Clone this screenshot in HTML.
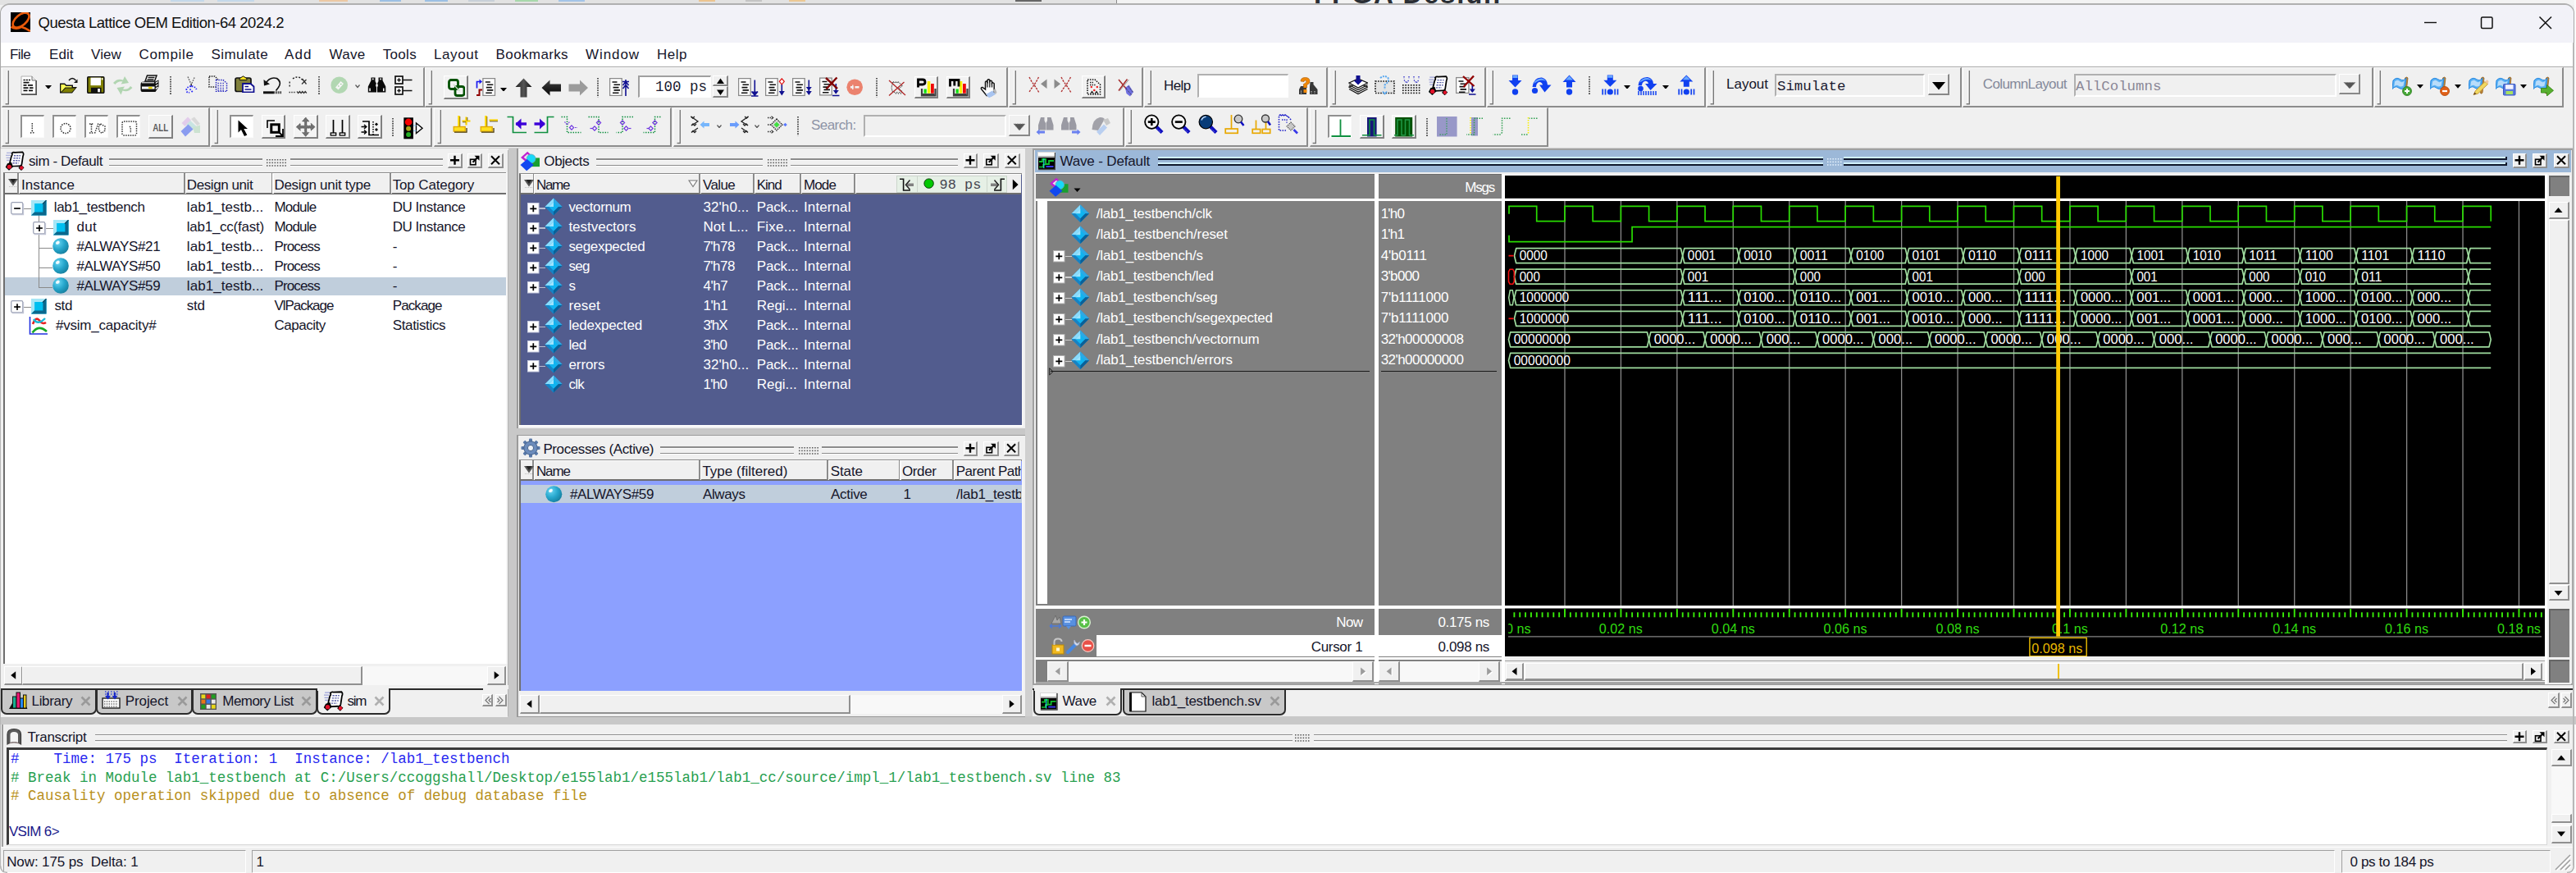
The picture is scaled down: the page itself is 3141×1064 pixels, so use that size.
<!DOCTYPE html><html><head><meta charset="utf-8"><title>Questa</title><style>
html,body{margin:0;padding:0;}
body{width:3141px;height:1064px;position:relative;overflow:hidden;background:#f0f0f0;font-family:"Liberation Sans",sans-serif;}
div,svg{position:absolute;box-sizing:border-box;}
.t{white-space:pre;line-height:20px;height:20px;}
</style></head><body>
<div style="left:0.00px;top:0.00px;width:3141.00px;height:6.00px;background:#e2e2e2;"></div>
<div style="left:1362.00px;top:0.00px;width:1779.00px;height:6.00px;background:#f3f3f3;"></div>
<div style="left:1360.50px;top:0.00px;width:1.50px;height:6.00px;background:#8a8a8a;"></div>
<div style="left:208.00px;top:0.00px;width:41.00px;height:2.20px;background:#c4d8ea;"></div>
<div style="left:265.00px;top:0.00px;width:45.00px;height:2.20px;background:#c4d8ea;"></div>
<div style="left:389.00px;top:0.00px;width:35.00px;height:2.20px;background:#ecc8a4;"></div>
<div style="left:463.00px;top:0.00px;width:26.00px;height:2.20px;background:#9cc0e4;"></div>
<div style="left:518.00px;top:0.00px;width:28.00px;height:2.20px;background:#9cc0e4;"></div>
<div style="left:571.00px;top:0.00px;width:32.00px;height:2.20px;background:#c8d0d8;"></div>
<div style="left:628.00px;top:0.00px;width:28.00px;height:2.20px;background:#a8d8ac;"></div>
<div style="left:681.00px;top:0.00px;width:32.00px;height:2.20px;background:#a4c4e8;"></div>
<div style="left:852.00px;top:0.00px;width:20.00px;height:2.20px;background:#ecc490;"></div>
<div style="left:909.00px;top:0.00px;width:20.00px;height:2.20px;background:#c4c4c4;"></div>
<div style="left:962.00px;top:0.00px;width:20.00px;height:2.20px;background:#ecc894;"></div>
<div style="left:1238.00px;top:0.00px;width:32.00px;height:2.20px;background:#666;"></div>
<div class="t" style="left:1602.00px;top:-17.03px;font-size:33px;color:#2a2e34;font-family:'Liberation Sans', sans-serif;font-weight:bold;letter-spacing:1.761px;">FPGA Design</div>
<div style="left:0px;top:4px;width:3139px;height:1061px;background:#f0f0f0;border:1px solid #a8a8a8;border-top:2px solid #b0b0b0;border-radius:12px 12px 9px 9px;overflow:hidden;"></div>
<div style="left:1px;top:6px;width:3137px;height:46px;background:#f2f2f8;border-radius:11px 11px 0 0;"></div>
<div style="left:3138.60px;top:0.00px;width:3.00px;height:1064.00px;background:#fbfbfb;"></div>
<svg style="left:13.00px;top:15.00px;" width="24.00" height="24.00" viewBox="0 0 24 24"><rect width="24" height="24" fill="#000"/><ellipse cx="12.6" cy="9.6" rx="11.8" ry="6.4" fill="none" stroke="#e85a0a" stroke-width="2.7" transform="rotate(-40 12.6 9.6)"/><path d="M0.5 17.6 Q6.5 21.6 13 17.8 Q18.5 19.3 24 23" stroke="#e85a0a" stroke-width="2.7" fill="none"/></svg>
<div class="t" style="left:46.50px;top:18.39px;font-size:18.5px;color:#111;font-family:'Liberation Sans', sans-serif;letter-spacing:-0.479px;">Questa Lattice OEM Edition-64 2024.2</div>
<svg style="left:2950.00px;top:15.00px;" width="170.00" height="26.00" viewBox="0 0 170 26"><path d="M6 12.5 H21" stroke="#111" stroke-width="1.4"/><rect x="75.5" y="6" width="13.5" height="13.5" rx="1.5" fill="none" stroke="#111" stroke-width="1.5"/><path d="M146.5 5.5 L161 20 M161 5.5 L146.5 20" stroke="#111" stroke-width="1.5"/></svg>
<div style="left:1.00px;top:52.00px;width:3137.00px;height:28.50px;background:#ffffff;"></div>
<div class="t" style="left:12.00px;top:56.51px;font-size:17px;color:#15152a;font-family:'Liberation Sans', sans-serif;letter-spacing:-0.598px;">File</div>
<div class="t" style="left:60.00px;top:56.51px;font-size:17px;color:#15152a;font-family:'Liberation Sans', sans-serif;letter-spacing:0.052px;">Edit</div>
<div class="t" style="left:111.00px;top:56.51px;font-size:17px;color:#15152a;font-family:'Liberation Sans', sans-serif;letter-spacing:0.115px;">View</div>
<div class="t" style="left:169.50px;top:56.51px;font-size:17px;color:#15152a;font-family:'Liberation Sans', sans-serif;letter-spacing:0.664px;">Compile</div>
<div class="t" style="left:257.60px;top:56.51px;font-size:17px;color:#15152a;font-family:'Liberation Sans', sans-serif;letter-spacing:0.407px;">Simulate</div>
<div class="t" style="left:347.00px;top:56.51px;font-size:17px;color:#15152a;font-family:'Liberation Sans', sans-serif;letter-spacing:1.084px;">Add</div>
<div class="t" style="left:401.50px;top:56.51px;font-size:17px;color:#15152a;font-family:'Liberation Sans', sans-serif;letter-spacing:0.294px;">Wave</div>
<div class="t" style="left:466.80px;top:56.51px;font-size:17px;color:#15152a;font-family:'Liberation Sans', sans-serif;letter-spacing:0.303px;">Tools</div>
<div class="t" style="left:529.00px;top:56.51px;font-size:17px;color:#15152a;font-family:'Liberation Sans', sans-serif;letter-spacing:0.576px;">Layout</div>
<div class="t" style="left:604.60px;top:56.51px;font-size:17px;color:#15152a;font-family:'Liberation Sans', sans-serif;letter-spacing:0.375px;">Bookmarks</div>
<div class="t" style="left:714.00px;top:56.51px;font-size:17px;color:#15152a;font-family:'Liberation Sans', sans-serif;letter-spacing:0.923px;">Window</div>
<div class="t" style="left:801.00px;top:56.51px;font-size:17px;color:#15152a;font-family:'Liberation Sans', sans-serif;letter-spacing:0.509px;">Help</div>
<div style="left:1.00px;top:80.80px;width:3137.00px;height:1.50px;background:#a8a8a8;"></div>
<div style="left:2.4px;top:82.3px;width:515.6999999999999px;height:48.3px;border-top:1px solid #fbfbfb;border-left:1px solid #fbfbfb;border-right:2px solid #8c8c8c;border-bottom:2px solid #8c8c8c;"></div>
<svg style="left:3.90px;top:84.80px;" width="10.00" height="44.30" viewBox="0 0 10 44.3"><path d="M4.9 1 V40.9" fill="none" stroke="#fcfcfc" stroke-width="1.4"/><path d="M6.3 1 V41.699999999999996 H2.6" fill="none" stroke="#787878" stroke-width="1.4"/></svg>
<div style="left:518px;top:82.3px;width:711.2px;height:48.3px;border-top:1px solid #fbfbfb;border-left:1px solid #fbfbfb;border-right:2px solid #8c8c8c;border-bottom:2px solid #8c8c8c;"></div>
<svg style="left:519.50px;top:84.80px;" width="10.00" height="44.30" viewBox="0 0 10 44.3"><path d="M4.9 1 V40.9" fill="none" stroke="#fcfcfc" stroke-width="1.4"/><path d="M6.3 1 V41.699999999999996 H2.6" fill="none" stroke="#787878" stroke-width="1.4"/></svg>
<div style="left:1230.3px;top:82.3px;width:163.8px;height:48.3px;border-top:1px solid #fbfbfb;border-left:1px solid #fbfbfb;border-right:2px solid #8c8c8c;border-bottom:2px solid #8c8c8c;"></div>
<svg style="left:1231.80px;top:84.80px;" width="10.00" height="44.30" viewBox="0 0 10 44.3"><path d="M4.9 1 V40.9" fill="none" stroke="#fcfcfc" stroke-width="1.4"/><path d="M6.3 1 V41.699999999999996 H2.6" fill="none" stroke="#787878" stroke-width="1.4"/></svg>
<div style="left:1395.4px;top:82.3px;width:223.8px;height:48.3px;border-top:1px solid #fbfbfb;border-left:1px solid #fbfbfb;border-right:2px solid #8c8c8c;border-bottom:2px solid #8c8c8c;"></div>
<svg style="left:1396.90px;top:84.80px;" width="10.00" height="44.30" viewBox="0 0 10 44.3"><path d="M4.9 1 V40.9" fill="none" stroke="#fcfcfc" stroke-width="1.4"/><path d="M6.3 1 V41.699999999999996 H2.6" fill="none" stroke="#787878" stroke-width="1.4"/></svg>
<div style="left:1620.5px;top:82.3px;width:191.00000000000006px;height:48.3px;border-top:1px solid #fbfbfb;border-left:1px solid #fbfbfb;border-right:2px solid #8c8c8c;border-bottom:2px solid #8c8c8c;"></div>
<svg style="left:1622.00px;top:84.80px;" width="10.00" height="44.30" viewBox="0 0 10 44.3"><path d="M4.9 1 V40.9" fill="none" stroke="#fcfcfc" stroke-width="1.4"/><path d="M6.3 1 V41.699999999999996 H2.6" fill="none" stroke="#787878" stroke-width="1.4"/></svg>
<div style="left:1812.8px;top:82.3px;width:267.40000000000015px;height:48.3px;border-top:1px solid #fbfbfb;border-left:1px solid #fbfbfb;border-right:2px solid #8c8c8c;border-bottom:2px solid #8c8c8c;"></div>
<svg style="left:1814.30px;top:84.80px;" width="10.00" height="44.30" viewBox="0 0 10 44.3"><path d="M4.9 1 V40.9" fill="none" stroke="#fcfcfc" stroke-width="1.4"/><path d="M6.3 1 V41.699999999999996 H2.6" fill="none" stroke="#787878" stroke-width="1.4"/></svg>
<div style="left:2081.3px;top:82.3px;width:310.49999999999983px;height:48.3px;border-top:1px solid #fbfbfb;border-left:1px solid #fbfbfb;border-right:2px solid #8c8c8c;border-bottom:2px solid #8c8c8c;"></div>
<svg style="left:2082.80px;top:84.80px;" width="10.00" height="44.30" viewBox="0 0 10 44.3"><path d="M4.9 1 V40.9" fill="none" stroke="#fcfcfc" stroke-width="1.4"/><path d="M6.3 1 V41.699999999999996 H2.6" fill="none" stroke="#787878" stroke-width="1.4"/></svg>
<div style="left:2393.2px;top:82.3px;width:500.6000000000002px;height:48.3px;border-top:1px solid #fbfbfb;border-left:1px solid #fbfbfb;border-right:2px solid #8c8c8c;border-bottom:2px solid #8c8c8c;"></div>
<svg style="left:2394.70px;top:84.80px;" width="10.00" height="44.30" viewBox="0 0 10 44.3"><path d="M4.9 1 V40.9" fill="none" stroke="#fcfcfc" stroke-width="1.4"/><path d="M6.3 1 V41.699999999999996 H2.6" fill="none" stroke="#787878" stroke-width="1.4"/></svg>
<div style="left:2894.6px;top:82.3px;width:231.7000000000001px;height:48.3px;border-top:1px solid #fbfbfb;border-left:1px solid #fbfbfb;border-right:2px solid #8c8c8c;border-bottom:2px solid #8c8c8c;"></div>
<svg style="left:2896.10px;top:84.80px;" width="10.00" height="44.30" viewBox="0 0 10 44.3"><path d="M4.9 1 V40.9" fill="none" stroke="#fcfcfc" stroke-width="1.4"/><path d="M6.3 1 V41.699999999999996 H2.6" fill="none" stroke="#787878" stroke-width="1.4"/></svg>
<div style="left:2.4px;top:130.6px;width:253.6px;height:48.099999999999994px;border-top:1px solid #fbfbfb;border-left:1px solid #fbfbfb;border-right:2px solid #8c8c8c;border-bottom:2px solid #8c8c8c;"></div>
<svg style="left:3.90px;top:133.10px;" width="10.00" height="44.10" viewBox="0 0 10 44.099999999999994"><path d="M4.9 1 V40.699999999999996" fill="none" stroke="#fcfcfc" stroke-width="1.4"/><path d="M6.3 1 V41.49999999999999 H2.6" fill="none" stroke="#787878" stroke-width="1.4"/></svg>
<div style="left:257.4px;top:130.6px;width:270.1000000000001px;height:48.099999999999994px;border-top:1px solid #fbfbfb;border-left:1px solid #fbfbfb;border-right:2px solid #8c8c8c;border-bottom:2px solid #8c8c8c;"></div>
<svg style="left:258.90px;top:133.10px;" width="10.00" height="44.10" viewBox="0 0 10 44.099999999999994"><path d="M4.9 1 V40.699999999999996" fill="none" stroke="#fcfcfc" stroke-width="1.4"/><path d="M6.3 1 V41.49999999999999 H2.6" fill="none" stroke="#787878" stroke-width="1.4"/></svg>
<div style="left:529.3px;top:130.6px;width:290.00000000000006px;height:48.099999999999994px;border-top:1px solid #fbfbfb;border-left:1px solid #fbfbfb;border-right:2px solid #8c8c8c;border-bottom:2px solid #8c8c8c;"></div>
<svg style="left:530.80px;top:133.10px;" width="10.00" height="44.10" viewBox="0 0 10 44.099999999999994"><path d="M4.9 1 V40.699999999999996" fill="none" stroke="#fcfcfc" stroke-width="1.4"/><path d="M6.3 1 V41.49999999999999 H2.6" fill="none" stroke="#787878" stroke-width="1.4"/></svg>
<div style="left:821px;top:130.6px;width:549.5px;height:48.099999999999994px;border-top:1px solid #fbfbfb;border-left:1px solid #fbfbfb;border-right:2px solid #8c8c8c;border-bottom:2px solid #8c8c8c;"></div>
<svg style="left:822.50px;top:133.10px;" width="10.00" height="44.10" viewBox="0 0 10 44.099999999999994"><path d="M4.9 1 V40.699999999999996" fill="none" stroke="#fcfcfc" stroke-width="1.4"/><path d="M6.3 1 V41.49999999999999 H2.6" fill="none" stroke="#787878" stroke-width="1.4"/></svg>
<div style="left:1371.6px;top:130.6px;width:223.90000000000015px;height:48.099999999999994px;border-top:1px solid #fbfbfb;border-left:1px solid #fbfbfb;border-right:2px solid #8c8c8c;border-bottom:2px solid #8c8c8c;"></div>
<svg style="left:1373.10px;top:133.10px;" width="10.00" height="44.10" viewBox="0 0 10 44.099999999999994"><path d="M4.9 1 V40.699999999999996" fill="none" stroke="#fcfcfc" stroke-width="1.4"/><path d="M6.3 1 V41.49999999999999 H2.6" fill="none" stroke="#787878" stroke-width="1.4"/></svg>
<div style="left:1596.9px;top:130.6px;width:290.6999999999999px;height:48.099999999999994px;border-top:1px solid #fbfbfb;border-left:1px solid #fbfbfb;border-right:2px solid #8c8c8c;border-bottom:2px solid #8c8c8c;"></div>
<svg style="left:1598.40px;top:133.10px;" width="10.00" height="44.10" viewBox="0 0 10 44.099999999999994"><path d="M4.9 1 V40.699999999999996" fill="none" stroke="#fcfcfc" stroke-width="1.4"/><path d="M6.3 1 V41.49999999999999 H2.6" fill="none" stroke="#787878" stroke-width="1.4"/></svg>
<div style="left:1.00px;top:180.20px;width:3137.00px;height:1.40px;background:#d0d0d0;"></div>
<div style="left:777.5px;top:91.5px;width:89.5px;height:27.5px;background:#fff;border-top:2px solid #a0a0a0;border-left:2px solid #a0a0a0;border-right:1px solid #fff;border-bottom:1px solid #fff;"></div>
<div class="t" style="left:798.99px;top:96.24px;font-size:17.5px;color:#1a1a30;font-family:'Liberation Mono', monospace;letter-spacing:0.000px;">100 ps</div>
<div style="left:868.5px;top:91.5px;width:19.5px;height:13.5px;background:#f0f0f0;border-right:2px solid #888;border-bottom:2px solid #888;border-top:1px solid #fff;border-left:1px solid #fff"></div>
<div style="left:868.5px;top:105px;width:19.5px;height:13.5px;background:#f0f0f0;border-right:2px solid #888;border-bottom:2px solid #888;border-top:1px solid #fff;border-left:1px solid #fff"></div>
<svg style="left:868.50px;top:91.50px;" width="20.00" height="27.00" viewBox="0 0 20 27"><path d="M5 10 L9.5 3.5 L14 10Z M5 17.5 L14 17.5 L9.5 24Z" fill="#000"/></svg>
<div class="t" style="left:989.00px;top:143.41px;font-size:17px;color:#8d93a6;font-family:'Liberation Sans', sans-serif;letter-spacing:-0.570px;">Search:</div>
<div style="left:1053px;top:139.5px;width:173.5px;height:27.5px;background:#f0f0f0;border-top:2px solid #b0b0b0;border-left:2px solid #b0b0b0;border-right:2px solid #fff;border-bottom:2px solid #fff;"></div>
<div style="left:1230px;top:139.5px;width:25.5px;height:26px;background:#f0f0f0;border-right:2px solid #888;border-bottom:2px solid #888;border-top:1px solid #fff;border-left:1px solid #fff"></div>
<svg style="left:1230.00px;top:139.50px;" width="26.00" height="26.00" viewBox="0 0 26 26"><path d="M6 11 L20 11 L13 19Z" fill="#555" stroke="#888" stroke-width="1" stroke-dasharray="1 1"/></svg>
<div class="t" style="left:1419.00px;top:94.91px;font-size:17px;color:#15152a;font-family:'Liberation Sans', sans-serif;letter-spacing:-0.616px;">Help</div>
<div style="left:1460px;top:90px;width:111px;height:28.5px;background:#fff;border-top:2px solid #b0b0b0;border-left:2px solid #b0b0b0;border-right:1px solid #fff;border-bottom:1px solid #fff;"></div>
<div class="t" style="left:2105.00px;top:93.41px;font-size:17px;color:#15152a;font-family:'Liberation Sans', sans-serif;letter-spacing:-0.007px;">Layout</div>
<div style="left:2163.5px;top:90px;width:183.5px;height:28px;background:#f0f0f0;border-top:2px solid #b0b0b0;border-left:2px solid #b0b0b0;border-right:2px solid #fff;border-bottom:2px solid #fff;"></div>
<div class="t" style="left:2167.00px;top:96.27px;font-size:17.4px;color:#1a1a30;font-family:'Liberation Mono', monospace;letter-spacing:0.000px;">Simulate</div>
<div style="left:2350.5px;top:90px;width:26px;height:25.5px;background:#f0f0f0;border-right:2px solid #888;border-bottom:2px solid #888;border-top:1px solid #fff;border-left:1px solid #fff"></div>
<svg style="left:2350.50px;top:90.00px;" width="26.00" height="26.00" viewBox="0 0 26 26"><path d="M5 10 L21 10 L13 19.5Z" fill="#000"/></svg>
<div class="t" style="left:2417.80px;top:93.41px;font-size:17px;color:#84899a;font-family:'Liberation Sans', sans-serif;letter-spacing:-0.635px;">ColumnLayout</div>
<div style="left:2528.5px;top:90px;width:320px;height:27.5px;background:#f0f0f0;border-top:2px solid #b0b0b0;border-left:2px solid #b0b0b0;border-right:2px solid #fff;border-bottom:2px solid #fff;"></div>
<div class="t" style="left:2531.00px;top:96.27px;font-size:17.4px;color:#8a8796;font-family:'Liberation Mono', monospace;letter-spacing:0.000px;">AllColumns</div>
<div style="left:2852px;top:90px;width:26px;height:25px;background:#f0f0f0;border-right:2px solid #888;border-bottom:2px solid #888;border-top:1px solid #fff;border-left:1px solid #fff"></div>
<svg style="left:2852.00px;top:90.00px;" width="26.00" height="25.00" viewBox="0 0 26 25"><path d="M6 10.5 L20 10.5 L13 18Z" fill="#555" stroke="#888" stroke-width="1" stroke-dasharray="1 1"/></svg>
<svg style="left:25.00px;top:91.50px;" width="20.00" height="24.00" viewBox="0 0 20 24"><path d="M1 1 H14 L19 6 V23 H1Z" fill="#fff" stroke="#b0b0b0" stroke-width="1"/><path d="M19.2 6 V23.2 H1" fill="none" stroke="#555" stroke-width="1.8"/><path d="M14 1 V6 H19" fill="#e8e8e8" stroke="#777" stroke-width="1"/><path d="M3.5 5.5 h8.5" stroke="#111" stroke-width="1.6" stroke-dasharray="2.2 1"/><path d="M3.5 8.7 h7 M3.5 11.9 h4 M9 11.9 h6 M3.5 15.1 h6 M11 15.1 h4.5 M3.5 18.3 h5 M10 18.3 h5" stroke="#111" stroke-width="1.7"/></svg>
<svg style="left:54.80px;top:103.50px;" width="8.00" height="4.80" viewBox="0 0 8 4.8"><path d="M0 0 H8 L4.0 4.8Z" fill="#000"/></svg>
<svg style="left:71.50px;top:94.00px;" width="23.00" height="20.00" viewBox="0 0 23 20"><path d="M12 4 Q16 -1 20.5 4" fill="none" stroke="#111" stroke-width="1.5"/><path d="M22.5 2.5 V7 H18Z" fill="#111"/><path d="M1 7.5 H7 L9 9.5 H17 V12 H22 L16 19.5 H1Z" fill="#111"/><path d="M2.3 9 H6.5 L8.5 11 H15.5 V12.5 H7.5 L2.3 18Z" fill="#ffff58"/><path d="M8 13.5 H20 L15.5 18.5 H3Z" fill="#808000"/></svg>
<svg style="left:106.00px;top:93.00px;" width="21.50" height="21.00" viewBox="0 0 21.5 21"><rect x="0.8" y="0.8" width="20" height="19.5" rx="1" fill="#808000" stroke="#111" stroke-width="1.6"/><rect x="4.5" y="1.6" width="12.5" height="9.5" fill="#fff"/><rect x="17.8" y="2" width="1.6" height="2.4" fill="#fff"/><rect x="5" y="13.8" width="12.5" height="6" fill="#111"/><rect x="13.2" y="15" width="2.7" height="4.3" fill="#fff"/></svg>
<svg style="left:137.00px;top:91.50px;" width="25.50" height="24.50" viewBox="0 0 25.5 24.5"><g fill="#9ccc9c" opacity="0.75"><path d="M1 9 Q6 3 13 5.5 L15 1 L20 9 L10.5 10.5 L12.5 7.5 Q7 6.5 3.5 11Z"/><path d="M24.5 15 Q19 21 12.5 18.5 L10.5 23.5 L5.5 15 L15 13.5 L13 16.5 Q18.5 18 22 13Z"/></g></svg>
<svg style="left:170.00px;top:91.00px;" width="25.00" height="22.50" viewBox="0 0 25 22.5"><path d="M7 8 L9.5 1 H21 L18.5 8Z" fill="#fff" stroke="#111" stroke-width="1.5"/><path d="M10.5 3.5 h8 M9.5 6 h8" stroke="#111" stroke-width="1.4"/><path d="M1.5 12 Q1.5 8.5 5 8.5 H19 L23.5 6.5 V15 L19.5 21 H3.5 Q1.5 21 1.5 18Z" fill="#111"/><path d="M3 14.5 H18.5 V17.5 H3Z" fill="#fff"/><rect x="11" y="14.8" width="4.6" height="2.4" fill="#e8d800"/><path d="M19.8 10.5 L22.5 8.5 M19.8 14 L22.5 12 M19.8 17.5 L22.5 15" stroke="#fff" stroke-width="1.3"/><path d="M3 9.8 H18" stroke="#fff" stroke-width="1.1"/></svg>
<svg style="left:206.70px;top:93.00px;" width="2.00" height="22.50" viewBox="0 0 2 22.5"><path d="M1 0 V22.5" stroke="#333" stroke-width="1.6" stroke-dasharray="1.6 1.3"/></svg>
<svg style="left:225.50px;top:92.50px;" width="15.00" height="22.00" viewBox="0 0 15 22"><path d="M3 0.5 L7.3 10 L11.5 0.5" fill="none" stroke="#666" stroke-width="1.4" stroke-dasharray="1.8 1.2"/><path d="M7.3 9 V12" stroke="#444" stroke-width="1.4"/><path d="M7 12 Q1 13 1.2 17.5 Q2.5 21 5 19.5 M7.5 12 Q13 13 13.5 16 M5.5 15.5 L9 19.5" fill="none" stroke="#2828f8" stroke-width="1.8" stroke-dasharray="1.7 1.5"/></svg>
<svg style="left:254.00px;top:91.50px;" width="24.00" height="20.50" viewBox="0 0 24 20.5"><path d="M1 1 H8 L11 4 V14 H1Z" fill="none" stroke="#222" stroke-width="1.5" stroke-dasharray="1.5 1.3"/><path d="M9.5 5.5 H18 L22.5 9.5 V19.5 H9.5Z" fill="#f0f0f0" stroke="#2828c0" stroke-width="1.5" stroke-dasharray="1.5 1.3"/><path d="M11.5 9.5 h9 M11.5 12.5 h9 M11.5 15.5 h9 M11.5 18 h9" stroke="#2828c0" stroke-width="1.4" stroke-dasharray="1.3 1.7"/></svg>
<svg style="left:286.00px;top:91.50px;" width="24.50" height="21.50" viewBox="0 0 24.5 21.5"><rect x="1" y="3" width="19" height="16.5" rx="2" fill="#80803c" stroke="#111" stroke-width="1.7"/><path d="M6 3.8 L10.5 0.8 L15 3.8 V5.5 H6Z" fill="#f8e020" stroke="#111" stroke-width="1"/><path d="M10 10 H19.5 L23.5 13.5 V20.5 H10Z" fill="#fff" stroke="#101090" stroke-width="1.8"/><path d="M12.5 13.5 h4.5 M12.5 17 h8" stroke="#101090" stroke-width="1.6"/></svg>
<svg style="left:320.00px;top:92.50px;" width="23.50" height="22.00" viewBox="0 0 23.5 22"><path d="M3.5 9 Q9 0 17.5 2.5 Q24 7 19.5 13.5 L16.5 17.5" fill="none" stroke="#111" stroke-width="1.6"/><path d="M1.5 4 L2 11.5 L9 9.5Z" fill="#111"/><path d="M1 19.8 H14" stroke="#111" stroke-width="3"/><path d="M14.5 19.8 H23" stroke="#111" stroke-width="3" stroke-dasharray="1.2 1.2"/></svg>
<svg style="left:351.50px;top:92.50px;" width="23.50" height="22.00" viewBox="0 0 23.5 22"><path d="M5 3 Q9.5 -0.5 14.5 2 L19.5 7" fill="none" stroke="#222" stroke-width="1.5" stroke-dasharray="2 1.8"/><path d="M16.5 3 L21.5 9.5 M21.5 4 L16 9.5" stroke="#333" stroke-width="1.3"/><path d="M1.2 6.5 v2 M1.2 10.5 v2" stroke="#333" stroke-width="1.5"/><path d="M0.5 19.5 H9" stroke="#333" stroke-width="1.5" stroke-dasharray="1.4 1.4"/><path d="M10 18.5 l1.7 2 l1.7 -2 l1.7 2 l1.7 -2 l1.7 2 l1.7 -2 l1.7 2" fill="none" stroke="#333" stroke-width="1.2"/></svg>
<svg style="left:387.80px;top:93.00px;" width="2.00" height="22.50" viewBox="0 0 2 22.5"><path d="M1 0 V22.5" stroke="#333" stroke-width="1.6" stroke-dasharray="1.6 1.3"/></svg>
<svg style="left:402.70px;top:92.50px;" width="21.50" height="21.50" viewBox="0 0 21.5 21.5"><circle cx="10.7" cy="10.7" r="10.3" fill="#8cc88c" opacity="0.62"/><path d="M6 13.5 L12.5 6 L16 9 L9.5 16.5Z" fill="#f4f4f4"/><path d="M9 12 h1.5 M12 9.5 h1.5" stroke="#8cc88c" stroke-width="1.2"/></svg>
<svg style="left:432.50px;top:103.00px;" width="6.00" height="4.50" viewBox="0 0 6 4.5"><path d="M0.5 0.5 L3 3.5 L5.5 0.5" fill="none" stroke="#555" stroke-width="1.2"/></svg>
<svg style="left:447.80px;top:92.50px;" width="23.00" height="20.50" viewBox="0 0 23 20.5"><path d="M4.5 1.5 H9.5 V6 L11 9 V19.5 H0.8 V12.5 L4.5 5Z M13.5 1.5 H18.5 V5 L22.3 12.5 V19.5 H12 V9 L13.5 6Z" fill="#0a0a0a"/><rect x="6" y="2.5" width="1.6" height="1.8" fill="#fff"/><rect x="15.3" y="2.5" width="1.6" height="1.8" fill="#fff"/><rect x="2.3" y="14.5" width="1.5" height="3.6" fill="#fff"/><rect x="19" y="14.5" width="1.5" height="3.6" fill="#fff"/><rect x="10.2" y="9.5" width="2.6" height="3" fill="#f0f0f0"/></svg>
<svg style="left:481.00px;top:91.50px;" width="22.00" height="24.00" viewBox="0 0 22 24"><rect x="1" y="1" width="9" height="9" fill="#fff" stroke="#111" stroke-width="1.7"/><rect x="1" y="14" width="9" height="9" fill="#fff" stroke="#111" stroke-width="1.7"/><path d="M10 5.5 H21.5 M10 18.5 H21.5" stroke="#111" stroke-width="1.6"/><path d="M3.3 5.5 h4.4 M5.5 3.3 v4.4 M3.3 18.5 h4.4 M5.5 16.3 v4.4" stroke="#111" stroke-width="1.5"/></svg>
<div style="left:541px;top:91.5px;width:30px;height:29.299999999999997px;background:#f2f2f2;border-top:1px solid #fff;border-left:1px solid #fff;border-right:2px solid #808080;border-bottom:2px solid #808080;"></div>
<svg style="left:545.50px;top:95.50px;" width="21.50" height="22.00" viewBox="0 0 21.5 22"><rect x="1.5" y="1.5" width="11" height="11" rx="2.5" fill="none" stroke="#005000" stroke-width="2.8"/><rect x="9" y="9.5" width="11" height="11" rx="2.5" fill="none" stroke="#005000" stroke-width="2.8"/><path d="M7 7 L14.5 15" stroke="#c8d8c8" stroke-width="1.2"/></svg>
<svg style="left:580.00px;top:94.50px;" width="24.50" height="22.50" viewBox="0 0 24.5 22.5"><g transform="translate(8.3,0)"><rect x="0.6" y="0.6" width="14.600000000000001" height="20.8" fill="#fff" stroke="#8a8a8a" stroke-width="1.3"/><path d="M3.5 5 h6 M5.5 8.3 h7.5 M4.5 11.6 h7 M5.5 14.9 h7.5 M4 18.2 h7.5" stroke="#111" stroke-width="1.6"/></g><path d="M1.5 12.5 V4.5 H5.5" fill="none" stroke="#1818f0" stroke-width="1.7"/><path d="M4.5 1.5 L8 4.5 L4.5 7.5Z" fill="#1818f0"/><path d="M1 21 H4.5 V14.5 H8" fill="none" stroke="#900000" stroke-width="2"/></svg>
<svg style="left:610.00px;top:106.50px;" width="8.00" height="4.80" viewBox="0 0 8 4.8"><path d="M0 0 H8 L4.0 4.8Z" fill="#000"/></svg>
<svg style="left:628.00px;top:94.50px;" width="21.00" height="24.00" viewBox="0 0 21 24"><defs><linearGradient id="ga" x1="0" x2="1"><stop offset="0" stop-color="#222"/><stop offset="0.5" stop-color="#555"/><stop offset="1" stop-color="#111"/></linearGradient></defs><path d="M10.5 0.5 L20.5 11 H14.5 V23.5 H6.5 V11 H0.5Z" fill="url(#ga)"/></svg>
<svg style="left:659.50px;top:96.50px;" width="24.50" height="20.00" viewBox="0 0 24.5 20"><defs><linearGradient id="gb" x1="0" x2="0" y1="0" y2="1"><stop offset="0" stop-color="#444"/><stop offset="0.5" stop-color="#222"/><stop offset="1" stop-color="#080808"/></linearGradient></defs><path d="M0.5 10 L10.5 0.5 V5.5 H24 V14.5 H10.5 V19.5Z" fill="url(#gb)"/></svg>
<svg style="left:692.50px;top:96.50px;" width="24.50" height="20.00" viewBox="0 0 24.5 20"><path d="M24 10 L14 0.5 V5.5 H0.5 V14.5 H14 V19.5Z" fill="#555" opacity="0.55"/></svg>
<svg style="left:728.40px;top:95.00px;" width="2.00" height="23.50" viewBox="0 0 2 23.5"><path d="M1 0 V23.5" stroke="#333" stroke-width="1.6" stroke-dasharray="1.6 1.3"/></svg>
<svg style="left:742.50px;top:94.50px;" width="26.00" height="22.50" viewBox="0 0 26 22.5"><rect x="0.6" y="0.6" width="14.600000000000001" height="20.8" fill="#fff" stroke="#8a8a8a" stroke-width="1.3"/><path d="M3.5 5 h6 M5.5 8.3 h7.5 M4.5 11.6 h7 M5.5 14.9 h7.5 M4 18.2 h7.5" stroke="#111" stroke-width="1.6"/><path d="M20 22 V2 M16 4.5 H24 M16.5 9 L20 4.5 L23.5 9 M16.5 13 L20 8.5 L23.5 13" fill="none" stroke="#101090" stroke-width="1.6"/></svg>
<svg style="left:900.00px;top:94.50px;" width="25.00" height="23.00" viewBox="0 0 25 23"><rect x="0.6" y="0.6" width="14.600000000000001" height="20.8" fill="#fff" stroke="#8a8a8a" stroke-width="1.3"/><path d="M3.5 5 h6 M5.5 8.3 h7.5 M4.5 11.6 h7 M5.5 14.9 h7.5 M4 18.2 h7.5" stroke="#111" stroke-width="1.6"/><path d="M20.3 2.5 V21.5 M16.5 16.5 L20.3 21 L24 16.5 M16 22 H24.5" fill="none" stroke="#101090" stroke-width="1.6"/><path d="M16.8 16.5 H23.8 L20.3 21Z" fill="#101090"/></svg>
<svg style="left:933.30px;top:94.50px;" width="25.00" height="23.00" viewBox="0 0 25 23"><rect x="0.6" y="0.6" width="14.600000000000001" height="20.8" fill="#fff" stroke="#8a8a8a" stroke-width="1.3"/><path d="M3.5 5 h6 M5.5 8.3 h7.5 M4.5 11.6 h7 M5.5 14.9 h7.5 M4 18.2 h7.5" stroke="#111" stroke-width="1.6"/><path d="M20.3 8 V20" stroke="#101090" stroke-width="1.6"/><path d="M16.8 16 H23.8 L20.3 21.5Z" fill="#101090"/><path d="M20.3 0.8 L23.3 4.3 L20.3 7.8 L17.3 4.3Z" fill="#fff" stroke="#e01010" stroke-width="1.2"/></svg>
<svg style="left:966.30px;top:94.50px;" width="25.00" height="23.00" viewBox="0 0 25 23"><rect x="0.6" y="0.6" width="14.600000000000001" height="20.8" fill="#fff" stroke="#8a8a8a" stroke-width="1.3"/><path d="M3.5 5 h6 M5.5 8.3 h7.5 M4.5 11.6 h7 M5.5 14.9 h7.5 M4 18.2 h7.5" stroke="#111" stroke-width="1.6"/><path d="M20.3 2.5 V19" stroke="#101090" stroke-width="1.6"/><path d="M16.8 11 H23.8 L20.3 15.5Z M16.8 16 H23.8 L20.3 21Z" fill="#101090"/></svg>
<svg style="left:999.00px;top:93.00px;" width="25.00" height="24.50" viewBox="0 0 25 24.5"><g transform="translate(0,1.5)"><rect x="0.6" y="0.6" width="14.600000000000001" height="20.8" fill="#fff" stroke="#8a8a8a" stroke-width="1.3"/><path d="M3.5 5 h6 M5.5 8.3 h7.5 M4.5 11.6 h7 M5.5 14.9 h7.5 M4 18.2 h7.5" stroke="#111" stroke-width="1.6"/></g><path d="M20.3 9 V21 M16 23.5 H24.5" stroke="#101090" stroke-width="1.6"/><path d="M16.8 17 H23.8 L20.3 21.5Z" fill="#101090"/><path d="M8 2 L22 15 M21.5 1.5 L8.5 15.5" stroke="#800000" stroke-width="2.4"/></svg>
<svg style="left:1032.00px;top:96.00px;" width="20.50" height="20.50" viewBox="0 0 20.5 20.5"><circle cx="10.2" cy="10.2" r="9.8" fill="#e83818" opacity="0.6"/><path d="M5 10.2 h3.5 M10.5 10.2 h5" stroke="#f4f4f4" stroke-width="2.4"/><path d="M7.8 7.5 v5.5" stroke="#f4f4f4" stroke-width="1.4"/></svg>
<svg style="left:1067.70px;top:95.00px;" width="2.00" height="23.50" viewBox="0 0 2 23.5"><path d="M1 0 V23.5" stroke="#333" stroke-width="1.6" stroke-dasharray="1.6 1.3"/></svg>
<svg style="left:1082.50px;top:96.50px;" width="22.00" height="20.50" viewBox="0 0 22 20.5"><path d="M6 2.5 l1.5 1.5 l1.5 -1.5 l1.5 1.5 l1.5 -1.5 l1.5 1.5 L17 7.5 L13 11 L17 14.5 l-1.5 2.5 l-1.5 -1.5 l-1.5 1.5 l-1.5 -1.5 l-1.5 1.5 l-1.5 -1.5 L5 14 Q3.5 10 5 6Z" fill="none" stroke="#444" stroke-width="1.1" stroke-dasharray="1.3 0.9"/><path d="M1 1 L21 19 M19.5 3 L1 19.5" stroke="#b02828" stroke-width="1.3"/></svg>
<div style="left:1115px;top:92.5px;width:29px;height:27.799999999999997px;background:#f2f2f2;border-top:1px solid #fff;border-left:1px solid #fff;border-right:2px solid #808080;border-bottom:2px solid #808080;"></div>
<svg style="left:1115.00px;top:92.50px;" width="29.00" height="28.00" viewBox="0 0 29 28"><path d="M9 15 V23.5 H25.5 V15" fill="none" stroke="#404040" stroke-width="2.2"/><rect x="10" y="21" width="14.5" height="2.6" fill="#404040"/><rect x="11.5" y="15.5" width="3.3" height="5.2" fill="#10e010"/><rect x="15.8" y="6" width="3.5" height="14.7" fill="#f8f000"/><rect x="20" y="9" width="3.8" height="11.7" fill="#f00808"/><path d="M4.5 13.5 V4 H10 Q13 4 13 7 Q13 10 10 10 H4.5" fill="none" stroke="#000" stroke-width="2.8"/></svg>
<div style="left:1153.7px;top:92.5px;width:29.0px;height:27.799999999999997px;background:#f2f2f2;border-top:1px solid #fff;border-left:1px solid #fff;border-right:2px solid #808080;border-bottom:2px solid #808080;"></div>
<svg style="left:1153.70px;top:92.50px;" width="29.00" height="28.00" viewBox="0 0 29 28"><path d="M9 15 V23.5 H25.5 V15" fill="none" stroke="#404040" stroke-width="2.2"/><rect x="10" y="21" width="14.5" height="2.6" fill="#404040"/><rect x="11.5" y="15.5" width="3.3" height="5.2" fill="#10e010"/><rect x="15.8" y="6" width="3.5" height="14.7" fill="#f8f000"/><rect x="20" y="9" width="3.8" height="11.7" fill="#f00808"/><path d="M4.5 12.5 V4.5 H15 V12.5 M9.8 4.5 V11.5" fill="none" stroke="#000" stroke-width="2.8"/></svg>
<svg style="left:1192.50px;top:94.50px;" width="23.00" height="24.50" viewBox="0 0 23 24.5"><path d="M8.5 14 V5 Q9.7 3.2 11 5 V2.8 Q12.4 0.8 13.8 2.8 V4 Q15.2 2.2 16.5 4.2 V6.5 Q18 5 19.2 7 V15 Q19.5 19 16 21.5 H10 L3.5 13.5 Q2.8 11.2 5 11.5Z" fill="#fff" stroke="#111" stroke-width="1.5"/><path d="M11 5 V11.5 M13.8 4 V11.5 M16.5 6 V11.5" stroke="#111" stroke-width="1.2"/><path d="M9 20 L17 15.5 L21 20 L13 24.3Z" fill="#a8c4f0"/><path d="M17.5 15 L20.5 13 L22.5 17.5 L21 20Z" fill="#b8b8b8"/></svg>
<svg style="left:1254.00px;top:93.00px;" width="14.00" height="21.00" viewBox="0 0 14 21"><path d="M1 1 L4 6.5 L7 10.5 L3.5 15 L0.5 20 M12.5 1 L9.5 6.5 L7 10.5 L10 15 L13 20" fill="none" stroke="#b03030" stroke-width="1.4" stroke-dasharray="2.6 1.2"/></svg>
<svg style="left:1267.50px;top:96.00px;" width="9.00" height="12.50" viewBox="0 0 9 12.5"><path d="M8.5 0.5 L1 6.2 L8.5 12 Z" fill="#555" opacity="0.65"/></svg>
<svg style="left:1284.80px;top:96.00px;" width="9.00" height="12.50" viewBox="0 0 9 12.5"><path d="M0.5 0.5 L8 6.2 L0.5 12 Z" fill="#555" opacity="0.65"/></svg>
<svg style="left:1293.30px;top:93.00px;" width="14.00" height="21.00" viewBox="0 0 14 21"><path d="M1 1 L4 6.5 L7 10.5 L3.5 15 L0.5 20 M12.5 1 L9.5 6.5 L7 10.5 L10 15 L13 20" fill="none" stroke="#b03030" stroke-width="1.4" stroke-dasharray="2.6 1.2"/></svg>
<div style="left:1319px;top:91.5px;width:29.299999999999955px;height:28.799999999999997px;background:#f2f2f2;border-top:1px solid #fff;border-left:1px solid #fff;border-right:2px solid #808080;border-bottom:2px solid #808080;"></div>
<svg style="left:1325.00px;top:96.00px;" width="18.00" height="20.00" viewBox="0 0 18 20"><path d="M1 1 H10 L16.5 7 V19 H1Z" fill="none" stroke="#111" stroke-width="1.6" stroke-dasharray="1.5 1.4"/><path d="M4 4.5 h5 M4 7.5 h7" stroke="#111" stroke-width="1.3" stroke-dasharray="1.3 1.3"/><path d="M4.5 18.5 l2 -3 l2 3 M10 18.5 l2 -3 l2 3" fill="none" stroke="#111" stroke-width="1.2"/><circle cx="5.8" cy="10" r="1.2" fill="#f02020"/><circle cx="12.8" cy="10" r="1.2" fill="#f02020"/><circle cx="9.3" cy="14" r="1.3" fill="#f02020"/></svg>
<svg style="left:1362.50px;top:95.50px;" width="20.00" height="23.00" viewBox="0 0 20 23"><path d="M1 1 L10.5 12.5 M11.5 0.5 L1 14.5" stroke="#a83030" stroke-width="1.6"/><path d="M13.5 1 L2.5 14.5" stroke="#999" stroke-width="1"/><path d="M9 11 L13.5 7.5 L19 16 L15 21.5 L10.5 18Z" fill="#3838d8" opacity="0.7"/><path d="M10 12 L17 20 M12.5 9 L19 17" stroke="#333" stroke-width="1" stroke-dasharray="1 1"/></svg>
<svg style="left:1582.50px;top:92.50px;" width="24.50" height="22.50" viewBox="0 0 24.5 22.5"><path d="M14.5 7 H18.5 V10 L23.5 16 V22 H14 V13Z M3 12 H7 L10 14 V22 H1 V16Z" fill="#383838"/><path d="M16 18 v3 M20 18 v3 M3.5 17.5 v3.5" stroke="#c8c8c8" stroke-width="1.2" stroke-dasharray="1.3 1"/><path d="M3 6 Q3 1.5 8.5 1.5 Q14 1.5 14 6 Q14 9 10.5 10.5 L10.5 14 H6.5 V9.5 Q10 8 10 6 Q10 5 8.5 5 Q7 5 7 6.5Z" fill="#f08808" stroke="#a85800" stroke-width="0.6"/><rect x="6.5" y="16" width="4" height="4" fill="#f08808"/></svg>
<svg style="left:1643.80px;top:91.00px;" width="24.50" height="25.00" viewBox="0 0 24.5 25"><path d="M1 15 L12 10 L23.5 15 L12 21Z" fill="#fff" stroke="#111" stroke-width="1.3"/><path d="M1 17.5 L12 23.5 L23.5 17.5 M1 12.5 L12 18.5 L23.5 12.5" fill="none" stroke="#111" stroke-width="1.3"/><path d="M1 10 L12 5 L23.5 10 L12 16Z" fill="#fff" stroke="#111" stroke-width="1.3"/><path d="M9.5 1 H14.5 V7 H17.5 L12 12.5 L6.5 7 H9.5Z" fill="#101090"/></svg>
<svg style="left:1675.50px;top:91.50px;" width="25.00" height="24.00" viewBox="0 0 25 24"><rect x="1" y="7" width="23" height="14.5" fill="#e4e4e4" stroke="#111" stroke-width="1.6" stroke-dasharray="1.6 1.5"/><path d="M7 3 Q12 -1 16.5 3 Q18.5 7 12.5 11.5 V17" fill="none" stroke="#58a8f0" stroke-width="2" stroke-dasharray="2 1.2"/><path d="M10 19.5 L12.5 22.5 L15 19.5" fill="none" stroke="#58a8f0" stroke-width="1.5"/></svg>
<svg style="left:1708.50px;top:91.50px;" width="24.00" height="24.00" viewBox="0 0 24 24"><rect x="1.0" y="11.0" width="1.6" height="1.6" fill="#111"/><rect x="1.0" y="14.2" width="1.6" height="1.6" fill="#111"/><rect x="1.0" y="17.4" width="1.6" height="1.6" fill="#111"/><rect x="1.0" y="20.6" width="1.6" height="1.6" fill="#111"/><rect x="4.3" y="11.0" width="1.6" height="1.6" fill="#111"/><rect x="4.3" y="14.2" width="1.6" height="1.6" fill="#111"/><rect x="4.3" y="17.4" width="1.6" height="1.6" fill="#111"/><rect x="4.3" y="20.6" width="1.6" height="1.6" fill="#111"/><rect x="7.6" y="11.0" width="1.6" height="1.6" fill="#111"/><rect x="7.6" y="14.2" width="1.6" height="1.6" fill="#111"/><rect x="7.6" y="17.4" width="1.6" height="1.6" fill="#111"/><rect x="7.6" y="20.6" width="1.6" height="1.6" fill="#111"/><rect x="10.9" y="11.0" width="1.6" height="1.6" fill="#111"/><rect x="10.9" y="14.2" width="1.6" height="1.6" fill="#111"/><rect x="10.9" y="17.4" width="1.6" height="1.6" fill="#111"/><rect x="10.9" y="20.6" width="1.6" height="1.6" fill="#111"/><rect x="14.2" y="11.0" width="1.6" height="1.6" fill="#111"/><rect x="14.2" y="14.2" width="1.6" height="1.6" fill="#111"/><rect x="14.2" y="17.4" width="1.6" height="1.6" fill="#111"/><rect x="14.2" y="20.6" width="1.6" height="1.6" fill="#111"/><rect x="17.5" y="11.0" width="1.6" height="1.6" fill="#111"/><rect x="17.5" y="14.2" width="1.6" height="1.6" fill="#111"/><rect x="17.5" y="17.4" width="1.6" height="1.6" fill="#111"/><rect x="17.5" y="20.6" width="1.6" height="1.6" fill="#111"/><rect x="20.8" y="11.0" width="1.6" height="1.6" fill="#111"/><rect x="20.8" y="14.2" width="1.6" height="1.6" fill="#111"/><rect x="20.8" y="17.4" width="1.6" height="1.6" fill="#111"/><rect x="20.8" y="20.6" width="1.6" height="1.6" fill="#111"/><path d="M3 1 v3 M9 1 v3 M15 1 v3 M21 1 v3" stroke="#3838c8" stroke-width="1.4" stroke-dasharray="1.4 1.4"/><path d="M3 5.5 L6 9 L9 5.5 M15 5.5 L18 9 L21 5.5" fill="none" stroke="#3838c8" stroke-width="1.3" stroke-dasharray="1.4 1"/></svg>
<svg style="left:1741.00px;top:91.50px;" width="25.00" height="24.50" viewBox="0 0 24 24"><path d="M2 2 h6 M1 5 h6 M1.5 8 h5 M2 11 h4" stroke="#9aa0d8" stroke-width="1.2"/><path d="M8.5 2.5 Q10 0.8 12 1.6 L21.5 1.2 Q23.5 3 22 6 L20.5 16 Q20 18.5 17 18 L7 18.5 Q5 17 6 14 L8 6 Q9.5 4.5 8.5 2.5Z" fill="#fff" stroke="#000" stroke-width="1.7"/><path d="M11 5.5 h8 M10.5 8.5 h8 M10 11.5 h8 M9.5 14.5 h7" stroke="#5a60a8" stroke-width="1.3" stroke-dasharray="2.2 1"/><path d="M3 15 L8 13.5 L10 19 L5 23.5 L0.7 19.5Z" fill="#000"/><path d="M19.5 16.5 L23.5 20 L20 23.8 L16.5 20.5Z" fill="#000"/><circle cx="5.3" cy="19" r="2.6" fill="#e01028"/><circle cx="20.2" cy="20.3" r="2.2" fill="#e01028"/></svg>
<svg style="left:1774.50px;top:91.50px;" width="25.00" height="24.50" viewBox="0 0 25 24.5"><g transform="translate(0,2)"><rect x="0.6" y="0.6" width="15.3" height="18.8" fill="#fff" stroke="#8a8a8a" stroke-width="1.3"/><path d="M3.5 5 h6 M5.5 8.3 h7.5 M4.5 11.6 h7 M5.5 14.9 h7.5 M4 18.2 h7.5" stroke="#111" stroke-width="1.6"/></g><path d="M20.3 11 V20 M16 23 H24.5" stroke="#101090" stroke-width="1.6"/><path d="M16.8 16.5 H23.8 L20.3 21Z" fill="#101090"/><path d="M9 1 L22.5 13 M22 0.5 L9.5 14" stroke="#900000" stroke-width="2.3"/></svg>
<svg style="left:1839.30px;top:91.00px;" width="17.00" height="25.00" viewBox="0 0 17 25"><path d="M5 0.5 H12 V7 H16.5 L8.5 15.5 L0.5 7 H5Z" fill="#1040f0"/><path d="M5.5 1 H11.5 V4 H5.5Z" fill="#68a8ff"/><circle cx="8.5" cy="21" r="3.7" fill="#1040f0"/></svg>
<svg style="left:1867.00px;top:91.00px;" width="25.00" height="25.00" viewBox="0 0 25 25"><path d="M1.5 15 Q3 3 13 3.5 Q19.5 5 20 12.5 H24.5 L16.5 21.5 L10 12.5 H14 Q13 8.5 9.5 9 Q6 10.5 6 15Z" fill="#1040f0"/><path d="M3 11 Q5.5 4.5 13 4.5 Q16.5 5.5 18 8 Q13 5.5 8 8Z" fill="#68a8ff"/><circle cx="4.5" cy="19.5" r="3.6" fill="#1040f0"/></svg>
<svg style="left:1905.40px;top:91.00px;" width="17.00" height="25.00" viewBox="0 0 17 25"><path d="M5 15.5 H12 V9 H16.5 L8.5 0.5 L0.5 9 H5Z" fill="#1040f0"/><path d="M8.5 1.5 L13 6.5 H4Z" fill="#68a8ff"/><circle cx="8.5" cy="21" r="3.7" fill="#1040f0"/></svg>
<svg style="left:1936.90px;top:93.00px;" width="2.00" height="22.50" viewBox="0 0 2 22.5"><path d="M1 0 V22.5" stroke="#333" stroke-width="1.6" stroke-dasharray="1.6 1.3"/></svg>
<svg style="left:1952.70px;top:91.00px;" width="21.00" height="25.00" viewBox="0 0 21 25"><g transform="translate(1.8,0) scale(1,0.95)"><path d="M5 0.5 H12 V7 H16.5 L8.5 15.5 L0.5 7 H5Z" fill="#1040f0"/><path d="M5.5 1 H11.5 V4 H5.5Z" fill="#68a8ff"/></g><path d="M1.2 17.5 v7 M4.5 17.5 v7 M16.2 17.5 v7 M19.5 17.5 v7" stroke="#1040f0" stroke-width="1.7"/><circle cx="10.3" cy="21" r="3.6" fill="#1040f0"/></svg>
<svg style="left:1980.40px;top:103.60px;" width="8.00" height="4.80" viewBox="0 0 8 4.8"><path d="M0 0 H8 L4.0 4.8Z" fill="#000"/></svg>
<svg style="left:1996.40px;top:91.00px;" width="25.00" height="25.00" viewBox="0 0 25 25"><g transform="scale(1,0.88)"><path d="M1.5 15 Q3 3 13 3.5 Q19.5 5 20 12.5 H24.5 L16.5 21.5 L10 12.5 H14 Q13 8.5 9.5 9 Q6 10.5 6 15Z" fill="#1040f0"/><path d="M3 11 Q5.5 4.5 13 4.5 Q16.5 5.5 18 8 Q13 5.5 8 8Z" fill="#68a8ff"/></g><circle cx="4.5" cy="17" r="3.3" fill="#1040f0"/><path d="M2 20 v5 M5 20 v5 M8 20 v5 M11 20 v5 M14 20 v5 M17 20 v5 M20 20 v5 M23 20 v5" stroke="#1040f0" stroke-width="1.5"/></svg>
<svg style="left:2026.80px;top:103.60px;" width="8.00" height="4.80" viewBox="0 0 8 4.8"><path d="M0 0 H8 L4.0 4.8Z" fill="#000"/></svg>
<svg style="left:2046.40px;top:91.00px;" width="21.00" height="25.00" viewBox="0 0 21 25"><g transform="translate(1.8,0) scale(1,0.95)"><path d="M5 15.5 H12 V9 H16.5 L8.5 0.5 L0.5 9 H5Z" fill="#1040f0"/><path d="M8.5 1.5 L13 6.5 H4Z" fill="#68a8ff"/></g><path d="M1.2 17.5 v7 M4.5 17.5 v7 M16.2 17.5 v7 M19.5 17.5 v7" stroke="#1040f0" stroke-width="1.7"/><circle cx="10.3" cy="21" r="3.6" fill="#1040f0"/></svg>
<svg style="left:2916.50px;top:92.50px;" width="25.00" height="24.00" viewBox="0 0 25 24"><path d="M15.5 2 Q17.5 0 19 2 L17 20 Q16 22 14.5 20.5Z" fill="#c08838" stroke="#8a5818" stroke-width="0.7"/><path d="M1 5 Q5 0.5 9.5 3.5 T17 2 L15.5 14 Q11 17 7.5 14 T0 15.5Z" fill="#58b0f4" stroke="#2888e0" stroke-width="1"/><path d="M3 6.5 Q6 3.5 9 6 T14.5 5.5 L13.5 11.5 Q10 13.5 7.5 11.5 T2.3 12.5Z" fill="#b8dcfa"/><circle cx="18" cy="18" r="5.5" fill="#48a838" stroke="#2c7c20" stroke-width="0.8"/><path d="M15 18 h6 M18 15 v6" stroke="#fff" stroke-width="2"/></svg>
<svg style="left:2946.80px;top:103.20px;" width="8.00" height="4.80" viewBox="0 0 8 4.8"><path d="M0 0 H8 L4.0 4.8Z" fill="#000"/></svg>
<svg style="left:2962.80px;top:92.50px;" width="25.00" height="24.00" viewBox="0 0 25 24"><path d="M15.5 2 Q17.5 0 19 2 L17 20 Q16 22 14.5 20.5Z" fill="#c08838" stroke="#8a5818" stroke-width="0.7"/><path d="M1 5 Q5 0.5 9.5 3.5 T17 2 L15.5 14 Q11 17 7.5 14 T0 15.5Z" fill="#58b0f4" stroke="#2888e0" stroke-width="1"/><path d="M3 6.5 Q6 3.5 9 6 T14.5 5.5 L13.5 11.5 Q10 13.5 7.5 11.5 T2.3 12.5Z" fill="#b8dcfa"/><circle cx="18" cy="18" r="5.5" fill="#e06018" stroke="#b04408" stroke-width="0.8"/><path d="M15 18 h6" stroke="#fff" stroke-width="2.2"/></svg>
<svg style="left:2993.00px;top:103.20px;" width="8.00" height="4.80" viewBox="0 0 8 4.8"><path d="M0 0 H8 L4.0 4.8Z" fill="#000"/></svg>
<svg style="left:3009.80px;top:92.50px;" width="25.00" height="24.00" viewBox="0 0 25 24"><path d="M15.5 2 Q17.5 0 19 2 L17 20 Q16 22 14.5 20.5Z" fill="#c08838" stroke="#8a5818" stroke-width="0.7"/><path d="M1 5 Q5 0.5 9.5 3.5 T17 2 L15.5 14 Q11 17 7.5 14 T0 15.5Z" fill="#58b0f4" stroke="#2888e0" stroke-width="1"/><path d="M3 6.5 Q6 3.5 9 6 T14.5 5.5 L13.5 11.5 Q10 13.5 7.5 11.5 T2.3 12.5Z" fill="#b8dcfa"/><path d="M6 22.5 L8.5 17.5 L20 6.5 L23.5 9.5 L11.5 21Z" fill="#f0d860" stroke="#c09030" stroke-width="0.9"/><path d="M20 6.5 L22 4.5 Q24 4 24.5 6.5 L23.5 9.5Z" fill="#f0c8a0"/><path d="M6 22.5 L7.5 19.5 L9.5 21.5Z" fill="#604020"/></svg>
<svg style="left:3042.50px;top:92.50px;" width="25.00" height="24.00" viewBox="0 0 25 24"><path d="M15.5 2 Q17.5 0 19 2 L17 20 Q16 22 14.5 20.5Z" fill="#c08838" stroke="#8a5818" stroke-width="0.7"/><path d="M1 5 Q5 0.5 9.5 3.5 T17 2 L15.5 14 Q11 17 7.5 14 T0 15.5Z" fill="#58b0f4" stroke="#2888e0" stroke-width="1"/><path d="M3 6.5 Q6 3.5 9 6 T14.5 5.5 L13.5 11.5 Q10 13.5 7.5 11.5 T2.3 12.5Z" fill="#b8dcfa"/><rect x="9.5" y="9.5" width="14.5" height="13.5" rx="1" fill="#5878e0" stroke="#3858c0" stroke-width="1"/><rect x="12" y="10.2" width="9.5" height="5.5" fill="#f4f4ff"/><rect x="12.5" y="18" width="8.5" height="4" fill="#a8e060"/></svg>
<svg style="left:3072.60px;top:103.20px;" width="8.00" height="4.80" viewBox="0 0 8 4.8"><path d="M0 0 H8 L4.0 4.8Z" fill="#000"/></svg>
<svg style="left:3089.20px;top:92.50px;" width="25.00" height="24.00" viewBox="0 0 25 24"><path d="M15.5 2 Q17.5 0 19 2 L17 20 Q16 22 14.5 20.5Z" fill="#c08838" stroke="#8a5818" stroke-width="0.7"/><path d="M1 5 Q5 0.5 9.5 3.5 T17 2 L15.5 14 Q11 17 7.5 14 T0 15.5Z" fill="#58b0f4" stroke="#2888e0" stroke-width="1"/><path d="M3 6.5 Q6 3.5 9 6 T14.5 5.5 L13.5 11.5 Q10 13.5 7.5 11.5 T2.3 12.5Z" fill="#b8dcfa"/><path d="M9.5 14.5 H16.5 V10.5 L24.5 17.3 L16.5 24 V20 H9.5Z" fill="#58b030" stroke="#388818" stroke-width="0.9"/></svg>
<div style="left:25.2px;top:139.6px;width:28.599999999999998px;height:28.400000000000006px;background:#fff;border-top:2px solid #909090;border-left:2px solid #909090;border-right:1px solid #fafafa;border-bottom:1px solid #fafafa;"></div>
<div style="left:64.1px;top:139.6px;width:28.599999999999994px;height:28.400000000000006px;background:#fff;border-top:2px solid #909090;border-left:2px solid #909090;border-right:1px solid #fafafa;border-bottom:1px solid #fafafa;"></div>
<div style="left:103.3px;top:139.6px;width:28.60000000000001px;height:28.400000000000006px;background:#fff;border-top:2px solid #909090;border-left:2px solid #909090;border-right:1px solid #fafafa;border-bottom:1px solid #fafafa;"></div>
<div style="left:142.2px;top:139.6px;width:28.599999999999994px;height:28.400000000000006px;background:#fff;border-top:2px solid #909090;border-left:2px solid #909090;border-right:1px solid #fafafa;border-bottom:1px solid #fafafa;"></div>
<svg style="left:25.20px;top:139.60px;" width="28.60" height="28.40" viewBox="0 0 28.6 28.4"><path d="M14.3 10 V19.5 M12.3 22.5 L14.3 19.5 L16.3 22.5" stroke="#333" stroke-width="1.5" stroke-dasharray="1.5 1.3" fill="none"/></svg>
<svg style="left:64.10px;top:139.60px;" width="28.60" height="28.40" viewBox="0 0 28.6 28.4"><circle cx="16" cy="16.5" r="6" stroke="#333" stroke-width="1.5" stroke-dasharray="1.5 1.3" fill="none"/></svg>
<svg style="left:103.30px;top:139.60px;" width="28.60" height="28.40" viewBox="0 0 28.6 28.4"><path d="M6 11 h5 M8.5 11 V22 M6 22 h5 M12.5 22.5 L17 10" stroke="#333" stroke-width="1.5" stroke-dasharray="1.5 1.3" fill="none"/><path d="M19.5 11 L25 14 V19 L21 22.5 L17.5 19 V14Z" stroke="#333" stroke-width="1.5" stroke-dasharray="1.5 1.3" fill="none"/></svg>
<svg style="left:142.20px;top:139.60px;" width="28.60" height="28.40" viewBox="0 0 28.6 28.4"><rect x="7" y="8" width="17.5" height="17" rx="2" stroke="#333" stroke-width="1.5" stroke-dasharray="1.5 1.3" fill="none"/><path d="M16 14 l1.3 1.3 V22" stroke="#333" stroke-width="1.5" stroke-dasharray="1.5 1.3" fill="none"/></svg>
<div style="left:181.3px;top:139.6px;width:29.299999999999983px;height:29.400000000000006px;background:#f2f2f2;border-top:1px solid #fff;border-left:1px solid #fff;border-right:2px solid #808080;border-bottom:2px solid #808080;"></div>
<svg style="left:181.30px;top:139.60px;font-family:'Liberation Sans',sans-serif;" width="29.30" height="29.00" viewBox="0 0 29.3 29"><text x="5.3" y="20.5" font-size="12.5" font-weight="bold" fill="#333" textLength="19" lengthAdjust="spacingAndGlyphs" opacity="0.78">ALL</text><path d="M5 21.3 h20" stroke="#f2f2f2" stroke-width="1" stroke-dasharray="1 1"/></svg>
<svg style="left:220.00px;top:142.00px;" width="25.00" height="25.00" viewBox="0 0 25 25"><g opacity="0.55"><path d="M1.5 8 L9 0.5 L13 4.5 L5.5 12Z" fill="#d8b0e8"/><path d="M13 3 L17 0.5 L24 9 L20.5 11Z" fill="#c8c8c8"/><path d="M12 5 L19.5 12 L14 17 L7 10Z" fill="#a8dcd8"/><path d="M15 13 L24 10.5 V20 H17Z" fill="#b0d8b8"/><path d="M0.5 18 L9.5 9.5 L15.5 15.5 L6 24.5Z" fill="#3858f0"/></g></svg>
<div style="left:280.3px;top:139.6px;width:28.5px;height:28.400000000000006px;background:#fff;border-top:2px solid #909090;border-left:2px solid #909090;border-right:1px solid #fafafa;border-bottom:1px solid #fafafa;"></div>
<svg style="left:280.30px;top:139.60px;" width="28.50" height="28.40" viewBox="0 0 28.5 28.4"><path d="M10.5 6.5 V21.5 L14 18 L18 26 L21.3 24.5 L17.3 17 H22Z" fill="#000"/></svg>
<div style="left:319.1px;top:139.6px;width:29.399999999999977px;height:29.400000000000006px;background:#f4f4f4;border-top:1px solid #fff;border-left:1px solid #fff;border-right:2px solid #808080;border-bottom:2px solid #808080;"></div>
<div style="left:358.3px;top:139.6px;width:29.399999999999977px;height:29.400000000000006px;background:#f4f4f4;border-top:1px solid #fff;border-left:1px solid #fff;border-right:2px solid #808080;border-bottom:2px solid #808080;"></div>
<div style="left:397.2px;top:139.6px;width:29.399999999999977px;height:29.400000000000006px;background:#f4f4f4;border-top:1px solid #fff;border-left:1px solid #fff;border-right:2px solid #808080;border-bottom:2px solid #808080;"></div>
<div style="left:436.3px;top:139.6px;width:29.399999999999977px;height:29.400000000000006px;background:#f4f4f4;border-top:1px solid #fff;border-left:1px solid #fff;border-right:2px solid #808080;border-bottom:2px solid #808080;"></div>
<svg style="left:319.10px;top:139.60px;" width="29.40" height="29.00" viewBox="0 0 29.4 29"><path d="M7 16 V7 H16" fill="none" stroke="#000" stroke-width="1.6"/><rect x="11.8" y="11.8" width="9.5" height="9.5" fill="none" stroke="#000" stroke-width="3"/><path d="M17 26 H26 V17 M26 26 L20 20" fill="none" stroke="#000" stroke-width="1.8"/></svg>
<svg style="left:358.30px;top:139.60px;" width="29.40" height="29.00" viewBox="0 0 29.4 29"><g fill="#555" stroke="#222" stroke-width="0.6" opacity="0.95"><path d="M14.7 3 L19 8 H16 V13.2 H21.2 V10.2 L26.2 14.7 L21.2 19.2 V16.2 H16 V21.4 H19 L14.7 26.4 L10.4 21.4 H13.4 V16.2 H8.2 V19.2 L3.2 14.7 L8.2 10.2 V13.2 H13.4 V8 H10.4Z" fill="#6a6a6a" stroke-dasharray="1.2 1"/></g></svg>
<svg style="left:397.20px;top:139.60px;" width="29.40" height="29.00" viewBox="0 0 29.4 29"><path d="M9.5 6 V22 M20.5 6 V22" stroke="#000" stroke-width="1.7"/><rect x="6.3" y="22" width="6.4" height="3" fill="#fff" stroke="#000" stroke-width="1.3"/><rect x="17.3" y="22" width="6.4" height="3" fill="#fff" stroke="#000" stroke-width="1.3"/></svg>
<svg style="left:436.30px;top:139.60px;" width="29.40" height="29.00" viewBox="0 0 29.4 29"><path d="M6 8 H14 V24.5 H26" fill="none" stroke="#000" stroke-width="1.7"/><path d="M19 8 V24" stroke="#000" stroke-width="1.5" stroke-dasharray="1.5 1.5"/><path d="M4.5 14.5 h6 M8 12 L10.8 14.5 L8 17 M4.5 21 h6 M8 18.5 L10.8 21 L8 23.5" fill="none" stroke="#000" stroke-width="1.4"/><path d="M23 9.5 l2 2 l-2 2 l-2 -2z M23 16 l2 2 l-2 2 l-2 -2z" fill="#000"/></svg>
<svg style="left:478.00px;top:143.50px;" width="2.00" height="23.50" viewBox="0 0 2 23.5"><path d="M1 0 V23.5" stroke="#333" stroke-width="1.6" stroke-dasharray="1.6 1.3"/></svg>
<svg style="left:491.50px;top:142.50px;" width="25.00" height="27.00" viewBox="0 0 25 27"><rect x="0.3" y="0.3" width="11.6" height="26" fill="#000"/><circle cx="6.1" cy="5.8" r="4.3" fill="#f80000"/><circle cx="6.1" cy="13.8" r="3" fill="#c8c020" opacity="0.85"/><circle cx="6.1" cy="21" r="3" fill="#28c028" opacity="0.9"/><path d="M15.5 7 V19.5 L23 13.2Z" fill="#fff" stroke="#000" stroke-width="1.4"/><path d="M12 10 h3.5 M12 16.5 h3.5" stroke="#88c8f0" stroke-width="1"/></svg>
<svg style="left:551.50px;top:140.00px;" width="24.00" height="23.00" viewBox="0 0 24 23"><path d="M7.5 1 V14" stroke="#ffd800" stroke-width="2.6"/><path d="M8.8 2 V14" stroke="#806000" stroke-width="0.9"/><rect x="1.2" y="14.5" width="14" height="5.6" fill="#ffe020" stroke="#e0a800" stroke-width="1.3"/><path d="M2 21.2 H17 V16" fill="none" stroke="#4a3800" stroke-width="1.3"/><path d="M11.5 7.5 H21.5 M16.5 2.5 V12.5" stroke="#f8d000" stroke-width="2.2"/><path d="M12 8.8 H16 M17.8 3 V7" stroke="#4a3800" stroke-width="0.8"/></svg>
<svg style="left:584.50px;top:140.00px;" width="24.00" height="23.00" viewBox="0 0 24 23"><path d="M7.5 1 V14" stroke="#ffd800" stroke-width="2.6"/><path d="M8.8 2 V14" stroke="#806000" stroke-width="0.9"/><rect x="1.2" y="14.5" width="14" height="5.6" fill="#ffe020" stroke="#e0a800" stroke-width="1.3"/><path d="M2 21.2 H17 V16" fill="none" stroke="#4a3800" stroke-width="1.3"/><path d="M11.5 6.5 H22" stroke="#f8d000" stroke-width="2.2"/><path d="M12 7.9 H22" stroke="#4a3800" stroke-width="0.8"/></svg>
<svg style="left:617.70px;top:140.50px;" width="25.00" height="22.00" viewBox="0 0 25 22"><path d="M0.5 1.5 H7.5 V20.5 H24" fill="none" stroke="#109040" stroke-width="1.7"/><path d="M11 10 H24" stroke="#3c00d8" stroke-width="3.4"/><path d="M17.5 3.5 L10.5 10 L17.5 16.5Z" fill="#3c00d8"/></svg>
<svg style="left:650.50px;top:140.50px;" width="25.00" height="22.00" viewBox="0 0 25 22"><path d="M24.5 1.5 H16.5 V20.5 H0.5" fill="none" stroke="#109040" stroke-width="1.7"/><path d="M0.5 10 H13" stroke="#3c00d8" stroke-width="3.4"/><path d="M7 3.5 L14 10 L7 16.5Z" fill="#3c00d8"/></svg>
<svg style="left:683.80px;top:140.50px;" width="25.00" height="22.00" viewBox="0 0 25 22"><path d="M0.5 1.5 H7.5 V20.5 H24.5" fill="none" stroke="#109040" stroke-width="1.5" stroke-dasharray="1.5 1.5"/><path d="M13 11.9 l2.6 2.6 l-2.6 2.6 l-2.6 -2.6z" fill="none" stroke="#7038e0" stroke-width="1.2"/><path d="M4.5 7.5 L7.5 11 L10.5 7.5 M17 14.5 h3" fill="none" stroke="#7038e0" stroke-width="1.2" stroke-dasharray="1.5 1"/></svg>
<svg style="left:716.80px;top:140.50px;" width="25.00" height="22.00" viewBox="0 0 25 22"><path d="M0.5 1.5 H13 V20.5 H24.5" fill="none" stroke="#109040" stroke-width="1.5" stroke-dasharray="1.5 1.5"/><path d="M13 5.9 l2.6 2.6 l-2.6 2.6 l-2.6 -2.6z" fill="none" stroke="#7038e0" stroke-width="1.2"/><path d="M8 12.9 l2.6 2.6 l-2.6 2.6 l-2.6 -2.6z" fill="none" stroke="#7038e0" stroke-width="1.2"/><path d="M2.5 15.5 h2.5" fill="none" stroke="#7038e0" stroke-width="1.2"/></svg>
<svg style="left:751.00px;top:140.50px;" width="22.00" height="22.00" viewBox="0 0 22 22"><path d="M21 1.5 H8 V20.5 H0.5" fill="none" stroke="#109040" stroke-width="1.5" stroke-dasharray="1.5 1.5"/><path d="M8 5.9 l2.6 2.6 l-2.6 2.6 l-2.6 -2.6z" fill="none" stroke="#7038e0" stroke-width="1.2"/><path d="M12.5 12.9 l2.6 2.6 l-2.6 2.6 l-2.6 -2.6z" fill="none" stroke="#7038e0" stroke-width="1.2"/><path d="M16 15.5 h2.5" fill="none" stroke="#7038e0" stroke-width="1.2"/></svg>
<svg style="left:784.00px;top:140.50px;" width="22.00" height="22.00" viewBox="0 0 22 22"><path d="M21.5 1.5 H14.5 V20.5 H0.5" fill="none" stroke="#109040" stroke-width="1.5" stroke-dasharray="1.5 1.5"/><path d="M14.5 5.9 l2.6 2.6 l-2.6 2.6 l-2.6 -2.6z" fill="none" stroke="#7038e0" stroke-width="1.2"/><path d="M9.5 12.9 l2.6 2.6 l-2.6 2.6 l-2.6 -2.6z" fill="none" stroke="#7038e0" stroke-width="1.2"/><path d="M4.5 15.5 h2.5" fill="none" stroke="#7038e0" stroke-width="1.2"/></svg>
<svg style="left:842.00px;top:140.50px;" width="24.00" height="22.00" viewBox="0 0 24 22"><path d="M0.5 1 L9 7 L1 12 l2 -2 l2 2 l2 -2 M9 15 L1 20.5 l2 -2 l2 2 l2 -2" fill="none" stroke="#222" stroke-width="1.3"/><path d="M0.5 1 l2.2 2 l2.2 -2 " fill="none" stroke="#222" stroke-width="1.3"/><path d="M11.5 11 L16.5 6.5 V9 H23 V13 H16.5 V15.5Z" fill="#58a8ff" opacity="0.8"/></svg>
<svg style="left:873.70px;top:151.50px;" width="6.00" height="4.50" viewBox="0 0 6 4.5"><path d="M0.5 0.5 L3 3.5 L5.5 0.5" fill="none" stroke="#555" stroke-width="1.2"/></svg>
<svg style="left:889.00px;top:140.50px;" width="24.00" height="22.00" viewBox="0 0 24 22"><path d="M23.5 1 L15 7 L23 12 l-2 -2 l-2 2 l-2 -2 M15 15 L23 20.5 l-2 -2 l-2 2 l-2 -2" fill="none" stroke="#222" stroke-width="1.3"/><path d="M23.5 1 l-2.2 2 l-2.2 -2" fill="none" stroke="#222" stroke-width="1.3"/><path d="M12.5 11 L7.5 6.5 V9 H1 V13 H7.5 V15.5Z" fill="#4888ff" opacity="0.8"/></svg>
<svg style="left:920.30px;top:151.50px;" width="6.00" height="4.50" viewBox="0 0 6 4.5"><path d="M0.5 0.5 L3 3.5 L5.5 0.5" fill="none" stroke="#555" stroke-width="1.2"/></svg>
<svg style="left:935.30px;top:140.50px;" width="25.50" height="22.00" viewBox="0 0 25.5 22"><path d="M1 2.5 h4 M1 11 h4 M1 19.5 h4" stroke="#333" stroke-width="1.4" stroke-dasharray="1.5 1.2"/><path d="M5.5 0.8 L7.8 2.5 L5.5 4.2 M5.5 17.8 L7.8 19.5 L5.5 21.2" fill="none" stroke="#333" stroke-width="1.1"/><path d="M12 4 L19 11 L12 18 L5 11Z" fill="#d8d8d8" stroke="#222" stroke-width="1.3" stroke-dasharray="1.4 1"/><path d="M12 7.5 L15.5 11 L12 14.5 L8.5 11Z" fill="#40e040"/><path d="M22.5 8.7 l2.3 2.3 l-2.3 2.3 l-2.3 -2.3z" fill="#5878ff"/></svg>
<svg style="left:971.60px;top:142.00px;" width="2.00" height="23.50" viewBox="0 0 2 23.5"><path d="M1 0 V23.5" stroke="#333" stroke-width="1.6" stroke-dasharray="1.6 1.3"/></svg>
<svg style="left:1262.60px;top:140.50px;" width="25.00" height="24.50" viewBox="0 0 25 24.5"><g opacity="0.5"><path d="M6 2 H10.5 V6 L12 9 V17.5 H3 V11.5Z M14 2 H18.5 L21.5 11.5 V17.5 H12.5 V9 L14 6Z" fill="#445"/></g><path d="M0.5 20 L4.5 16.5 V18.5 H11 V21.5 H4.5 V23.5Z" fill="#3050f0" opacity="0.7"/></svg>
<svg style="left:1292.50px;top:140.50px;" width="25.00" height="24.50" viewBox="0 0 25 24.5"><g transform="translate(-2,0)"><g opacity="0.5"><path d="M6 2 H10.5 V6 L12 9 V17.5 H3 V11.5Z M14 2 H18.5 L21.5 11.5 V17.5 H12.5 V9 L14 6Z" fill="#445"/></g></g><path d="M24.5 20 L20.5 16.5 V18.5 H14 V21.5 H20.5 V23.5Z" fill="#3050f0" opacity="0.7"/></svg>
<svg style="left:1330.00px;top:140.50px;" width="25.00" height="24.50" viewBox="0 0 25 24.5"><g opacity="0.45"><path d="M1.5 17 Q2 4 11 2 Q15 1.5 17 4 L9 18Z" fill="#445"/><path d="M15 5 L21 3 L24 9 L19 12Z" fill="#999"/><path d="M7 19.5 L16 10.5 L20 14.5 L11 24Z" fill="#78a8f0"/></g></svg>
<svg style="left:1394.70px;top:139.30px;" width="24.00" height="24.50" viewBox="0 0 24 24.5"><path d="M14.5 15 L22 22.5" stroke="#1010c0" stroke-width="4.4" stroke-linecap="butt"/><path d="M16.5 18.5 l3.5 3.5" stroke="#7878e8" stroke-width="1" stroke-dasharray="1 1"/><circle cx="9.3" cy="9.6" r="8.2" fill="#f4f4f4" stroke="#000" stroke-width="1.8"/><path d="M4.8 9.6 H13.8 M9.3 5.1 V14.1" stroke="#000" stroke-width="2.6"/></svg>
<svg style="left:1428.00px;top:139.30px;" width="24.00" height="24.50" viewBox="0 0 24 24.5"><path d="M14.5 15 L22 22.5" stroke="#1010c0" stroke-width="4.4" stroke-linecap="butt"/><path d="M16.5 18.5 l3.5 3.5" stroke="#7878e8" stroke-width="1" stroke-dasharray="1 1"/><circle cx="9.3" cy="9.6" r="8.2" fill="#f4f4f4" stroke="#000" stroke-width="1.8"/><path d="M4.8 9.6 H13.8" stroke="#000" stroke-width="2.6"/></svg>
<svg style="left:1461.30px;top:139.30px;" width="24.00" height="24.50" viewBox="0 0 24 24.5"><path d="M14.5 15 L22 22.5" stroke="#1010c0" stroke-width="4.4" stroke-linecap="butt"/><path d="M16.5 18.5 l3.5 3.5" stroke="#7878e8" stroke-width="1" stroke-dasharray="1 1"/><circle cx="9.3" cy="9.6" r="8.2" fill="#083c78" stroke="#000" stroke-width="1.2"/><path d="M4 7.5 Q5.5 3.5 9.5 3.2" fill="none" stroke="#c8e0ff" stroke-width="1.4"/></svg>
<svg style="left:1493.00px;top:139.30px;" width="24.50" height="24.50" viewBox="0 0 24.5 24.5"><path d="M8.5 1 V18" fill="none" stroke="#e8a800" stroke-width="1.7"/><rect x="1.2" y="18" width="15" height="5.3" fill="none" stroke="#e8a800" stroke-width="1.7"/><circle cx="17" cy="6" r="4.8" fill="#c8c8c8" stroke="#333" stroke-width="1.3"/><path d="M20 9.5 L23.5 14" stroke="#1010c0" stroke-width="2.6"/></svg>
<svg style="left:1525.80px;top:139.30px;" width="24.50" height="24.50" viewBox="0 0 24.5 24.5"><path d="M5.5 7.5 V18.5 M17.5 6 V18.5" fill="none" stroke="#e8a800" stroke-width="1.7"/><rect x="1.2" y="18.5" width="9.5" height="4.8" fill="none" stroke="#e8a800" stroke-width="1.7"/><rect x="13.2" y="18.5" width="9.5" height="4.8" fill="none" stroke="#e8a800" stroke-width="1.7"/><circle cx="17" cy="5.5" r="4.5" fill="#c8c8c8" stroke="#333" stroke-width="1.3"/><path d="M20 9 L23 13.5" stroke="#1010c0" stroke-width="2.6"/></svg>
<svg style="left:1558.40px;top:139.30px;" width="25.00" height="24.50" viewBox="0 0 25 24.5"><path d="M1.5 2 l1.5 -1.2 l1.5 1.2 l1.5 -1.2 l1.5 1.2 l1.5 -1.2 l1.5 1.2 L13 3.5" fill="none" stroke="#2020c8" stroke-width="1.3"/><path d="M1.5 3 V20 H10 M13 3.5 L17 8" fill="none" stroke="#2020c8" stroke-width="1.6" stroke-dasharray="1.6 1.4"/><path d="M5 7 H11 V12" fill="none" stroke="#2020c8" stroke-width="1.3" stroke-dasharray="1.4 1.4"/><path d="M16 10 L21 15 L16 20 L11 15Z" fill="#c8c8c8" stroke="#555" stroke-width="1.2" stroke-dasharray="1.3 1"/><path d="M19.5 19 L24 23.5" stroke="#3838e8" stroke-width="2.6"/></svg>
<div style="left:1619.2px;top:139.6px;width:28.399999999999864px;height:28.400000000000006px;background:#fff;border-top:2px solid #909090;border-left:2px solid #909090;border-right:1px solid #fafafa;border-bottom:1px solid #fafafa;"></div>
<svg style="left:1619.20px;top:139.60px;" width="28.40" height="28.40" viewBox="0 0 28.4 28.4"><path d="M15.5 5.5 V26 M4.5 26 H28" stroke="#109040" stroke-width="1.8"/></svg>
<div style="left:1658px;top:139.6px;width:29.59999999999991px;height:29.400000000000006px;background:#f4f4f4;border-top:1px solid #fff;border-left:1px solid #fff;border-right:2px solid #808080;border-bottom:2px solid #808080;"></div>
<div style="left:1697.2px;top:139.6px;width:29.59999999999991px;height:29.400000000000006px;background:#f4f4f4;border-top:1px solid #fff;border-left:1px solid #fff;border-right:2px solid #808080;border-bottom:2px solid #808080;"></div>
<svg style="left:1658.00px;top:139.60px;" width="29.60" height="29.00" viewBox="0 0 29.6 29"><rect x="9" y="3" width="11.6" height="23.5" fill="#181878"/><path d="M3 24.7 H12 V6 H17.5 V24.7 H26.5" fill="none" stroke="#109040" stroke-width="1.6"/></svg>
<svg style="left:1697.20px;top:139.60px;" width="29.60" height="29.00" viewBox="0 0 29.6 29"><rect x="4.2" y="3" width="21" height="23.5" fill="#005000"/><path d="M3 24.7 H7 V6 H12 V24.7 H16.5 V6 H21.5 V24.7 H27" fill="none" stroke="#209848" stroke-width="1.5"/></svg>
<svg style="left:1738.50px;top:143.50px;" width="2.00" height="23.50" viewBox="0 0 2 23.5"><path d="M1 0 V23.5" stroke="#333" stroke-width="1.6" stroke-dasharray="1.6 1.3"/></svg>
<svg style="left:1752.30px;top:142.20px;" width="24.60" height="24.50" viewBox="0 0 24.6 24.5"><rect width="24.6" height="24.5" fill="#5050a8" opacity="0.55"/><path d="M12 2 V22 H2" fill="none" stroke="#30a050" stroke-width="1.4" stroke-dasharray="1.5 1.5" opacity="0.8"/></svg>
<svg style="left:1787.00px;top:142.20px;" width="22.00" height="24.50" viewBox="0 0 22 24.5"><rect x="7" y="1" width="8" height="22.5" fill="#5050a8" opacity="0.55"/><path d="M21 2.3 H10.5 V22 H1" fill="none" stroke="#30a050" stroke-width="1.5" stroke-dasharray="1.5 1.5"/><path d="M6 1 V22" stroke="#f8f000" stroke-width="1.5" stroke-dasharray="1.5 1.5"/></svg>
<svg style="left:1819.50px;top:142.20px;" width="22.00" height="24.50" viewBox="0 0 22 24.5"><path d="M21.5 2.3 H11.5 V19.5 L9 22 H0.5" fill="none" stroke="#30a050" stroke-width="1.5" stroke-dasharray="1.5 1.5"/></svg>
<svg style="left:1852.50px;top:142.20px;" width="22.00" height="24.50" viewBox="0 0 22 24.5"><path d="M21.5 2.3 H11.5 M9.5 22 H0.5" fill="none" stroke="#30a050" stroke-width="1.5" stroke-dasharray="1.5 1.5"/><path d="M10.5 1 V22" stroke="#f8f000" stroke-width="1.6" stroke-dasharray="1.5 1.5"/></svg>
<div style="left:1.00px;top:181.00px;width:3137.00px;height:692.00px;background:#f0f0f0;"></div>
<div style="left:618.80px;top:181.00px;width:11.00px;height:692.00px;background:#c8c8c8;"></div>
<div style="left:1248.00px;top:181.00px;width:12.00px;height:692.00px;background:#d0d0d0;"></div>
<div style="left:630.00px;top:521.00px;width:620.00px;height:10.00px;background:#c8c8c8;"></div>
<div style="left:1.00px;top:873.00px;width:3140.00px;height:10.00px;background:#c8c8c8;"></div>
<div style="left:1.00px;top:181.00px;width:619.00px;height:2.00px;background:#f0f0f0;"></div>
<svg style="left:5.50px;top:184.00px;" width="24.00" height="24.50" viewBox="0 0 24 24"><path d="M2 2 h6 M1 5 h6 M1.5 8 h5 M2 11 h4" stroke="#9aa0d8" stroke-width="1.2"/><path d="M8.5 2.5 Q10 0.8 12 1.6 L21.5 1.2 Q23.5 3 22 6 L20.5 16 Q20 18.5 17 18 L7 18.5 Q5 17 6 14 L8 6 Q9.5 4.5 8.5 2.5Z" fill="#fff" stroke="#000" stroke-width="1.7"/><path d="M11 5.5 h8 M10.5 8.5 h8 M10 11.5 h8 M9.5 14.5 h7" stroke="#5a60a8" stroke-width="1.3" stroke-dasharray="2.2 1"/><path d="M3 15 L8 13.5 L10 19 L5 23.5 L0.7 19.5Z" fill="#000"/><path d="M19.5 16.5 L23.5 20 L20 23.8 L16.5 20.5Z" fill="#000"/><circle cx="5.3" cy="19" r="2.6" fill="#e01028"/><circle cx="20.2" cy="20.3" r="2.2" fill="#e01028"/></svg>
<div class="t" style="left:35.00px;top:186.91px;font-size:17px;color:#15152a;font-family:'Liberation Sans', sans-serif;letter-spacing:-0.416px;">sim - Default</div>
<div style="left:132.50px;top:193.40px;width:187.00px;height:1.30px;background:#8c8c8c;"></div>
<div style="left:132.50px;top:194.70px;width:187.00px;height:1.20px;background:#fdfdfd;"></div>
<div style="left:132.50px;top:200.70px;width:187.00px;height:1.30px;background:#8c8c8c;"></div>
<div style="left:132.50px;top:202.00px;width:187.00px;height:1.20px;background:#fdfdfd;"></div>
<svg style="left:325.00px;top:193.60px;" width="27.00" height="10.00" viewBox="0 0 27 10"><rect x="0.0" y="0" width="1.5" height="1.5" fill="#555"/><rect x="0.0" y="3.6" width="1.5" height="1.5" fill="#555"/><rect x="0.0" y="7.2" width="1.5" height="1.5" fill="#555"/><rect x="3.2" y="0" width="1.5" height="1.5" fill="#555"/><rect x="3.2" y="3.6" width="1.5" height="1.5" fill="#555"/><rect x="3.2" y="7.2" width="1.5" height="1.5" fill="#555"/><rect x="6.4" y="0" width="1.5" height="1.5" fill="#555"/><rect x="6.4" y="3.6" width="1.5" height="1.5" fill="#555"/><rect x="6.4" y="7.2" width="1.5" height="1.5" fill="#555"/><rect x="9.6" y="0" width="1.5" height="1.5" fill="#555"/><rect x="9.6" y="3.6" width="1.5" height="1.5" fill="#555"/><rect x="9.6" y="7.2" width="1.5" height="1.5" fill="#555"/><rect x="12.8" y="0" width="1.5" height="1.5" fill="#555"/><rect x="12.8" y="3.6" width="1.5" height="1.5" fill="#555"/><rect x="12.8" y="7.2" width="1.5" height="1.5" fill="#555"/><rect x="16.0" y="0" width="1.5" height="1.5" fill="#555"/><rect x="16.0" y="3.6" width="1.5" height="1.5" fill="#555"/><rect x="16.0" y="7.2" width="1.5" height="1.5" fill="#555"/><rect x="19.2" y="0" width="1.5" height="1.5" fill="#555"/><rect x="19.2" y="3.6" width="1.5" height="1.5" fill="#555"/><rect x="19.2" y="7.2" width="1.5" height="1.5" fill="#555"/><rect x="22.4" y="0" width="1.5" height="1.5" fill="#555"/><rect x="22.4" y="3.6" width="1.5" height="1.5" fill="#555"/><rect x="22.4" y="7.2" width="1.5" height="1.5" fill="#555"/></svg>
<div style="left:354.00px;top:193.40px;width:185.50px;height:1.30px;background:#8c8c8c;"></div>
<div style="left:354.00px;top:194.70px;width:185.50px;height:1.20px;background:#fdfdfd;"></div>
<div style="left:354.00px;top:200.70px;width:185.50px;height:1.30px;background:#8c8c8c;"></div>
<div style="left:354.00px;top:202.00px;width:185.50px;height:1.20px;background:#fdfdfd;"></div>
<div style="left:546px;top:187px;width:18px;height:17.5px;background:#f0f0f0;border-top:1px solid #fff;border-left:1px solid #fff;border-right:2px solid #909090;border-bottom:2px solid #909090;"></div>
<div style="left:570px;top:187px;width:18px;height:17.5px;background:#f0f0f0;border-top:1px solid #fff;border-left:1px solid #fff;border-right:2px solid #909090;border-bottom:2px solid #909090;"></div>
<div style="left:594.5px;top:187px;width:19.0px;height:17.5px;background:#f0f0f0;border-top:1px solid #fff;border-left:1px solid #fff;border-right:2px solid #909090;border-bottom:2px solid #909090;"></div>
<svg style="left:546.00px;top:187.00px;" width="18.00" height="17.50" viewBox="0 0 18 17.5"><path d="M3.0 8.25 h11 M8.5 2.75 v11" stroke="#000" stroke-width="2.4"/></svg>
<svg style="left:570.00px;top:187.00px;" width="18.00" height="17.50" viewBox="0 0 18 17.5"><rect x="3.5" y="7.25" width="6.5" height="6.5" fill="none" stroke="#000" stroke-width="1.6"/><path d="M6.5 10.75 L13.0 4.25" stroke="#000" stroke-width="2"/><path d="M8.5 2.75 h6 v6z" fill="#000"/></svg>
<svg style="left:594.50px;top:187.00px;" width="19.00" height="17.50" viewBox="0 0 19.0 17.5"><path d="M4.0 3.25 l10 10 M14.0 3.25 l-10 10" stroke="#000" stroke-width="2"/></svg>
<div style="left:4.00px;top:210.00px;width:614.50px;height:600.00px;background:#ffffff;border-left:2px solid #6e6e6e;border-top:2px solid #8a8a8a;"></div>
<div style="left:5.50px;top:211.00px;width:611.50px;height:25.50px;background:#f0f0f0;border-top:1px solid #fff;"></div>
<div style="left:5.50px;top:234.90px;width:611.50px;height:2.20px;background:#6e6e6e;"></div>
<div style="left:21.20px;top:211.00px;width:1.60px;height:24.50px;background:#8c8c8c;"></div>
<div style="left:22.80px;top:211.00px;width:1.30px;height:24.50px;background:#fdfdfd;"></div>
<div style="left:224.20px;top:211.00px;width:1.60px;height:24.50px;background:#8c8c8c;"></div>
<div style="left:225.80px;top:211.00px;width:1.30px;height:24.50px;background:#fdfdfd;"></div>
<div style="left:330.80px;top:211.00px;width:1.60px;height:24.50px;background:#8c8c8c;"></div>
<div style="left:332.40px;top:211.00px;width:1.30px;height:24.50px;background:#fdfdfd;"></div>
<div style="left:475.20px;top:211.00px;width:1.60px;height:24.50px;background:#8c8c8c;"></div>
<div style="left:476.80px;top:211.00px;width:1.30px;height:24.50px;background:#fdfdfd;"></div>
<svg style="left:8.50px;top:217.00px;" width="14.00" height="12.00" viewBox="0 0 14 12"><path d="M1 1 H13 L7 9.5Z" fill="#555"/><path d="M3.5 1 H10.5 L7 6Z" fill="#222"/><path d="M2 10.5 h10" stroke="#bbb" stroke-width="1" stroke-dasharray="1 1"/></svg>
<div class="t" style="left:26.00px;top:215.91px;font-size:17px;color:#15152a;font-family:'Liberation Sans', sans-serif;letter-spacing:0.092px;">Instance</div>
<div class="t" style="left:227.80px;top:215.91px;font-size:17px;color:#15152a;font-family:'Liberation Sans', sans-serif;letter-spacing:-0.414px;">Design unit</div>
<div class="t" style="left:334.40px;top:215.91px;font-size:17px;color:#15152a;font-family:'Liberation Sans', sans-serif;letter-spacing:-0.275px;">Design unit type</div>
<div class="t" style="left:478.70px;top:215.91px;font-size:17px;color:#15152a;font-family:'Liberation Sans', sans-serif;letter-spacing:-0.134px;">Top Category</div>
<div style="left:617.00px;top:210.00px;width:2.00px;height:600.00px;background:#f6f6f6;"></div>
<div style="left:619.00px;top:183.00px;width:1.00px;height:690.00px;background:#b4b4b4;"></div>
<div style="left:5.50px;top:338.00px;width:611.50px;height:21.60px;background:#c0cedc;"></div>
<div style="left:28.50px;top:253.60px;width:10.00px;height:1.30px;background:#8a8a8a;"></div>
<div style="left:47.20px;top:262.00px;width:1.30px;height:88.50px;background:#8a8a8a;"></div>
<div style="left:55.50px;top:277.70px;width:9.50px;height:1.30px;background:#8a8a8a;"></div>
<div style="left:47.20px;top:301.60px;width:17.00px;height:1.30px;background:#8a8a8a;"></div>
<div style="left:47.20px;top:325.70px;width:17.00px;height:1.30px;background:#8a8a8a;"></div>
<div style="left:47.20px;top:349.70px;width:17.00px;height:1.30px;background:#8a8a8a;"></div>
<div style="left:28.50px;top:373.80px;width:10.00px;height:1.30px;background:#8a8a8a;"></div>
<svg style="left:13.00px;top:246.20px;" width="16.50" height="16.50" viewBox="0 0 16 16"><rect x="0.7" y="0.7" width="13.6" height="13.6" rx="1.5" fill="#fff" stroke="#9aa0b4" stroke-width="1.2"/><path d="M1.5 15 H15 V2" stroke="#c0c4d4" stroke-width="1.3" fill="none"/><path d="M4 7.8 H11.5" stroke="#000" stroke-width="1.6"/></svg>
<svg style="left:38.30px;top:244.20px;" width="18.50" height="18.50" viewBox="0 0 18 18"><rect width="18" height="18" fill="#00bff0"/><path d="M0 0 H18 L14 4 H4 V14 L0 18Z" fill="#a6e6f6"/><path d="M18 0 V18 H0 L4 14 H14 V4Z" fill="#0b678c"/><path d="M18 0 L13.5 4.5" stroke="#063c55" stroke-width="1"/></svg>
<div class="t" style="left:65.70px;top:242.72px;font-size:17px;color:#15152a;font-family:'Liberation Sans', sans-serif;letter-spacing:-0.308px;">lab1_testbench</div>
<svg style="left:40.30px;top:270.30px;" width="16.50" height="16.50" viewBox="0 0 16 16"><rect x="0.7" y="0.7" width="13.6" height="13.6" rx="1.5" fill="#fff" stroke="#9aa0b4" stroke-width="1.2"/><path d="M1.5 15 H15 V2" stroke="#c0c4d4" stroke-width="1.3" fill="none"/><path d="M4 7.8 H11.5" stroke="#000" stroke-width="1.6"/><path d="M7.75 4 V11.6" stroke="#000" stroke-width="1.6"/></svg>
<svg style="left:65.20px;top:268.30px;" width="18.50" height="18.50" viewBox="0 0 18 18"><rect width="18" height="18" fill="#00bff0"/><path d="M0 0 H18 L14 4 H4 V14 L0 18Z" fill="#a6e6f6"/><path d="M18 0 V18 H0 L4 14 H14 V4Z" fill="#0b678c"/><path d="M18 0 L13.5 4.5" stroke="#063c55" stroke-width="1"/></svg>
<div class="t" style="left:93.50px;top:266.72px;font-size:17px;color:#15152a;font-family:'Liberation Sans', sans-serif;letter-spacing:0.289px;">dut</div>
<svg style="left:64.00px;top:290.10px;" width="20.00" height="20.00" viewBox="0 0 20 20"><defs><radialGradient id="sg" cx="0.33" cy="0.3" r="0.75"><stop offset="0" stop-color="#d8f6ff"/><stop offset="0.18" stop-color="#52c6e6"/><stop offset="0.55" stop-color="#26a6cc"/><stop offset="1" stop-color="#16809f"/></radialGradient></defs><circle cx="10" cy="10" r="9.8" fill="url(#sg)"/><ellipse cx="6.3" cy="5.8" rx="2.6" ry="1.8" fill="#fff" opacity="0.85" transform="rotate(-35 6.3 5.8)"/></svg>
<div class="t" style="left:93.50px;top:290.82px;font-size:17px;color:#15152a;font-family:'Liberation Sans', sans-serif;letter-spacing:-0.382px;">#ALWAYS#21</div>
<svg style="left:64.00px;top:314.10px;" width="20.00" height="20.00" viewBox="0 0 20 20"><defs><radialGradient id="sg" cx="0.33" cy="0.3" r="0.75"><stop offset="0" stop-color="#d8f6ff"/><stop offset="0.18" stop-color="#52c6e6"/><stop offset="0.55" stop-color="#26a6cc"/><stop offset="1" stop-color="#16809f"/></radialGradient></defs><circle cx="10" cy="10" r="9.8" fill="url(#sg)"/><ellipse cx="6.3" cy="5.8" rx="2.6" ry="1.8" fill="#fff" opacity="0.85" transform="rotate(-35 6.3 5.8)"/></svg>
<div class="t" style="left:93.50px;top:314.82px;font-size:17px;color:#15152a;font-family:'Liberation Sans', sans-serif;letter-spacing:-0.382px;">#ALWAYS#50</div>
<svg style="left:64.00px;top:338.20px;" width="20.00" height="20.00" viewBox="0 0 20 20"><defs><radialGradient id="sg" cx="0.33" cy="0.3" r="0.75"><stop offset="0" stop-color="#d8f6ff"/><stop offset="0.18" stop-color="#52c6e6"/><stop offset="0.55" stop-color="#26a6cc"/><stop offset="1" stop-color="#16809f"/></radialGradient></defs><circle cx="10" cy="10" r="9.8" fill="url(#sg)"/><ellipse cx="6.3" cy="5.8" rx="2.6" ry="1.8" fill="#fff" opacity="0.85" transform="rotate(-35 6.3 5.8)"/></svg>
<div class="t" style="left:93.50px;top:338.92px;font-size:17px;color:#15152a;font-family:'Liberation Sans', sans-serif;letter-spacing:-0.382px;">#ALWAYS#59</div>
<svg style="left:13.00px;top:366.30px;" width="16.50" height="16.50" viewBox="0 0 16 16"><rect x="0.7" y="0.7" width="13.6" height="13.6" rx="1.5" fill="#fff" stroke="#9aa0b4" stroke-width="1.2"/><path d="M1.5 15 H15 V2" stroke="#c0c4d4" stroke-width="1.3" fill="none"/><path d="M4 7.8 H11.5" stroke="#000" stroke-width="1.6"/><path d="M7.75 4 V11.6" stroke="#000" stroke-width="1.6"/></svg>
<svg style="left:38.30px;top:364.40px;" width="18.50" height="18.50" viewBox="0 0 18 18"><rect width="18" height="18" fill="#00bff0"/><path d="M0 0 H18 L14 4 H4 V14 L0 18Z" fill="#a6e6f6"/><path d="M18 0 V18 H0 L4 14 H14 V4Z" fill="#0b678c"/><path d="M18 0 L13.5 4.5" stroke="#063c55" stroke-width="1"/></svg>
<div class="t" style="left:66.40px;top:362.92px;font-size:17px;color:#15152a;font-family:'Liberation Sans', sans-serif;letter-spacing:-0.359px;">std</div>
<svg style="left:34.50px;top:386.00px;" width="24.00" height="22.00" viewBox="0 0 24 22"><path d="M1.5 0 V21 H23" fill="none" stroke="#2030e0" stroke-width="1.6"/><path d="M5 9 Q9 -1 13 4.5 T21 7" fill="none" stroke="#e82020" stroke-width="2.6"/><path d="M6 3 Q11 11 20 2" fill="none" stroke="#18b8d8" stroke-width="2.4"/><path d="M4.5 19.5 Q12 9 22 18" fill="none" stroke="#18a828" stroke-width="2.6"/></svg>
<div class="t" style="left:68.00px;top:387.02px;font-size:17px;color:#15152a;font-family:'Liberation Sans', sans-serif;letter-spacing:-0.218px;">#vsim_capacity#</div>
<div class="t" style="left:227.80px;top:242.72px;font-size:17px;color:#15152a;font-family:'Liberation Sans', sans-serif;letter-spacing:0.068px;">lab1_testb...</div>
<div class="t" style="left:334.40px;top:242.72px;font-size:17px;color:#15152a;font-family:'Liberation Sans', sans-serif;letter-spacing:-0.793px;">Module</div>
<div class="t" style="left:478.70px;top:242.72px;font-size:17px;color:#15152a;font-family:'Liberation Sans', sans-serif;letter-spacing:-0.458px;">DU Instance</div>
<div class="t" style="left:227.80px;top:266.72px;font-size:17px;color:#15152a;font-family:'Liberation Sans', sans-serif;letter-spacing:-0.255px;">lab1_cc(fast)</div>
<div class="t" style="left:334.40px;top:266.72px;font-size:17px;color:#15152a;font-family:'Liberation Sans', sans-serif;letter-spacing:-0.793px;">Module</div>
<div class="t" style="left:478.70px;top:266.72px;font-size:17px;color:#15152a;font-family:'Liberation Sans', sans-serif;letter-spacing:-0.458px;">DU Instance</div>
<div class="t" style="left:227.80px;top:290.82px;font-size:17px;color:#15152a;font-family:'Liberation Sans', sans-serif;letter-spacing:0.068px;">lab1_testb...</div>
<div class="t" style="left:334.40px;top:290.82px;font-size:17px;color:#15152a;font-family:'Liberation Sans', sans-serif;letter-spacing:-0.844px;">Process</div>
<div class="t" style="left:478.70px;top:290.82px;font-size:17px;color:#15152a;font-family:'Liberation Sans', sans-serif;letter-spacing:0.339px;">-</div>
<div class="t" style="left:227.80px;top:314.82px;font-size:17px;color:#15152a;font-family:'Liberation Sans', sans-serif;letter-spacing:0.068px;">lab1_testb...</div>
<div class="t" style="left:334.40px;top:314.82px;font-size:17px;color:#15152a;font-family:'Liberation Sans', sans-serif;letter-spacing:-0.844px;">Process</div>
<div class="t" style="left:478.70px;top:314.82px;font-size:17px;color:#15152a;font-family:'Liberation Sans', sans-serif;letter-spacing:0.339px;">-</div>
<div class="t" style="left:227.80px;top:338.92px;font-size:17px;color:#15152a;font-family:'Liberation Sans', sans-serif;letter-spacing:0.068px;">lab1_testb...</div>
<div class="t" style="left:334.40px;top:338.92px;font-size:17px;color:#15152a;font-family:'Liberation Sans', sans-serif;letter-spacing:-0.844px;">Process</div>
<div class="t" style="left:478.70px;top:338.92px;font-size:17px;color:#15152a;font-family:'Liberation Sans', sans-serif;letter-spacing:0.339px;">-</div>
<div class="t" style="left:227.80px;top:362.92px;font-size:17px;color:#15152a;font-family:'Liberation Sans', sans-serif;letter-spacing:-0.226px;">std</div>
<div class="t" style="left:334.40px;top:362.92px;font-size:17px;color:#15152a;font-family:'Liberation Sans', sans-serif;letter-spacing:-1.030px;">VlPackage</div>
<div class="t" style="left:478.70px;top:362.92px;font-size:17px;color:#15152a;font-family:'Liberation Sans', sans-serif;letter-spacing:-0.880px;">Package</div>
<div class="t" style="left:334.40px;top:387.02px;font-size:17px;color:#15152a;font-family:'Liberation Sans', sans-serif;letter-spacing:-0.455px;">Capacity</div>
<div class="t" style="left:478.70px;top:387.02px;font-size:17px;color:#15152a;font-family:'Liberation Sans', sans-serif;letter-spacing:-0.352px;">Statistics</div>
<div style="left:4.00px;top:809.00px;width:614.50px;height:3.50px;background:#f0f0f0;"></div>
<div style="left:4.50px;top:812.40px;width:613.00px;height:22.40px;background:#f8f8f8;"></div>
<div style="left:4.5px;top:812.4px;width:23.399999999999977px;height:22.399999999999977px;background:#f0f0f0;border-top:1px solid #fff;border-left:1px solid #fff;border-right:2px solid #909090;border-bottom:2px solid #909090;"></div>
<svg style="left:4.50px;top:812.40px;" width="23.40" height="22.40" viewBox="0 0 23.399999999999977 22.399999999999977"><path d="M14.199999999999989 6.199999999999989 v9.5 l-6 -4.75z" fill="#000"/></svg>
<div style="left:594.1px;top:812.4px;width:23.399999999999977px;height:22.399999999999977px;background:#f0f0f0;border-top:1px solid #fff;border-left:1px solid #fff;border-right:2px solid #909090;border-bottom:2px solid #909090;"></div>
<svg style="left:594.10px;top:812.40px;" width="23.40" height="22.40" viewBox="0 0 23.399999999999977 22.399999999999977"><path d="M8.699999999999989 6.199999999999989 v9.5 l6 -4.75z" fill="#000"/></svg>
<div style="left:27.3px;top:812.4px;width:414.4px;height:22.399999999999977px;background:#f0f0f0;border-top:1px solid #fff;border-left:1px solid #fff;border-right:2px solid #909090;border-bottom:2px solid #909090;"></div>
<div style="left:1.00px;top:835.00px;width:619.00px;height:5.00px;background:#f0f0f0;"></div>
<div style="left:1.00px;top:839.00px;width:588.00px;height:2.20px;background:#2a2a2a;"></div>
<div style="left:1.00px;top:841.00px;width:618.00px;height:32.50px;background:#f0f0f0;"></div>
<div style="left:1.2px;top:841px;width:117.1px;height:30px;background:#c8c8c8;border:2px solid #2c2c2c;border-top:none;border-radius:0 0 7px 7px;"></div>
<div style="left:116.8px;top:841px;width:118.7px;height:30px;background:#c8c8c8;border:2px solid #2c2c2c;border-top:none;border-radius:0 0 7px 7px;"></div>
<div style="left:234px;top:841px;width:153.10000000000002px;height:30px;background:#c8c8c8;border:2px solid #2c2c2c;border-top:none;border-radius:0 0 7px 7px;"></div>
<div style="left:385.6px;top:839px;width:90.39999999999998px;height:32px;background:#f0f0f0;border:2px solid #2c2c2c;border-top:none;border-radius:0 0 7px 7px;"></div>
<div style="left:387.20px;top:838.50px;width:86.00px;height:3.00px;background:#f0f0f0;"></div>
<svg style="left:9.00px;top:843.00px;" width="26.00" height="22.00" viewBox="0 0 26 22"><path d="M2 21 L6 14 V20 H21 V14 L24.5 21Z" fill="#111"/><rect x="6.5" y="6" width="4.5" height="14" fill="#18b090" stroke="#111" stroke-width="1"/><rect x="11" y="1" width="4.5" height="19" fill="#e81870" stroke="#111" stroke-width="1"/><rect x="15.5" y="8" width="4.5" height="12" fill="#2888f0" stroke="#111" stroke-width="1"/><rect x="19.5" y="4" width="3.5" height="16" fill="#e8c818" stroke="#111" stroke-width="1"/></svg>
<div class="t" style="left:38.50px;top:844.72px;font-size:17px;color:#15152a;font-family:'Liberation Sans', sans-serif;letter-spacing:-0.323px;">Library</div>
<svg style="left:98.00px;top:847.70px;" width="13.00" height="13.00" viewBox="0 0 13 13"><path d="M1.5 1.5 L11.5 11.5 M11.5 1.5 L1.5 11.5" stroke="#9a9a9a" stroke-width="2.6"/></svg>
<svg style="left:124.00px;top:842.00px;" width="23.00" height="22.00" viewBox="0 0 23 22"><rect x="1" y="9" width="21" height="12" fill="#fff" stroke="#222" stroke-width="1.4"/><path d="M3 13 h17 M3 16 h17 M3 19 h17" stroke="#222" stroke-width="1.2" stroke-dasharray="1.4 1.4"/><path d="M4 1 h16 M4 4 h16" stroke="#3848d8" stroke-width="1.5" stroke-dasharray="1.5 2"/><path d="M7.5 2 v7 M16 2 v7" stroke="#1828c8" stroke-width="2.2"/><path d="M4 6 h7 l-3.5 4.5z M12.5 6 h7 l-3.5 4.5z" fill="#1828c8"/></svg>
<div class="t" style="left:152.80px;top:844.72px;font-size:17px;color:#15152a;font-family:'Liberation Sans', sans-serif;letter-spacing:-0.101px;">Project</div>
<svg style="left:215.60px;top:847.70px;" width="13.00" height="13.00" viewBox="0 0 13 13"><path d="M1.5 1.5 L11.5 11.5 M11.5 1.5 L1.5 11.5" stroke="#9a9a9a" stroke-width="2.6"/></svg>
<svg style="left:244.00px;top:844.50px;" width="20.00" height="20.00" viewBox="0 0 20 20"><rect width="20" height="20" fill="#555"/><rect x="1.5" y="1.5" width="4.8" height="4.8" fill="#e8d818"/><rect x="7.7" y="1.5" width="4.8" height="4.8" fill="#e02020"/><rect x="13.9" y="1.5" width="4.8" height="4.8" fill="#20a020"/><rect x="1.5" y="7.7" width="4.8" height="4.8" fill="#e87818"/><rect x="7.7" y="7.7" width="4.8" height="4.8" fill="#3878e8"/><rect x="13.9" y="7.7" width="4.8" height="4.8" fill="#e8e8e8"/><rect x="1.5" y="13.9" width="4.8" height="4.8" fill="#20a020"/><rect x="7.7" y="13.9" width="4.8" height="4.8" fill="#e8e8e8"/><rect x="13.9" y="13.9" width="4.8" height="4.8" fill="#e8d818"/></svg>
<div class="t" style="left:271.30px;top:844.72px;font-size:17px;color:#15152a;font-family:'Liberation Sans', sans-serif;letter-spacing:-0.552px;">Memory List</div>
<svg style="left:367.00px;top:847.70px;" width="13.00" height="13.00" viewBox="0 0 13 13"><path d="M1.5 1.5 L11.5 11.5 M11.5 1.5 L1.5 11.5" stroke="#9a9a9a" stroke-width="2.6"/></svg>
<svg style="left:393.80px;top:841.50px;" width="25.00" height="25.00" viewBox="0 0 24 24"><path d="M2 2 h6 M1 5 h6 M1.5 8 h5 M2 11 h4" stroke="#9aa0d8" stroke-width="1.2"/><path d="M8.5 2.5 Q10 0.8 12 1.6 L21.5 1.2 Q23.5 3 22 6 L20.5 16 Q20 18.5 17 18 L7 18.5 Q5 17 6 14 L8 6 Q9.5 4.5 8.5 2.5Z" fill="#fff" stroke="#000" stroke-width="1.7"/><path d="M11 5.5 h8 M10.5 8.5 h8 M10 11.5 h8 M9.5 14.5 h7" stroke="#5a60a8" stroke-width="1.3" stroke-dasharray="2.2 1"/><path d="M3 15 L8 13.5 L10 19 L5 23.5 L0.7 19.5Z" fill="#000"/><path d="M19.5 16.5 L23.5 20 L20 23.8 L16.5 20.5Z" fill="#000"/><circle cx="5.3" cy="19" r="2.6" fill="#e01028"/><circle cx="20.2" cy="20.3" r="2.2" fill="#e01028"/></svg>
<div class="t" style="left:423.60px;top:844.72px;font-size:17px;color:#15152a;font-family:'Liberation Sans', sans-serif;letter-spacing:-1.346px;">sim</div>
<svg style="left:455.50px;top:847.70px;" width="13.00" height="13.00" viewBox="0 0 13 13"><path d="M1.5 1.5 L11.5 11.5 M11.5 1.5 L1.5 11.5" stroke="#b0b0b0" stroke-width="2.6"/></svg>
<div style="left:587.6px;top:846px;width:13.6px;height:15px;background:#f0f0f0;border-top:1px solid #fff;border-left:1px solid #fff;border-right:2px solid #909090;border-bottom:2px solid #909090;"></div>
<div style="left:604.2px;top:846px;width:13.6px;height:15px;background:#f0f0f0;border-top:1px solid #fff;border-left:1px solid #fff;border-right:2px solid #909090;border-bottom:2px solid #909090;"></div>
<svg style="left:587.60px;top:846.00px;" width="14.00" height="15.00" viewBox="0 0 14 15"><path d="M8.5 3 L4 7.5 L8.5 12 M10.5 5 L8 7.5 L10.5 10" fill="none" stroke="#777" stroke-width="1.2"/></svg>
<svg style="left:604.20px;top:846.00px;" width="14.00" height="15.00" viewBox="0 0 14 15"><path d="M4.5 3 L9 7.5 L4.5 12 M2.5 5 L5 7.5 L2.5 10" fill="none" stroke="#777" stroke-width="1.2"/></svg>
<div style="left:630.00px;top:181.00px;width:620.00px;height:341.00px;background:#f0f0f0;"></div>
<div style="left:630.00px;top:181.00px;width:1.50px;height:341.00px;background:#9a9a9a;"></div>
<svg style="left:634.00px;top:183.50px;" width="24.50" height="25.00" viewBox="0 0 24 24"><path d="M9 0.5 L15.5 6.5 L8 13.5 L1 7.5Z" fill="#c020d0"/><path d="M9 3.5 L12 6.5 L8 10 L4.5 7.3Z" fill="#e8e0f0"/><rect x="12" y="8" width="11.5" height="10.5" fill="#18a030"/><circle cx="13.3" cy="9" r="5.3" fill="#18d8f8" stroke="#60a8b8" stroke-width="0.8"/><path d="M8.5 9.5 L16.5 16.5 L8 23.5 L0.5 16.5Z" fill="#1048f0"/></svg>
<div class="t" style="left:663.30px;top:186.91px;font-size:17px;color:#15152a;font-family:'Liberation Sans', sans-serif;letter-spacing:-0.376px;">Objects</div>
<div style="left:727.00px;top:193.40px;width:203.00px;height:1.30px;background:#8c8c8c;"></div>
<div style="left:727.00px;top:194.70px;width:203.00px;height:1.20px;background:#fdfdfd;"></div>
<div style="left:727.00px;top:200.70px;width:203.00px;height:1.30px;background:#8c8c8c;"></div>
<div style="left:727.00px;top:202.00px;width:203.00px;height:1.20px;background:#fdfdfd;"></div>
<svg style="left:936.00px;top:193.60px;" width="26.00" height="10.00" viewBox="0 0 26 10"><rect x="0.0" y="0" width="1.5" height="1.5" fill="#555"/><rect x="0.0" y="3.6" width="1.5" height="1.5" fill="#555"/><rect x="0.0" y="7.2" width="1.5" height="1.5" fill="#555"/><rect x="3.2" y="0" width="1.5" height="1.5" fill="#555"/><rect x="3.2" y="3.6" width="1.5" height="1.5" fill="#555"/><rect x="3.2" y="7.2" width="1.5" height="1.5" fill="#555"/><rect x="6.4" y="0" width="1.5" height="1.5" fill="#555"/><rect x="6.4" y="3.6" width="1.5" height="1.5" fill="#555"/><rect x="6.4" y="7.2" width="1.5" height="1.5" fill="#555"/><rect x="9.6" y="0" width="1.5" height="1.5" fill="#555"/><rect x="9.6" y="3.6" width="1.5" height="1.5" fill="#555"/><rect x="9.6" y="7.2" width="1.5" height="1.5" fill="#555"/><rect x="12.8" y="0" width="1.5" height="1.5" fill="#555"/><rect x="12.8" y="3.6" width="1.5" height="1.5" fill="#555"/><rect x="12.8" y="7.2" width="1.5" height="1.5" fill="#555"/><rect x="16.0" y="0" width="1.5" height="1.5" fill="#555"/><rect x="16.0" y="3.6" width="1.5" height="1.5" fill="#555"/><rect x="16.0" y="7.2" width="1.5" height="1.5" fill="#555"/><rect x="19.2" y="0" width="1.5" height="1.5" fill="#555"/><rect x="19.2" y="3.6" width="1.5" height="1.5" fill="#555"/><rect x="19.2" y="7.2" width="1.5" height="1.5" fill="#555"/><rect x="22.4" y="0" width="1.5" height="1.5" fill="#555"/><rect x="22.4" y="3.6" width="1.5" height="1.5" fill="#555"/><rect x="22.4" y="7.2" width="1.5" height="1.5" fill="#555"/></svg>
<div style="left:964.00px;top:193.40px;width:203.50px;height:1.30px;background:#8c8c8c;"></div>
<div style="left:964.00px;top:194.70px;width:203.50px;height:1.20px;background:#fdfdfd;"></div>
<div style="left:964.00px;top:200.70px;width:203.50px;height:1.30px;background:#8c8c8c;"></div>
<div style="left:964.00px;top:202.00px;width:203.50px;height:1.20px;background:#fdfdfd;"></div>
<div style="left:1175px;top:187px;width:17px;height:17.5px;background:#f0f0f0;border-top:1px solid #fff;border-left:1px solid #fff;border-right:2px solid #909090;border-bottom:2px solid #909090;"></div>
<div style="left:1199px;top:187px;width:18.5px;height:17.5px;background:#f0f0f0;border-top:1px solid #fff;border-left:1px solid #fff;border-right:2px solid #909090;border-bottom:2px solid #909090;"></div>
<div style="left:1225px;top:187px;width:18.5px;height:17.5px;background:#f0f0f0;border-top:1px solid #fff;border-left:1px solid #fff;border-right:2px solid #909090;border-bottom:2px solid #909090;"></div>
<svg style="left:1175.00px;top:187.00px;" width="17.00" height="17.50" viewBox="0 0 17 17.5"><path d="M2.5 8.25 h11 M8.0 2.75 v11" stroke="#000" stroke-width="2.4"/></svg>
<svg style="left:1199.00px;top:187.00px;" width="18.50" height="17.50" viewBox="0 0 18.5 17.5"><rect x="3.75" y="7.25" width="6.5" height="6.5" fill="none" stroke="#000" stroke-width="1.6"/><path d="M6.75 10.75 L13.25 4.25" stroke="#000" stroke-width="2"/><path d="M8.75 2.75 h6 v6z" fill="#000"/></svg>
<svg style="left:1225.00px;top:187.00px;" width="18.50" height="17.50" viewBox="0 0 18.5 17.5"><path d="M3.75 3.25 l10 10 M13.75 3.25 l-10 10" stroke="#000" stroke-width="2"/></svg>
<div style="left:633.00px;top:211.00px;width:613.50px;height:306.50px;background:#525c8e;border-left:2px solid #6e6e6e;border-top:2px solid #8a8a8a;"></div>
<div style="left:634.50px;top:212.00px;width:610.50px;height:24.50px;background:#f0f0f0;border-top:1px solid #fff;"></div>
<div style="left:634.50px;top:234.90px;width:610.50px;height:2.20px;background:#6e6e6e;"></div>
<div style="left:649.50px;top:212.00px;width:1.60px;height:23.50px;background:#8c8c8c;"></div>
<div style="left:651.10px;top:212.00px;width:1.30px;height:23.50px;background:#fdfdfd;"></div>
<div style="left:852.00px;top:212.00px;width:1.60px;height:23.50px;background:#8c8c8c;"></div>
<div style="left:853.60px;top:212.00px;width:1.30px;height:23.50px;background:#fdfdfd;"></div>
<div style="left:918.20px;top:212.00px;width:1.60px;height:23.50px;background:#8c8c8c;"></div>
<div style="left:919.80px;top:212.00px;width:1.30px;height:23.50px;background:#fdfdfd;"></div>
<div style="left:975.10px;top:212.00px;width:1.60px;height:23.50px;background:#8c8c8c;"></div>
<div style="left:976.70px;top:212.00px;width:1.30px;height:23.50px;background:#fdfdfd;"></div>
<div style="left:1041.20px;top:212.00px;width:1.60px;height:23.50px;background:#8c8c8c;"></div>
<div style="left:1042.80px;top:212.00px;width:1.30px;height:23.50px;background:#fdfdfd;"></div>
<svg style="left:637.50px;top:218.00px;" width="14.00" height="12.00" viewBox="0 0 14 12"><path d="M1 1 H13 L7 9.5Z" fill="#555"/><path d="M3.5 1 H10.5 L7 6Z" fill="#222"/><path d="M2 10.5 h10" stroke="#bbb" stroke-width="1" stroke-dasharray="1 1"/></svg>
<div class="t" style="left:654.00px;top:215.91px;font-size:17px;color:#15152a;font-family:'Liberation Sans', sans-serif;letter-spacing:-1.337px;">Name</div>
<div class="t" style="left:857.00px;top:215.91px;font-size:17px;color:#15152a;font-family:'Liberation Sans', sans-serif;letter-spacing:-0.644px;">Value</div>
<div class="t" style="left:922.70px;top:215.91px;font-size:17px;color:#15152a;font-family:'Liberation Sans', sans-serif;letter-spacing:-1.006px;">Kind</div>
<div class="t" style="left:980.00px;top:215.91px;font-size:17px;color:#15152a;font-family:'Liberation Sans', sans-serif;letter-spacing:-0.881px;">Mode</div>
<svg style="left:838.50px;top:219.00px;" width="12.00" height="10.00" viewBox="0 0 12 10"><path d="M1 1 H11 L6 8.5Z" fill="#fff" stroke="#777" stroke-width="1.1"/></svg>
<div style="left:1093.00px;top:213.50px;width:135.00px;height:21.50px;background:#e6f0e6;border:1px solid #cdd6cd;"></div>
<div style="left:1118.00px;top:213.50px;width:1.00px;height:21.50px;background:#cdd6cd;"></div>
<div style="left:1202.50px;top:213.50px;width:1.00px;height:21.50px;background:#cdd6cd;"></div>
<svg style="left:1094.00px;top:214.00px;" width="24.00" height="21.00" viewBox="0 0 24 21"><path d="M3 4.3 H7.6 V18 H16" fill="none" stroke="#111" stroke-width="1.6"/><path d="M12 9.5 H20 V13 H12Z" fill="#808080"/><path d="M15.5 5.5 L10.5 11.2 L15.5 17" fill="none" stroke="#222" stroke-width="1.5"/></svg>
<svg style="left:1126.00px;top:217.00px;" width="14.00" height="14.00" viewBox="0 0 14 14"><circle cx="6.6" cy="6.6" r="5.7" fill="#00c800" stroke="#0a3a0a" stroke-width="1"/></svg>
<div class="t" style="left:1145.60px;top:215.74px;font-size:16.9px;color:#454550;font-family:'Liberation Mono', monospace;letter-spacing:0.000px;">98 ps</div>
<svg style="left:1203.50px;top:214.00px;" width="24.00" height="21.00" viewBox="0 0 24 21"><path d="M21 4.3 H16.4 V18 H8" fill="none" stroke="#111" stroke-width="1.6"/><path d="M4 9.5 H12 V13 H4Z" fill="#808080"/><path d="M8.5 5.5 L13.5 11.2 L8.5 17" fill="none" stroke="#222" stroke-width="1.5"/></svg>
<svg style="left:1234.00px;top:218.00px;" width="9.00" height="14.00" viewBox="0 0 9 14"><path d="M0.8 0.5 V13.3 L7.6 6.9Z" fill="#000"/></svg>
<div style="left:1245.50px;top:211.00px;width:2.00px;height:308.00px;background:#f6f6f6;"></div>
<div style="left:633.00px;top:517.50px;width:614.00px;height:2.00px;background:#fdfdfd;"></div>
<svg style="left:642.50px;top:246.70px;" width="15.00" height="15.00" viewBox="0 0 15 15"><rect x="0.5" y="0.5" width="13.5" height="13.5" fill="#fff" stroke="#c8cce0" stroke-width="1"/><path d="M3.3 7.3 h8 M7.3 3.3 v8" stroke="#000" stroke-width="1.7"/></svg>
<div style="left:657.00px;top:253.40px;width:8.00px;height:1.20px;background:#b8bcd0;"></div>
<svg style="left:664.00px;top:240.90px;" width="22.00" height="22.00" viewBox="0 0 22 22"><path d="M11 0.5 L21.5 11 L11 21.5 L0.5 11Z" fill="#1890d4"/><path d="M11 0.5 L11 11 L0.5 11Z" fill="#8cdcfc"/><path d="M11 0.5 L21.5 11 L11 11Z" fill="#2ea8e4"/><path d="M0.5 11 L11 11 L11 21.5Z" fill="#1682c4"/><path d="M21.5 11 L11 21.5 L11 11Z" fill="#0a6098"/><path d="M11 5.2 L16.8 11 L11 16.8 L5.2 11Z" fill="#10b4f0"/><path d="M11 5.2 L11 11 L5.2 11Z" fill="#b8ecff" opacity="0.85"/></svg>
<div class="t" style="left:693.40px;top:242.72px;font-size:17px;color:#ffffff;font-family:'Liberation Sans', sans-serif;letter-spacing:-0.374px;">vectornum</div>
<div class="t" style="left:857.40px;top:242.72px;font-size:17px;color:#ffffff;font-family:'Liberation Sans', sans-serif;letter-spacing:0.096px;">32'h0...</div>
<div class="t" style="left:922.70px;top:242.72px;font-size:17px;color:#ffffff;font-family:'Liberation Sans', sans-serif;letter-spacing:-0.138px;">Pack...</div>
<div class="t" style="left:980.00px;top:242.72px;font-size:17px;color:#ffffff;font-family:'Liberation Sans', sans-serif;letter-spacing:0.100px;">Internal</div>
<svg style="left:642.50px;top:270.75px;" width="15.00" height="15.00" viewBox="0 0 15 15"><rect x="0.5" y="0.5" width="13.5" height="13.5" fill="#fff" stroke="#c8cce0" stroke-width="1"/><path d="M3.3 7.3 h8 M7.3 3.3 v8" stroke="#000" stroke-width="1.7"/></svg>
<div style="left:657.00px;top:277.45px;width:8.00px;height:1.20px;background:#b8bcd0;"></div>
<svg style="left:664.00px;top:264.95px;" width="22.00" height="22.00" viewBox="0 0 22 22"><path d="M11 0.5 L21.5 11 L11 21.5 L0.5 11Z" fill="#1890d4"/><path d="M11 0.5 L11 11 L0.5 11Z" fill="#8cdcfc"/><path d="M11 0.5 L21.5 11 L11 11Z" fill="#2ea8e4"/><path d="M0.5 11 L11 11 L11 21.5Z" fill="#1682c4"/><path d="M21.5 11 L11 21.5 L11 11Z" fill="#0a6098"/><path d="M11 5.2 L16.8 11 L11 16.8 L5.2 11Z" fill="#10b4f0"/><path d="M11 5.2 L11 11 L5.2 11Z" fill="#b8ecff" opacity="0.85"/></svg>
<div class="t" style="left:693.40px;top:266.77px;font-size:17px;color:#ffffff;font-family:'Liberation Sans', sans-serif;letter-spacing:-0.018px;">testvectors</div>
<div class="t" style="left:857.40px;top:266.77px;font-size:17px;color:#ffffff;font-family:'Liberation Sans', sans-serif;letter-spacing:0.025px;">Not L...</div>
<div class="t" style="left:922.70px;top:266.77px;font-size:17px;color:#ffffff;font-family:'Liberation Sans', sans-serif;letter-spacing:0.245px;">Fixe...</div>
<div class="t" style="left:980.00px;top:266.77px;font-size:17px;color:#ffffff;font-family:'Liberation Sans', sans-serif;letter-spacing:0.100px;">Internal</div>
<svg style="left:642.50px;top:294.80px;" width="15.00" height="15.00" viewBox="0 0 15 15"><rect x="0.5" y="0.5" width="13.5" height="13.5" fill="#fff" stroke="#c8cce0" stroke-width="1"/><path d="M3.3 7.3 h8 M7.3 3.3 v8" stroke="#000" stroke-width="1.7"/></svg>
<div style="left:657.00px;top:301.50px;width:8.00px;height:1.20px;background:#b8bcd0;"></div>
<svg style="left:664.00px;top:289.00px;" width="22.00" height="22.00" viewBox="0 0 22 22"><path d="M11 0.5 L21.5 11 L11 21.5 L0.5 11Z" fill="#1890d4"/><path d="M11 0.5 L11 11 L0.5 11Z" fill="#8cdcfc"/><path d="M11 0.5 L21.5 11 L11 11Z" fill="#2ea8e4"/><path d="M0.5 11 L11 11 L11 21.5Z" fill="#1682c4"/><path d="M21.5 11 L11 21.5 L11 11Z" fill="#0a6098"/><path d="M11 5.2 L16.8 11 L11 16.8 L5.2 11Z" fill="#10b4f0"/><path d="M11 5.2 L11 11 L5.2 11Z" fill="#b8ecff" opacity="0.85"/></svg>
<div class="t" style="left:693.40px;top:290.82px;font-size:17px;color:#ffffff;font-family:'Liberation Sans', sans-serif;letter-spacing:-0.310px;">segexpected</div>
<div class="t" style="left:857.40px;top:290.82px;font-size:17px;color:#ffffff;font-family:'Liberation Sans', sans-serif;letter-spacing:-0.513px;">7'h78</div>
<div class="t" style="left:922.70px;top:290.82px;font-size:17px;color:#ffffff;font-family:'Liberation Sans', sans-serif;letter-spacing:-0.138px;">Pack...</div>
<div class="t" style="left:980.00px;top:290.82px;font-size:17px;color:#ffffff;font-family:'Liberation Sans', sans-serif;letter-spacing:0.100px;">Internal</div>
<svg style="left:642.50px;top:318.85px;" width="15.00" height="15.00" viewBox="0 0 15 15"><rect x="0.5" y="0.5" width="13.5" height="13.5" fill="#fff" stroke="#c8cce0" stroke-width="1"/><path d="M3.3 7.3 h8 M7.3 3.3 v8" stroke="#000" stroke-width="1.7"/></svg>
<div style="left:657.00px;top:325.55px;width:8.00px;height:1.20px;background:#b8bcd0;"></div>
<svg style="left:664.00px;top:313.05px;" width="22.00" height="22.00" viewBox="0 0 22 22"><path d="M11 0.5 L21.5 11 L11 21.5 L0.5 11Z" fill="#1890d4"/><path d="M11 0.5 L11 11 L0.5 11Z" fill="#8cdcfc"/><path d="M11 0.5 L21.5 11 L11 11Z" fill="#2ea8e4"/><path d="M0.5 11 L11 11 L11 21.5Z" fill="#1682c4"/><path d="M21.5 11 L11 21.5 L11 11Z" fill="#0a6098"/><path d="M11 5.2 L16.8 11 L11 16.8 L5.2 11Z" fill="#10b4f0"/><path d="M11 5.2 L11 11 L5.2 11Z" fill="#b8ecff" opacity="0.85"/></svg>
<div class="t" style="left:693.40px;top:314.87px;font-size:17px;color:#ffffff;font-family:'Liberation Sans', sans-serif;letter-spacing:-0.636px;">seg</div>
<div class="t" style="left:857.40px;top:314.87px;font-size:17px;color:#ffffff;font-family:'Liberation Sans', sans-serif;letter-spacing:-0.513px;">7'h78</div>
<div class="t" style="left:922.70px;top:314.87px;font-size:17px;color:#ffffff;font-family:'Liberation Sans', sans-serif;letter-spacing:-0.138px;">Pack...</div>
<div class="t" style="left:980.00px;top:314.87px;font-size:17px;color:#ffffff;font-family:'Liberation Sans', sans-serif;letter-spacing:0.100px;">Internal</div>
<svg style="left:642.50px;top:342.90px;" width="15.00" height="15.00" viewBox="0 0 15 15"><rect x="0.5" y="0.5" width="13.5" height="13.5" fill="#fff" stroke="#c8cce0" stroke-width="1"/><path d="M3.3 7.3 h8 M7.3 3.3 v8" stroke="#000" stroke-width="1.7"/></svg>
<div style="left:657.00px;top:349.60px;width:8.00px;height:1.20px;background:#b8bcd0;"></div>
<svg style="left:664.00px;top:337.10px;" width="22.00" height="22.00" viewBox="0 0 22 22"><path d="M11 0.5 L21.5 11 L11 21.5 L0.5 11Z" fill="#1890d4"/><path d="M11 0.5 L11 11 L0.5 11Z" fill="#8cdcfc"/><path d="M11 0.5 L21.5 11 L11 11Z" fill="#2ea8e4"/><path d="M0.5 11 L11 11 L11 21.5Z" fill="#1682c4"/><path d="M21.5 11 L11 21.5 L11 11Z" fill="#0a6098"/><path d="M11 5.2 L16.8 11 L11 16.8 L5.2 11Z" fill="#10b4f0"/><path d="M11 5.2 L11 11 L5.2 11Z" fill="#b8ecff" opacity="0.85"/></svg>
<div class="t" style="left:693.40px;top:338.92px;font-size:17px;color:#ffffff;font-family:'Liberation Sans', sans-serif;letter-spacing:-0.500px;">s</div>
<div class="t" style="left:857.40px;top:338.92px;font-size:17px;color:#ffffff;font-family:'Liberation Sans', sans-serif;letter-spacing:-0.402px;">4'h7</div>
<div class="t" style="left:922.70px;top:338.92px;font-size:17px;color:#ffffff;font-family:'Liberation Sans', sans-serif;letter-spacing:-0.138px;">Pack...</div>
<div class="t" style="left:980.00px;top:338.92px;font-size:17px;color:#ffffff;font-family:'Liberation Sans', sans-serif;letter-spacing:0.100px;">Internal</div>
<svg style="left:664.00px;top:361.15px;" width="22.00" height="22.00" viewBox="0 0 22 22"><path d="M11 0.5 L21.5 11 L11 21.5 L0.5 11Z" fill="#1890d4"/><path d="M11 0.5 L11 11 L0.5 11Z" fill="#8cdcfc"/><path d="M11 0.5 L21.5 11 L11 11Z" fill="#2ea8e4"/><path d="M0.5 11 L11 11 L11 21.5Z" fill="#1682c4"/><path d="M21.5 11 L11 21.5 L11 11Z" fill="#0a6098"/><path d="M11 5.2 L16.8 11 L11 16.8 L5.2 11Z" fill="#10b4f0"/><path d="M11 5.2 L11 11 L5.2 11Z" fill="#b8ecff" opacity="0.85"/></svg>
<div class="t" style="left:693.40px;top:362.97px;font-size:17px;color:#ffffff;font-family:'Liberation Sans', sans-serif;letter-spacing:0.141px;">reset</div>
<div class="t" style="left:857.40px;top:362.97px;font-size:17px;color:#ffffff;font-family:'Liberation Sans', sans-serif;letter-spacing:-0.402px;">1'h1</div>
<div class="t" style="left:922.70px;top:362.97px;font-size:17px;color:#ffffff;font-family:'Liberation Sans', sans-serif;letter-spacing:-0.019px;">Regi...</div>
<div class="t" style="left:980.00px;top:362.97px;font-size:17px;color:#ffffff;font-family:'Liberation Sans', sans-serif;letter-spacing:0.100px;">Internal</div>
<svg style="left:642.50px;top:391.00px;" width="15.00" height="15.00" viewBox="0 0 15 15"><rect x="0.5" y="0.5" width="13.5" height="13.5" fill="#fff" stroke="#c8cce0" stroke-width="1"/><path d="M3.3 7.3 h8 M7.3 3.3 v8" stroke="#000" stroke-width="1.7"/></svg>
<div style="left:657.00px;top:397.70px;width:8.00px;height:1.20px;background:#b8bcd0;"></div>
<svg style="left:664.00px;top:385.20px;" width="22.00" height="22.00" viewBox="0 0 22 22"><path d="M11 0.5 L21.5 11 L11 21.5 L0.5 11Z" fill="#1890d4"/><path d="M11 0.5 L11 11 L0.5 11Z" fill="#8cdcfc"/><path d="M11 0.5 L21.5 11 L11 11Z" fill="#2ea8e4"/><path d="M0.5 11 L11 11 L11 21.5Z" fill="#1682c4"/><path d="M21.5 11 L11 21.5 L11 11Z" fill="#0a6098"/><path d="M11 5.2 L16.8 11 L11 16.8 L5.2 11Z" fill="#10b4f0"/><path d="M11 5.2 L11 11 L5.2 11Z" fill="#b8ecff" opacity="0.85"/></svg>
<div class="t" style="left:693.40px;top:387.02px;font-size:17px;color:#ffffff;font-family:'Liberation Sans', sans-serif;letter-spacing:-0.198px;">ledexpected</div>
<div class="t" style="left:857.40px;top:387.02px;font-size:17px;color:#ffffff;font-family:'Liberation Sans', sans-serif;letter-spacing:-1.123px;">3'hX</div>
<div class="t" style="left:922.70px;top:387.02px;font-size:17px;color:#ffffff;font-family:'Liberation Sans', sans-serif;letter-spacing:-0.138px;">Pack...</div>
<div class="t" style="left:980.00px;top:387.02px;font-size:17px;color:#ffffff;font-family:'Liberation Sans', sans-serif;letter-spacing:0.100px;">Internal</div>
<svg style="left:642.50px;top:415.05px;" width="15.00" height="15.00" viewBox="0 0 15 15"><rect x="0.5" y="0.5" width="13.5" height="13.5" fill="#fff" stroke="#c8cce0" stroke-width="1"/><path d="M3.3 7.3 h8 M7.3 3.3 v8" stroke="#000" stroke-width="1.7"/></svg>
<div style="left:657.00px;top:421.75px;width:8.00px;height:1.20px;background:#b8bcd0;"></div>
<svg style="left:664.00px;top:409.25px;" width="22.00" height="22.00" viewBox="0 0 22 22"><path d="M11 0.5 L21.5 11 L11 21.5 L0.5 11Z" fill="#1890d4"/><path d="M11 0.5 L11 11 L0.5 11Z" fill="#8cdcfc"/><path d="M11 0.5 L21.5 11 L11 11Z" fill="#2ea8e4"/><path d="M0.5 11 L11 11 L11 21.5Z" fill="#1682c4"/><path d="M21.5 11 L11 21.5 L11 11Z" fill="#0a6098"/><path d="M11 5.2 L16.8 11 L11 16.8 L5.2 11Z" fill="#10b4f0"/><path d="M11 5.2 L11 11 L5.2 11Z" fill="#b8ecff" opacity="0.85"/></svg>
<div class="t" style="left:693.40px;top:411.07px;font-size:17px;color:#ffffff;font-family:'Liberation Sans', sans-serif;letter-spacing:-0.395px;">led</div>
<div class="t" style="left:857.40px;top:411.07px;font-size:17px;color:#ffffff;font-family:'Liberation Sans', sans-serif;letter-spacing:-0.652px;">3'h0</div>
<div class="t" style="left:922.70px;top:411.07px;font-size:17px;color:#ffffff;font-family:'Liberation Sans', sans-serif;letter-spacing:-0.138px;">Pack...</div>
<div class="t" style="left:980.00px;top:411.07px;font-size:17px;color:#ffffff;font-family:'Liberation Sans', sans-serif;letter-spacing:0.100px;">Internal</div>
<svg style="left:642.50px;top:439.10px;" width="15.00" height="15.00" viewBox="0 0 15 15"><rect x="0.5" y="0.5" width="13.5" height="13.5" fill="#fff" stroke="#c8cce0" stroke-width="1"/><path d="M3.3 7.3 h8 M7.3 3.3 v8" stroke="#000" stroke-width="1.7"/></svg>
<div style="left:657.00px;top:445.80px;width:8.00px;height:1.20px;background:#b8bcd0;"></div>
<svg style="left:664.00px;top:433.30px;" width="22.00" height="22.00" viewBox="0 0 22 22"><path d="M11 0.5 L21.5 11 L11 21.5 L0.5 11Z" fill="#1890d4"/><path d="M11 0.5 L11 11 L0.5 11Z" fill="#8cdcfc"/><path d="M11 0.5 L21.5 11 L11 11Z" fill="#2ea8e4"/><path d="M0.5 11 L11 11 L11 21.5Z" fill="#1682c4"/><path d="M21.5 11 L11 21.5 L11 11Z" fill="#0a6098"/><path d="M11 5.2 L16.8 11 L11 16.8 L5.2 11Z" fill="#10b4f0"/><path d="M11 5.2 L11 11 L5.2 11Z" fill="#b8ecff" opacity="0.85"/></svg>
<div class="t" style="left:693.40px;top:435.12px;font-size:17px;color:#ffffff;font-family:'Liberation Sans', sans-serif;letter-spacing:-0.065px;">errors</div>
<div class="t" style="left:857.40px;top:435.12px;font-size:17px;color:#ffffff;font-family:'Liberation Sans', sans-serif;letter-spacing:0.096px;">32'h0...</div>
<div class="t" style="left:922.70px;top:435.12px;font-size:17px;color:#ffffff;font-family:'Liberation Sans', sans-serif;letter-spacing:-0.138px;">Pack...</div>
<div class="t" style="left:980.00px;top:435.12px;font-size:17px;color:#ffffff;font-family:'Liberation Sans', sans-serif;letter-spacing:0.100px;">Internal</div>
<svg style="left:664.00px;top:457.35px;" width="22.00" height="22.00" viewBox="0 0 22 22"><path d="M11 0.5 L21.5 11 L11 21.5 L0.5 11Z" fill="#1890d4"/><path d="M11 0.5 L11 11 L0.5 11Z" fill="#8cdcfc"/><path d="M11 0.5 L21.5 11 L11 11Z" fill="#2ea8e4"/><path d="M0.5 11 L11 11 L11 21.5Z" fill="#1682c4"/><path d="M21.5 11 L11 21.5 L11 11Z" fill="#0a6098"/><path d="M11 5.2 L16.8 11 L11 16.8 L5.2 11Z" fill="#10b4f0"/><path d="M11 5.2 L11 11 L5.2 11Z" fill="#b8ecff" opacity="0.85"/></svg>
<div class="t" style="left:693.40px;top:459.17px;font-size:17px;color:#ffffff;font-family:'Liberation Sans', sans-serif;letter-spacing:-0.759px;">clk</div>
<div class="t" style="left:857.40px;top:459.17px;font-size:17px;color:#ffffff;font-family:'Liberation Sans', sans-serif;letter-spacing:-0.652px;">1'h0</div>
<div class="t" style="left:922.70px;top:459.17px;font-size:17px;color:#ffffff;font-family:'Liberation Sans', sans-serif;letter-spacing:-0.019px;">Regi...</div>
<div class="t" style="left:980.00px;top:459.17px;font-size:17px;color:#ffffff;font-family:'Liberation Sans', sans-serif;letter-spacing:0.100px;">Internal</div>
<div style="left:630.00px;top:531.00px;width:620.00px;height:343.00px;background:#f0f0f0;"></div>
<div style="left:630.00px;top:531.00px;width:1.50px;height:343.00px;background:#9a9a9a;"></div>
<div style="left:630.00px;top:530.20px;width:620.00px;height:1.30px;background:#9a9a9a;"></div>
<svg style="left:634.50px;top:534.00px;" width="24.00" height="24.00" viewBox="0 0 24 24"><rect x="10" y="0.5" width="4" height="23" rx="1" fill="#5878a8" transform="rotate(0 12 12)"/><rect x="10" y="0.5" width="4" height="23" rx="1" fill="#5878a8" transform="rotate(45 12 12)"/><rect x="10" y="0.5" width="4" height="23" rx="1" fill="#5878a8" transform="rotate(90 12 12)"/><rect x="10" y="0.5" width="4" height="23" rx="1" fill="#5878a8" transform="rotate(135 12 12)"/><circle cx="12" cy="12" r="8.2" fill="#6c8cbc" stroke="#48648c" stroke-width="1"/><circle cx="12" cy="12" r="3.6" fill="#eef2f8" stroke="#48648c" stroke-width="1"/></svg>
<div class="t" style="left:662.40px;top:537.91px;font-size:17px;color:#15152a;font-family:'Liberation Sans', sans-serif;letter-spacing:-0.395px;">Processes (Active)</div>
<div style="left:805.00px;top:544.40px;width:163.00px;height:1.30px;background:#8c8c8c;"></div>
<div style="left:805.00px;top:545.70px;width:163.00px;height:1.20px;background:#fdfdfd;"></div>
<div style="left:805.00px;top:551.70px;width:163.00px;height:1.30px;background:#8c8c8c;"></div>
<div style="left:805.00px;top:553.00px;width:163.00px;height:1.20px;background:#fdfdfd;"></div>
<svg style="left:974.00px;top:544.60px;" width="26.00" height="10.00" viewBox="0 0 26 10"><rect x="0.0" y="0" width="1.5" height="1.5" fill="#555"/><rect x="0.0" y="3.6" width="1.5" height="1.5" fill="#555"/><rect x="0.0" y="7.2" width="1.5" height="1.5" fill="#555"/><rect x="3.2" y="0" width="1.5" height="1.5" fill="#555"/><rect x="3.2" y="3.6" width="1.5" height="1.5" fill="#555"/><rect x="3.2" y="7.2" width="1.5" height="1.5" fill="#555"/><rect x="6.4" y="0" width="1.5" height="1.5" fill="#555"/><rect x="6.4" y="3.6" width="1.5" height="1.5" fill="#555"/><rect x="6.4" y="7.2" width="1.5" height="1.5" fill="#555"/><rect x="9.6" y="0" width="1.5" height="1.5" fill="#555"/><rect x="9.6" y="3.6" width="1.5" height="1.5" fill="#555"/><rect x="9.6" y="7.2" width="1.5" height="1.5" fill="#555"/><rect x="12.8" y="0" width="1.5" height="1.5" fill="#555"/><rect x="12.8" y="3.6" width="1.5" height="1.5" fill="#555"/><rect x="12.8" y="7.2" width="1.5" height="1.5" fill="#555"/><rect x="16.0" y="0" width="1.5" height="1.5" fill="#555"/><rect x="16.0" y="3.6" width="1.5" height="1.5" fill="#555"/><rect x="16.0" y="7.2" width="1.5" height="1.5" fill="#555"/><rect x="19.2" y="0" width="1.5" height="1.5" fill="#555"/><rect x="19.2" y="3.6" width="1.5" height="1.5" fill="#555"/><rect x="19.2" y="7.2" width="1.5" height="1.5" fill="#555"/><rect x="22.4" y="0" width="1.5" height="1.5" fill="#555"/><rect x="22.4" y="3.6" width="1.5" height="1.5" fill="#555"/><rect x="22.4" y="7.2" width="1.5" height="1.5" fill="#555"/></svg>
<div style="left:1002.00px;top:544.40px;width:165.50px;height:1.30px;background:#8c8c8c;"></div>
<div style="left:1002.00px;top:545.70px;width:165.50px;height:1.20px;background:#fdfdfd;"></div>
<div style="left:1002.00px;top:551.70px;width:165.50px;height:1.30px;background:#8c8c8c;"></div>
<div style="left:1002.00px;top:553.00px;width:165.50px;height:1.20px;background:#fdfdfd;"></div>
<div style="left:1175px;top:538px;width:17px;height:17.5px;background:#f0f0f0;border-top:1px solid #fff;border-left:1px solid #fff;border-right:2px solid #909090;border-bottom:2px solid #909090;"></div>
<div style="left:1198.5px;top:538px;width:19.0px;height:17.5px;background:#f0f0f0;border-top:1px solid #fff;border-left:1px solid #fff;border-right:2px solid #909090;border-bottom:2px solid #909090;"></div>
<div style="left:1223.8px;top:538px;width:19.200000000000045px;height:17.5px;background:#f0f0f0;border-top:1px solid #fff;border-left:1px solid #fff;border-right:2px solid #909090;border-bottom:2px solid #909090;"></div>
<svg style="left:1175.00px;top:538.00px;" width="17.00" height="17.50" viewBox="0 0 17 17.5"><path d="M2.5 8.25 h11 M8.0 2.75 v11" stroke="#000" stroke-width="2.4"/></svg>
<svg style="left:1198.50px;top:538.00px;" width="19.00" height="17.50" viewBox="0 0 19.0 17.5"><rect x="4.0" y="7.25" width="6.5" height="6.5" fill="none" stroke="#000" stroke-width="1.6"/><path d="M7.0 10.75 L13.5 4.25" stroke="#000" stroke-width="2"/><path d="M9.0 2.75 h6 v6z" fill="#000"/></svg>
<svg style="left:1223.80px;top:538.00px;" width="19.20" height="17.50" viewBox="0 0 19.200000000000045 17.5"><path d="M4.100000000000023 3.25 l10 10 M14.100000000000023 3.25 l-10 10" stroke="#000" stroke-width="2"/></svg>
<div style="left:633.00px;top:560.00px;width:613.50px;height:282.00px;background:#8ca0ff;border-left:2px solid #6e6e6e;border-top:2px solid #8a8a8a;"></div>
<div style="left:634.50px;top:561.00px;width:610.50px;height:24.50px;background:#f0f0f0;border-top:1px solid #fff;"></div>
<div style="left:634.50px;top:583.90px;width:610.50px;height:2.20px;background:#6e6e6e;"></div>
<div style="left:649.20px;top:561.00px;width:1.60px;height:23.50px;background:#8c8c8c;"></div>
<div style="left:650.80px;top:561.00px;width:1.30px;height:23.50px;background:#fdfdfd;"></div>
<div style="left:852.10px;top:561.00px;width:1.60px;height:23.50px;background:#8c8c8c;"></div>
<div style="left:853.70px;top:561.00px;width:1.30px;height:23.50px;background:#fdfdfd;"></div>
<div style="left:1008.00px;top:561.00px;width:1.60px;height:23.50px;background:#8c8c8c;"></div>
<div style="left:1009.60px;top:561.00px;width:1.30px;height:23.50px;background:#fdfdfd;"></div>
<div style="left:1095.70px;top:561.00px;width:1.60px;height:23.50px;background:#8c8c8c;"></div>
<div style="left:1097.30px;top:561.00px;width:1.30px;height:23.50px;background:#fdfdfd;"></div>
<div style="left:1161.40px;top:561.00px;width:1.60px;height:23.50px;background:#8c8c8c;"></div>
<div style="left:1163.00px;top:561.00px;width:1.30px;height:23.50px;background:#fdfdfd;"></div>
<svg style="left:637.50px;top:567.00px;" width="14.00" height="12.00" viewBox="0 0 14 12"><path d="M1 1 H13 L7 9.5Z" fill="#555"/><path d="M3.5 1 H10.5 L7 6Z" fill="#222"/><path d="M2 10.5 h10" stroke="#bbb" stroke-width="1" stroke-dasharray="1 1"/></svg>
<div class="t" style="left:653.90px;top:564.91px;font-size:17px;color:#15152a;font-family:'Liberation Sans', sans-serif;letter-spacing:-1.087px;">Name</div>
<div class="t" style="left:856.40px;top:564.91px;font-size:17px;color:#15152a;font-family:'Liberation Sans', sans-serif;letter-spacing:0.005px;">Type (filtered)</div>
<div class="t" style="left:1012.80px;top:564.91px;font-size:17px;color:#15152a;font-family:'Liberation Sans', sans-serif;letter-spacing:-0.139px;">State</div>
<div class="t" style="left:1100.00px;top:564.91px;font-size:17px;color:#15152a;font-family:'Liberation Sans', sans-serif;letter-spacing:-0.391px;">Order</div>
<div style="left:1165.8px;top:561px;width:79px;height:22px;overflow:hidden;">
<div class="t" style="left:0.00px;top:3.91px;font-size:17px;color:#15152a;font-family:'Liberation Sans', sans-serif;letter-spacing:-0.526px;">Parent Path</div>
</div>
<div style="left:1245.50px;top:560.00px;width:2.00px;height:282.00px;background:#f6f6f6;"></div>
<div style="left:634.50px;top:591.20px;width:611.00px;height:22.00px;background:#c0cedc;"></div>
<svg style="left:665.00px;top:592.30px;" width="20.50" height="20.50" viewBox="0 0 20 20"><defs><radialGradient id="sg" cx="0.33" cy="0.3" r="0.75"><stop offset="0" stop-color="#d8f6ff"/><stop offset="0.18" stop-color="#52c6e6"/><stop offset="0.55" stop-color="#26a6cc"/><stop offset="1" stop-color="#16809f"/></radialGradient></defs><circle cx="10" cy="10" r="9.8" fill="url(#sg)"/><ellipse cx="6.3" cy="5.8" rx="2.6" ry="1.8" fill="#fff" opacity="0.85" transform="rotate(-35 6.3 5.8)"/></svg>
<div class="t" style="left:695.00px;top:592.82px;font-size:17px;color:#15152a;font-family:'Liberation Sans', sans-serif;letter-spacing:-0.352px;">#ALWAYS#59</div>
<div class="t" style="left:857.00px;top:592.82px;font-size:17px;color:#15152a;font-family:'Liberation Sans', sans-serif;letter-spacing:-0.391px;">Always</div>
<div class="t" style="left:1013.00px;top:592.82px;font-size:17px;color:#15152a;font-family:'Liberation Sans', sans-serif;letter-spacing:-0.299px;">Active</div>
<div class="t" style="left:1101.50px;top:592.82px;font-size:17px;color:#15152a;font-family:'Liberation Sans', sans-serif;letter-spacing:0.000px;">1</div>
<div style="left:1166px;top:591px;width:79px;height:22px;overflow:hidden;">
<div class="t" style="left:0.00px;top:1.91px;font-size:17px;color:#15152a;font-family:'Liberation Sans', sans-serif;letter-spacing:-0.203px;">/lab1_testbench</div>
</div>
<div style="left:633.00px;top:842.00px;width:614.00px;height:5.00px;background:#f0f0f0;"></div>
<div style="left:634.00px;top:847.00px;width:612.00px;height:22.60px;background:#f8f8f8;"></div>
<div style="left:634px;top:847px;width:23.600000000000023px;height:22.600000000000023px;background:#f0f0f0;border-top:1px solid #fff;border-left:1px solid #fff;border-right:2px solid #909090;border-bottom:2px solid #909090;"></div>
<svg style="left:634.00px;top:847.00px;" width="23.60" height="22.60" viewBox="0 0 23.600000000000023 22.600000000000023"><path d="M14.300000000000011 6.300000000000011 v9.5 l-6 -4.75z" fill="#000"/></svg>
<div style="left:1222.4px;top:847px;width:23.600000000000023px;height:22.600000000000023px;background:#f0f0f0;border-top:1px solid #fff;border-left:1px solid #fff;border-right:2px solid #909090;border-bottom:2px solid #909090;"></div>
<svg style="left:1222.40px;top:847.00px;" width="23.60" height="22.60" viewBox="0 0 23.600000000000023 22.600000000000023"><path d="M8.800000000000011 6.300000000000011 v9.5 l6 -4.75z" fill="#000"/></svg>
<div style="left:658px;top:847px;width:379.4000000000001px;height:22.600000000000023px;background:#f0f0f0;border-top:1px solid #fff;border-left:1px solid #fff;border-right:2px solid #909090;border-bottom:2px solid #909090;"></div>
<div style="left:630.00px;top:873.00px;width:620.00px;height:1.30px;background:#9a9a9a;"></div>
<div style="left:1259.00px;top:180.50px;width:1878.50px;height:654.00px;background:#f0f0f0;border:2px solid #a0a0a0;"></div>
<div style="left:1262.40px;top:183.20px;width:1872.50px;height:27.00px;background:#9cb8d8;"></div>
<svg style="left:1264.60px;top:185.40px;" width="22.50" height="22.50" viewBox="0 0 22.5 22.5"><rect x="0.5" y="0.5" width="21" height="21" fill="#000" stroke="#d8d8d8" stroke-width="1"/><rect x="1" y="1" width="20" height="4.5" fill="#fff"/><rect x="1" y="5.5" width="20" height="1.5" fill="#ccc"/><path d="M21.5 1 V21.5 H1" stroke="#444" stroke-width="1.4" fill="none"/><path d="M2 12 h4 v-3 h4 v6 h4 v-4 h6" fill="none" stroke="#10c030" stroke-width="1.8"/><path d="M2 18.5 h5 v-3 h3" fill="none" stroke="#10c030" stroke-width="1.6"/><path d="M10.5 18 h9" stroke="#3838e8" stroke-width="2"/><path d="M7.8 8 v12" stroke="#20d8e8" stroke-width="1.2"/></svg>
<div class="t" style="left:1292.40px;top:187.21px;font-size:17px;color:#15152a;font-family:'Liberation Sans', sans-serif;letter-spacing:-0.150px;">Wave - Default</div>
<div style="left:1412.00px;top:190.80px;width:811.00px;height:2.70px;background:#d0f0fc;"></div>
<div style="left:1412.00px;top:193.40px;width:811.00px;height:1.80px;background:#10182c;"></div>
<div style="left:1412.00px;top:197.60px;width:811.00px;height:2.70px;background:#d0f0fc;"></div>
<div style="left:1412.00px;top:200.20px;width:811.00px;height:1.80px;background:#10182c;"></div>
<div style="left:2248.00px;top:190.80px;width:808.00px;height:2.70px;background:#d0f0fc;"></div>
<div style="left:2248.00px;top:193.40px;width:808.00px;height:1.80px;background:#10182c;"></div>
<div style="left:2248.00px;top:197.60px;width:808.00px;height:2.70px;background:#d0f0fc;"></div>
<div style="left:2248.00px;top:200.20px;width:808.00px;height:1.80px;background:#10182c;"></div>
<div style="left:3055.00px;top:190.80px;width:1.80px;height:4.40px;background:#10182c;"></div>
<div style="left:3055.00px;top:197.60px;width:1.80px;height:4.40px;background:#10182c;"></div>
<svg style="left:2228.00px;top:193.30px;" width="18.00" height="10.00" viewBox="0 0 18 10"><rect x="0.0" y="0" width="1.5" height="1.5" fill="#e8f4ff"/><rect x="0.0" y="3.6" width="1.5" height="1.5" fill="#e8f4ff"/><rect x="0.0" y="7.2" width="1.5" height="1.5" fill="#e8f4ff"/><rect x="3.2" y="0" width="1.5" height="1.5" fill="#e8f4ff"/><rect x="3.2" y="3.6" width="1.5" height="1.5" fill="#e8f4ff"/><rect x="3.2" y="7.2" width="1.5" height="1.5" fill="#e8f4ff"/><rect x="6.4" y="0" width="1.5" height="1.5" fill="#e8f4ff"/><rect x="6.4" y="3.6" width="1.5" height="1.5" fill="#e8f4ff"/><rect x="6.4" y="7.2" width="1.5" height="1.5" fill="#e8f4ff"/><rect x="9.6" y="0" width="1.5" height="1.5" fill="#e8f4ff"/><rect x="9.6" y="3.6" width="1.5" height="1.5" fill="#e8f4ff"/><rect x="9.6" y="7.2" width="1.5" height="1.5" fill="#e8f4ff"/><rect x="12.8" y="0" width="1.5" height="1.5" fill="#e8f4ff"/><rect x="12.8" y="3.6" width="1.5" height="1.5" fill="#e8f4ff"/><rect x="12.8" y="7.2" width="1.5" height="1.5" fill="#e8f4ff"/><rect x="16.0" y="0" width="1.5" height="1.5" fill="#e8f4ff"/><rect x="16.0" y="3.6" width="1.5" height="1.5" fill="#e8f4ff"/><rect x="16.0" y="7.2" width="1.5" height="1.5" fill="#e8f4ff"/></svg>
<div style="left:3064px;top:187px;width:17px;height:17.5px;background:#f0f0f0;border-top:1px solid #fff;border-left:1px solid #fff;border-right:2px solid #909090;border-bottom:2px solid #909090;"></div>
<div style="left:3088px;top:187px;width:18px;height:17.5px;background:#f0f0f0;border-top:1px solid #fff;border-left:1px solid #fff;border-right:2px solid #909090;border-bottom:2px solid #909090;"></div>
<div style="left:3113.5px;top:187px;width:19.0px;height:17.5px;background:#f0f0f0;border-top:1px solid #fff;border-left:1px solid #fff;border-right:2px solid #909090;border-bottom:2px solid #909090;"></div>
<svg style="left:3064.00px;top:187.00px;" width="17.00" height="17.50" viewBox="0 0 17 17.5"><path d="M2.5 8.25 h11 M8.0 2.75 v11" stroke="#000" stroke-width="2.4"/></svg>
<svg style="left:3088.00px;top:187.00px;" width="18.00" height="17.50" viewBox="0 0 18 17.5"><rect x="3.5" y="7.25" width="6.5" height="6.5" fill="none" stroke="#000" stroke-width="1.6"/><path d="M6.5 10.75 L13.0 4.25" stroke="#000" stroke-width="2"/><path d="M8.5 2.75 h6 v6z" fill="#000"/></svg>
<svg style="left:3113.50px;top:187.00px;" width="19.00" height="17.50" viewBox="0 0 19.0 17.5"><path d="M4.0 3.25 l10 10 M14.0 3.25 l-10 10" stroke="#000" stroke-width="2"/></svg>
<div style="left:1263.00px;top:211.50px;width:413.00px;height:594.00px;background:#808080;"></div>
<div style="left:1263.00px;top:211.50px;width:413.00px;height:1.50px;background:#6a6a6a;"></div>
<div style="left:1676.00px;top:211.50px;width:4.70px;height:622.00px;background:#ffffff;"></div>
<div style="left:1680.70px;top:211.50px;width:150.00px;height:594.00px;background:#808080;"></div>
<div style="left:1680.70px;top:211.50px;width:150.00px;height:1.50px;background:#6a6a6a;"></div>
<div style="left:1830.70px;top:211.50px;width:4.50px;height:622.00px;background:#ffffff;"></div>
<div style="left:1263.00px;top:242.00px;width:413.00px;height:3.20px;background:#ffffff;"></div>
<div style="left:1680.70px;top:242.00px;width:150.00px;height:3.20px;background:#ffffff;"></div>
<div style="left:1265.00px;top:242.00px;width:11.80px;height:494.00px;background:#ffffff;"></div>
<svg style="left:1279.40px;top:215.80px;" width="24.00" height="24.50" viewBox="0 0 24 24"><path d="M9 0.5 L15.5 6.5 L8 13.5 L1 7.5Z" fill="#c020d0"/><path d="M9 3.5 L12 6.5 L8 10 L4.5 7.3Z" fill="#e8e0f0"/><rect x="12" y="8" width="11.5" height="10.5" fill="#18a030"/><circle cx="13.3" cy="9" r="5.3" fill="#18d8f8" stroke="#60a8b8" stroke-width="0.8"/><path d="M8.5 9.5 L16.5 16.5 L8 23.5 L0.5 16.5Z" fill="#1048f0"/></svg>
<svg style="left:1309.00px;top:229.00px;" width="9.00" height="6.00" viewBox="0 0 9 6"><path d="M0.5 0.5 H8.5 L4.5 5Z" fill="#000"/></svg>
<div class="t" style="left:1786.20px;top:218.71px;font-size:17px;color:#ffffff;font-family:'Liberation Sans', sans-serif;letter-spacing:-1.154px;">Msgs</div>
<svg style="left:1306.40px;top:249.00px;" width="22.60" height="22.60" viewBox="0 0 22 22"><path d="M11 0.5 L21.5 11 L11 21.5 L0.5 11Z" fill="#1890d4"/><path d="M11 0.5 L11 11 L0.5 11Z" fill="#8cdcfc"/><path d="M11 0.5 L21.5 11 L11 11Z" fill="#2ea8e4"/><path d="M0.5 11 L11 11 L11 21.5Z" fill="#1682c4"/><path d="M21.5 11 L11 21.5 L11 11Z" fill="#0a6098"/><path d="M11 5.2 L16.8 11 L11 16.8 L5.2 11Z" fill="#10b4f0"/><path d="M11 5.2 L11 11 L5.2 11Z" fill="#b8ecff" opacity="0.85"/></svg>
<div class="t" style="left:1336.80px;top:250.71px;font-size:17px;color:#ffffff;font-family:'Liberation Sans', sans-serif;letter-spacing:-0.239px;">/lab1_testbench/clk</div>
<div class="t" style="left:1683.70px;top:250.71px;font-size:17px;color:#ffffff;font-family:'Liberation Sans', sans-serif;letter-spacing:-0.777px;">1'h0</div>
<svg style="left:1306.40px;top:274.54px;" width="22.60" height="22.60" viewBox="0 0 22 22"><path d="M11 0.5 L21.5 11 L11 21.5 L0.5 11Z" fill="#1890d4"/><path d="M11 0.5 L11 11 L0.5 11Z" fill="#8cdcfc"/><path d="M11 0.5 L21.5 11 L11 11Z" fill="#2ea8e4"/><path d="M0.5 11 L11 11 L11 21.5Z" fill="#1682c4"/><path d="M21.5 11 L11 21.5 L11 11Z" fill="#0a6098"/><path d="M11 5.2 L16.8 11 L11 16.8 L5.2 11Z" fill="#10b4f0"/><path d="M11 5.2 L11 11 L5.2 11Z" fill="#b8ecff" opacity="0.85"/></svg>
<div class="t" style="left:1336.80px;top:276.25px;font-size:17px;color:#ffffff;font-family:'Liberation Sans', sans-serif;letter-spacing:-0.122px;">/lab1_testbench/reset</div>
<div class="t" style="left:1683.70px;top:276.25px;font-size:17px;color:#ffffff;font-family:'Liberation Sans', sans-serif;letter-spacing:-0.777px;">1'h1</div>
<svg style="left:1284.20px;top:304.98px;" width="15.00" height="15.00" viewBox="0 0 15 15"><rect x="0.5" y="0.5" width="13.5" height="13.5" fill="#fff" stroke="#b0b0b0" stroke-width="1"/><path d="M3.3 7.3 h8 M7.3 3.3 v8" stroke="#000" stroke-width="1.7"/></svg>
<div style="left:1298.50px;top:311.88px;width:8.00px;height:1.30px;background:#d0d0d0;"></div>
<svg style="left:1306.40px;top:300.08px;" width="22.60" height="22.60" viewBox="0 0 22 22"><path d="M11 0.5 L21.5 11 L11 21.5 L0.5 11Z" fill="#1890d4"/><path d="M11 0.5 L11 11 L0.5 11Z" fill="#8cdcfc"/><path d="M11 0.5 L21.5 11 L11 11Z" fill="#2ea8e4"/><path d="M0.5 11 L11 11 L11 21.5Z" fill="#1682c4"/><path d="M21.5 11 L11 21.5 L11 11Z" fill="#0a6098"/><path d="M11 5.2 L16.8 11 L11 16.8 L5.2 11Z" fill="#10b4f0"/><path d="M11 5.2 L11 11 L5.2 11Z" fill="#b8ecff" opacity="0.85"/></svg>
<div class="t" style="left:1336.80px;top:301.79px;font-size:17px;color:#ffffff;font-family:'Liberation Sans', sans-serif;letter-spacing:-0.192px;">/lab1_testbench/s</div>
<div class="t" style="left:1683.70px;top:301.79px;font-size:17px;color:#ffffff;font-family:'Liberation Sans', sans-serif;letter-spacing:-0.207px;">4'b0111</div>
<svg style="left:1284.20px;top:330.52px;" width="15.00" height="15.00" viewBox="0 0 15 15"><rect x="0.5" y="0.5" width="13.5" height="13.5" fill="#fff" stroke="#b0b0b0" stroke-width="1"/><path d="M3.3 7.3 h8 M7.3 3.3 v8" stroke="#000" stroke-width="1.7"/></svg>
<div style="left:1298.50px;top:337.42px;width:8.00px;height:1.30px;background:#d0d0d0;"></div>
<svg style="left:1306.40px;top:325.62px;" width="22.60" height="22.60" viewBox="0 0 22 22"><path d="M11 0.5 L21.5 11 L11 21.5 L0.5 11Z" fill="#1890d4"/><path d="M11 0.5 L11 11 L0.5 11Z" fill="#8cdcfc"/><path d="M11 0.5 L21.5 11 L11 11Z" fill="#2ea8e4"/><path d="M0.5 11 L11 11 L11 21.5Z" fill="#1682c4"/><path d="M21.5 11 L11 21.5 L11 11Z" fill="#0a6098"/><path d="M11 5.2 L16.8 11 L11 16.8 L5.2 11Z" fill="#10b4f0"/><path d="M11 5.2 L11 11 L5.2 11Z" fill="#b8ecff" opacity="0.85"/></svg>
<div class="t" style="left:1336.80px;top:327.33px;font-size:17px;color:#ffffff;font-family:'Liberation Sans', sans-serif;letter-spacing:-0.234px;">/lab1_testbench/led</div>
<div class="t" style="left:1683.70px;top:327.33px;font-size:17px;color:#ffffff;font-family:'Liberation Sans', sans-serif;letter-spacing:-0.636px;">3'b000</div>
<svg style="left:1284.20px;top:356.06px;" width="15.00" height="15.00" viewBox="0 0 15 15"><rect x="0.5" y="0.5" width="13.5" height="13.5" fill="#fff" stroke="#b0b0b0" stroke-width="1"/><path d="M3.3 7.3 h8 M7.3 3.3 v8" stroke="#000" stroke-width="1.7"/></svg>
<div style="left:1298.50px;top:362.96px;width:8.00px;height:1.30px;background:#d0d0d0;"></div>
<svg style="left:1306.40px;top:351.16px;" width="22.60" height="22.60" viewBox="0 0 22 22"><path d="M11 0.5 L21.5 11 L11 21.5 L0.5 11Z" fill="#1890d4"/><path d="M11 0.5 L11 11 L0.5 11Z" fill="#8cdcfc"/><path d="M11 0.5 L21.5 11 L11 11Z" fill="#2ea8e4"/><path d="M0.5 11 L11 11 L11 21.5Z" fill="#1682c4"/><path d="M21.5 11 L11 21.5 L11 11Z" fill="#0a6098"/><path d="M11 5.2 L16.8 11 L11 16.8 L5.2 11Z" fill="#10b4f0"/><path d="M11 5.2 L11 11 L5.2 11Z" fill="#b8ecff" opacity="0.85"/></svg>
<div class="t" style="left:1336.80px;top:352.87px;font-size:17px;color:#ffffff;font-family:'Liberation Sans', sans-serif;letter-spacing:-0.230px;">/lab1_testbench/seg</div>
<div class="t" style="left:1683.70px;top:352.87px;font-size:17px;color:#ffffff;font-family:'Liberation Sans', sans-serif;letter-spacing:-0.205px;">7'b1111000</div>
<svg style="left:1284.20px;top:381.60px;" width="15.00" height="15.00" viewBox="0 0 15 15"><rect x="0.5" y="0.5" width="13.5" height="13.5" fill="#fff" stroke="#b0b0b0" stroke-width="1"/><path d="M3.3 7.3 h8 M7.3 3.3 v8" stroke="#000" stroke-width="1.7"/></svg>
<div style="left:1298.50px;top:388.50px;width:8.00px;height:1.30px;background:#d0d0d0;"></div>
<svg style="left:1306.40px;top:376.70px;" width="22.60" height="22.60" viewBox="0 0 22 22"><path d="M11 0.5 L21.5 11 L11 21.5 L0.5 11Z" fill="#1890d4"/><path d="M11 0.5 L11 11 L0.5 11Z" fill="#8cdcfc"/><path d="M11 0.5 L21.5 11 L11 11Z" fill="#2ea8e4"/><path d="M0.5 11 L11 11 L11 21.5Z" fill="#1682c4"/><path d="M21.5 11 L11 21.5 L11 11Z" fill="#0a6098"/><path d="M11 5.2 L16.8 11 L11 16.8 L5.2 11Z" fill="#10b4f0"/><path d="M11 5.2 L11 11 L5.2 11Z" fill="#b8ecff" opacity="0.85"/></svg>
<div class="t" style="left:1336.80px;top:378.41px;font-size:17px;color:#ffffff;font-family:'Liberation Sans', sans-serif;letter-spacing:-0.228px;">/lab1_testbench/segexpected</div>
<div class="t" style="left:1683.70px;top:378.41px;font-size:17px;color:#ffffff;font-family:'Liberation Sans', sans-serif;letter-spacing:-0.205px;">7'b1111000</div>
<svg style="left:1284.20px;top:407.14px;" width="15.00" height="15.00" viewBox="0 0 15 15"><rect x="0.5" y="0.5" width="13.5" height="13.5" fill="#fff" stroke="#b0b0b0" stroke-width="1"/><path d="M3.3 7.3 h8 M7.3 3.3 v8" stroke="#000" stroke-width="1.7"/></svg>
<div style="left:1298.50px;top:414.04px;width:8.00px;height:1.30px;background:#d0d0d0;"></div>
<svg style="left:1306.40px;top:402.24px;" width="22.60" height="22.60" viewBox="0 0 22 22"><path d="M11 0.5 L21.5 11 L11 21.5 L0.5 11Z" fill="#1890d4"/><path d="M11 0.5 L11 11 L0.5 11Z" fill="#8cdcfc"/><path d="M11 0.5 L21.5 11 L11 11Z" fill="#2ea8e4"/><path d="M0.5 11 L11 11 L11 21.5Z" fill="#1682c4"/><path d="M21.5 11 L11 21.5 L11 11Z" fill="#0a6098"/><path d="M11 5.2 L16.8 11 L11 16.8 L5.2 11Z" fill="#10b4f0"/><path d="M11 5.2 L11 11 L5.2 11Z" fill="#b8ecff" opacity="0.85"/></svg>
<div class="t" style="left:1336.80px;top:403.95px;font-size:17px;color:#ffffff;font-family:'Liberation Sans', sans-serif;letter-spacing:-0.221px;">/lab1_testbench/vectornum</div>
<div class="t" style="left:1683.70px;top:403.95px;font-size:17px;color:#ffffff;font-family:'Liberation Sans', sans-serif;letter-spacing:-0.546px;">32'h00000008</div>
<svg style="left:1284.20px;top:432.68px;" width="15.00" height="15.00" viewBox="0 0 15 15"><rect x="0.5" y="0.5" width="13.5" height="13.5" fill="#fff" stroke="#b0b0b0" stroke-width="1"/><path d="M3.3 7.3 h8 M7.3 3.3 v8" stroke="#000" stroke-width="1.7"/></svg>
<div style="left:1298.50px;top:439.58px;width:8.00px;height:1.30px;background:#d0d0d0;"></div>
<svg style="left:1306.40px;top:427.78px;" width="22.60" height="22.60" viewBox="0 0 22 22"><path d="M11 0.5 L21.5 11 L11 21.5 L0.5 11Z" fill="#1890d4"/><path d="M11 0.5 L11 11 L0.5 11Z" fill="#8cdcfc"/><path d="M11 0.5 L21.5 11 L11 11Z" fill="#2ea8e4"/><path d="M0.5 11 L11 11 L11 21.5Z" fill="#1682c4"/><path d="M21.5 11 L11 21.5 L11 11Z" fill="#0a6098"/><path d="M11 5.2 L16.8 11 L11 16.8 L5.2 11Z" fill="#10b4f0"/><path d="M11 5.2 L11 11 L5.2 11Z" fill="#b8ecff" opacity="0.85"/></svg>
<div class="t" style="left:1336.80px;top:429.49px;font-size:17px;color:#ffffff;font-family:'Liberation Sans', sans-serif;letter-spacing:-0.143px;">/lab1_testbench/errors</div>
<div class="t" style="left:1683.70px;top:429.49px;font-size:17px;color:#ffffff;font-family:'Liberation Sans', sans-serif;letter-spacing:-0.546px;">32'h00000000</div>
<div style="left:1281.00px;top:452.00px;width:389.00px;height:1.30px;background:#1a1a1a;"></div>
<div style="left:1683.70px;top:452.00px;width:141.00px;height:1.30px;background:#1a1a1a;"></div>
<svg style="left:1279.00px;top:447.50px;" width="6.00" height="10.00" viewBox="0 0 6 10"><path d="M0.7 0.7 V9 L5 4.8Z" fill="none" stroke="#222" stroke-width="1"/></svg>
<div style="left:1263.00px;top:738.40px;width:413.00px;height:3.20px;background:#ffffff;"></div>
<div style="left:1680.70px;top:738.40px;width:150.00px;height:3.20px;background:#ffffff;"></div>
<div class="t" style="left:1629.30px;top:748.91px;font-size:17px;color:#ffffff;font-family:'Liberation Sans', sans-serif;letter-spacing:-0.669px;">Now</div>
<div class="t" style="left:1753.50px;top:748.91px;font-size:17px;color:#ffffff;font-family:'Liberation Sans', sans-serif;letter-spacing:-0.340px;">0.175 ns</div>
<div style="left:1336.50px;top:774.40px;width:339.50px;height:26.00px;background:#ffffff;"></div>
<div style="left:1680.70px;top:774.40px;width:150.00px;height:26.00px;background:#ffffff;"></div>
<div class="t" style="left:1598.80px;top:779.21px;font-size:17px;color:#15152a;font-family:'Liberation Sans', sans-serif;letter-spacing:-0.336px;">Cursor 1</div>
<div class="t" style="left:1753.50px;top:779.21px;font-size:17px;color:#15152a;font-family:'Liberation Sans', sans-serif;letter-spacing:-0.340px;">0.098 ns</div>
<div style="left:1263.00px;top:800.80px;width:413.00px;height:3.20px;background:#ffffff;"></div>
<div style="left:1680.70px;top:800.80px;width:150.00px;height:3.20px;background:#ffffff;"></div>
<svg style="left:1277.50px;top:748.00px;" width="52.00" height="20.00" viewBox="0 0 52 20"><path d="M2 15 h14 M2 15 l3 -2.5 M2 15 l3 2.5 M16 15 l-3 -2.5 M16 15 l-3 2.5" stroke="#4a78d8" stroke-width="1.3" fill="none"/><path d="M4 12 L9 2 L11 8 L14 4 L16 12Z" fill="#a8a8a8" stroke="#666" stroke-width="0.8"/><rect x="18" y="3" width="16" height="12" rx="1.5" fill="#5890e0" stroke="#3868b8" stroke-width="1"/><path d="M20 7 h9 M20 10 h7" stroke="#d8e8ff" stroke-width="1.5"/><path d="M22 15 l3 4 l3 -4z" fill="#5890e0"/><circle cx="44" cy="10.5" r="7.3" fill="#58c048" stroke="#d8f0d0" stroke-width="1.4"/><path d="M40.5 10.5 h7 M44 7 v7" stroke="#fff" stroke-width="2.2"/></svg>
<svg style="left:1281.00px;top:777.00px;" width="54.00" height="22.00" viewBox="0 0 54 22"><rect x="2" y="9" width="14" height="11" fill="#f0b820" stroke="#b88808" stroke-width="1"/><path d="M4.5 9 V5.5 Q4.5 1.5 9 1.5 Q13.5 1.5 13.5 5" fill="none" stroke="#c8c8c8" stroke-width="2"/><rect x="7" y="12.5" width="4" height="4" fill="#fff8d0"/><path d="M21 18 L31 8" stroke="#4888e0" stroke-width="4" stroke-linecap="round"/><path d="M29 3 Q27.5 8 32 10 Q35 9 35.5 5.5 L32.5 7.5 L30.5 6Z" fill="#d8e0f0" stroke="#a8b0c8" stroke-width="0.8"/><circle cx="45.5" cy="10" r="7.3" fill="#e85048" stroke="#f8c8c0" stroke-width="1.2"/><path d="M41.5 10 h8" stroke="#fff" stroke-width="2.4"/></svg>
<div style="left:1263.00px;top:804.00px;width:13.50px;height:28.50px;background:#808080;"></div>
<div style="left:1276.50px;top:806.00px;width:398.50px;height:25.20px;background:#f8f8f8;"></div>
<div style="left:1276.5px;top:806px;width:26.200000000000045px;height:25.200000000000045px;background:#f0f0f0;border-top:1px solid #fff;border-left:1px solid #fff;border-right:2px solid #909090;border-bottom:2px solid #909090;"></div>
<svg style="left:1276.50px;top:806.00px;" width="26.20" height="25.20" viewBox="0 0 26.200000000000045 25.200000000000045"><path d="M15.600000000000023 7.600000000000023 v9.5 l-6 -4.75z" fill="#fff" transform="translate(1.2,1.2)"/><path d="M15.600000000000023 7.600000000000023 v9.5 l-6 -4.75z" fill="#9c9c9c"/></svg>
<div style="left:1648.8px;top:806px;width:26.200000000000045px;height:25.200000000000045px;background:#f0f0f0;border-top:1px solid #fff;border-left:1px solid #fff;border-right:2px solid #909090;border-bottom:2px solid #909090;"></div>
<svg style="left:1648.80px;top:806.00px;" width="26.20" height="25.20" viewBox="0 0 26.200000000000045 25.200000000000045"><path d="M10.100000000000023 7.600000000000023 v9.5 l6 -4.75z" fill="#fff" transform="translate(1.2,1.2)"/><path d="M10.100000000000023 7.600000000000023 v9.5 l6 -4.75z" fill="#9c9c9c"/></svg>
<div style="left:1680.70px;top:806.00px;width:148.80px;height:25.20px;background:#f8f8f8;"></div>
<div style="left:1680.7px;top:806px;width:26.200000000000045px;height:25.200000000000045px;background:#f0f0f0;border-top:1px solid #fff;border-left:1px solid #fff;border-right:2px solid #909090;border-bottom:2px solid #909090;"></div>
<svg style="left:1680.70px;top:806.00px;" width="26.20" height="25.20" viewBox="0 0 26.200000000000045 25.200000000000045"><path d="M15.600000000000023 7.600000000000023 v9.5 l-6 -4.75z" fill="#fff" transform="translate(1.2,1.2)"/><path d="M15.600000000000023 7.600000000000023 v9.5 l-6 -4.75z" fill="#9c9c9c"/></svg>
<div style="left:1803.3px;top:806px;width:26.200000000000045px;height:25.200000000000045px;background:#f0f0f0;border-top:1px solid #fff;border-left:1px solid #fff;border-right:2px solid #909090;border-bottom:2px solid #909090;"></div>
<svg style="left:1803.30px;top:806.00px;" width="26.20" height="25.20" viewBox="0 0 26.200000000000045 25.200000000000045"><path d="M10.100000000000023 7.600000000000023 v9.5 l6 -4.75z" fill="#fff" transform="translate(1.2,1.2)"/><path d="M10.100000000000023 7.600000000000023 v9.5 l6 -4.75z" fill="#9c9c9c"/></svg>
<svg style="left:1835.00px;top:213.50px;font-family:'Liberation Sans',sans-serif;" width="1268.30" height="586.50" viewBox="0 0 1268.3 586.5"><rect width="1268.3" height="586.5" fill="#000"/><rect x="0" y="27.80000000000001" width="1268.3" height="3.2" fill="#fff"/><rect x="72.34" y="31.0" width="1.3" height="493.5" fill="#8a8a8a"/><rect x="140.78" y="31.0" width="1.3" height="493.5" fill="#8a8a8a"/><rect x="209.22" y="31.0" width="1.3" height="493.5" fill="#8a8a8a"/><rect x="277.66" y="31.0" width="1.3" height="493.5" fill="#8a8a8a"/><rect x="346.10" y="31.0" width="1.3" height="493.5" fill="#8a8a8a"/><rect x="414.54" y="31.0" width="1.3" height="493.5" fill="#8a8a8a"/><rect x="482.98" y="31.0" width="1.3" height="493.5" fill="#8a8a8a"/><rect x="551.42" y="31.0" width="1.3" height="493.5" fill="#8a8a8a"/><rect x="619.86" y="31.0" width="1.3" height="493.5" fill="#8a8a8a"/><rect x="688.30" y="31.0" width="1.3" height="493.5" fill="#8a8a8a"/><rect x="756.74" y="31.0" width="1.3" height="493.5" fill="#8a8a8a"/><rect x="825.18" y="31.0" width="1.3" height="493.5" fill="#8a8a8a"/><rect x="893.62" y="31.0" width="1.3" height="493.5" fill="#8a8a8a"/><rect x="962.06" y="31.0" width="1.3" height="493.5" fill="#8a8a8a"/><rect x="1030.50" y="31.0" width="1.3" height="493.5" fill="#8a8a8a"/><rect x="1098.94" y="31.0" width="1.3" height="493.5" fill="#8a8a8a"/><rect x="1167.38" y="31.0" width="1.3" height="493.5" fill="#8a8a8a"/><rect x="1235.82" y="31.0" width="1.3" height="493.5" fill="#8a8a8a"/><path d="M5.00 46.80000000000001 V37.30000000000001 H38.72 V55.69999999999999 H72.94 V37.30000000000001 H107.16 V55.69999999999999 H141.38 V37.30000000000001 H175.60 V55.69999999999999 H209.82 V37.30000000000001 H244.04 V55.69999999999999 H278.26 V37.30000000000001 H312.48 V55.69999999999999 H346.70 V37.30000000000001 H380.92 V55.69999999999999 H415.14 V37.30000000000001 H449.36 V55.69999999999999 H483.58 V37.30000000000001 H517.80 V55.69999999999999 H552.02 V37.30000000000001 H586.24 V55.69999999999999 H620.46 V37.30000000000001 H654.68 V55.69999999999999 H688.90 V37.30000000000001 H723.12 V55.69999999999999 H757.34 V37.30000000000001 H791.56 V55.69999999999999 H825.78 V37.30000000000001 H860.00 V55.69999999999999 H894.22 V37.30000000000001 H928.44 V55.69999999999999 H962.66 V37.30000000000001 H996.88 V55.69999999999999 H1031.10 V37.30000000000001 H1065.32 V55.69999999999999 H1099.54 V37.30000000000001 H1133.76 V55.69999999999999 H1167.98 V37.30000000000001 H1202.20 V55.69999999999999" fill="none" stroke="#28dc00" stroke-width="1.7"/><path d="M5.00 72.69999999999999 V80.69999999999999 H155.07 V62.69999999999999 H1202.20" fill="none" stroke="#28dc00" stroke-width="1.7"/><path d="M13.70 88.67999999999998 H214.46 L216.66 97.67999999999998 L214.46 106.67999999999998 H13.70 L11.50 97.67999999999998Z" fill="none" stroke="#9fdc9f" stroke-width="1.7" stroke-linejoin="round"/><text x="17.70" y="102.98" fill="#fff" font-size="16" textLength="34.1" lengthAdjust="spacingAndGlyphs">0000</text><path d="M218.86 88.67999999999998 H282.90 L285.10 97.67999999999998 L282.90 106.67999999999998 H218.86 L216.66 97.67999999999998Z" fill="none" stroke="#9fdc9f" stroke-width="1.7" stroke-linejoin="round"/><text x="222.86" y="102.98" fill="#fff" font-size="16" textLength="34.1" lengthAdjust="spacingAndGlyphs">0001</text><path d="M287.30 88.67999999999998 H351.34 L353.54 97.67999999999998 L351.34 106.67999999999998 H287.30 L285.10 97.67999999999998Z" fill="none" stroke="#9fdc9f" stroke-width="1.7" stroke-linejoin="round"/><text x="291.30" y="102.98" fill="#fff" font-size="16" textLength="34.1" lengthAdjust="spacingAndGlyphs">0010</text><path d="M355.74 88.67999999999998 H419.78 L421.98 97.67999999999998 L419.78 106.67999999999998 H355.74 L353.54 97.67999999999998Z" fill="none" stroke="#9fdc9f" stroke-width="1.7" stroke-linejoin="round"/><text x="359.74" y="102.98" fill="#fff" font-size="16" textLength="34.1" lengthAdjust="spacingAndGlyphs">0011</text><path d="M424.18 88.67999999999998 H488.22 L490.42 97.67999999999998 L488.22 106.67999999999998 H424.18 L421.98 97.67999999999998Z" fill="none" stroke="#9fdc9f" stroke-width="1.7" stroke-linejoin="round"/><text x="428.18" y="102.98" fill="#fff" font-size="16" textLength="34.1" lengthAdjust="spacingAndGlyphs">0100</text><path d="M492.62 88.67999999999998 H556.66 L558.86 97.67999999999998 L556.66 106.67999999999998 H492.62 L490.42 97.67999999999998Z" fill="none" stroke="#9fdc9f" stroke-width="1.7" stroke-linejoin="round"/><text x="496.62" y="102.98" fill="#fff" font-size="16" textLength="34.1" lengthAdjust="spacingAndGlyphs">0101</text><path d="M561.06 88.67999999999998 H625.10 L627.30 97.67999999999998 L625.10 106.67999999999998 H561.06 L558.86 97.67999999999998Z" fill="none" stroke="#9fdc9f" stroke-width="1.7" stroke-linejoin="round"/><text x="565.06" y="102.98" fill="#fff" font-size="16" textLength="34.1" lengthAdjust="spacingAndGlyphs">0110</text><path d="M629.50 88.67999999999998 H693.54 L695.74 97.67999999999998 L693.54 106.67999999999998 H629.50 L627.30 97.67999999999998Z" fill="none" stroke="#9fdc9f" stroke-width="1.7" stroke-linejoin="round"/><text x="633.50" y="102.98" fill="#fff" font-size="16" textLength="34.1" lengthAdjust="spacingAndGlyphs">0111</text><path d="M697.94 88.67999999999998 H761.98 L764.18 97.67999999999998 L761.98 106.67999999999998 H697.94 L695.74 97.67999999999998Z" fill="none" stroke="#9fdc9f" stroke-width="1.7" stroke-linejoin="round"/><text x="701.94" y="102.98" fill="#fff" font-size="16" textLength="34.1" lengthAdjust="spacingAndGlyphs">1000</text><path d="M766.38 88.67999999999998 H830.42 L832.62 97.67999999999998 L830.42 106.67999999999998 H766.38 L764.18 97.67999999999998Z" fill="none" stroke="#9fdc9f" stroke-width="1.7" stroke-linejoin="round"/><text x="770.38" y="102.98" fill="#fff" font-size="16" textLength="34.1" lengthAdjust="spacingAndGlyphs">1001</text><path d="M834.82 88.67999999999998 H898.86 L901.06 97.67999999999998 L898.86 106.67999999999998 H834.82 L832.62 97.67999999999998Z" fill="none" stroke="#9fdc9f" stroke-width="1.7" stroke-linejoin="round"/><text x="838.82" y="102.98" fill="#fff" font-size="16" textLength="34.1" lengthAdjust="spacingAndGlyphs">1010</text><path d="M903.26 88.67999999999998 H967.30 L969.50 97.67999999999998 L967.30 106.67999999999998 H903.26 L901.06 97.67999999999998Z" fill="none" stroke="#9fdc9f" stroke-width="1.7" stroke-linejoin="round"/><text x="907.26" y="102.98" fill="#fff" font-size="16" textLength="34.1" lengthAdjust="spacingAndGlyphs">1011</text><path d="M971.70 88.67999999999998 H1035.74 L1037.94 97.67999999999998 L1035.74 106.67999999999998 H971.70 L969.50 97.67999999999998Z" fill="none" stroke="#9fdc9f" stroke-width="1.7" stroke-linejoin="round"/><text x="975.70" y="102.98" fill="#fff" font-size="16" textLength="34.1" lengthAdjust="spacingAndGlyphs">1100</text><path d="M1040.14 88.67999999999998 H1104.18 L1106.38 97.67999999999998 L1104.18 106.67999999999998 H1040.14 L1037.94 97.67999999999998Z" fill="none" stroke="#9fdc9f" stroke-width="1.7" stroke-linejoin="round"/><text x="1044.14" y="102.98" fill="#fff" font-size="16" textLength="34.1" lengthAdjust="spacingAndGlyphs">1101</text><path d="M1108.58 88.67999999999998 H1172.62 L1174.82 97.67999999999998 L1172.62 106.67999999999998 H1108.58 L1106.38 97.67999999999998Z" fill="none" stroke="#9fdc9f" stroke-width="1.7" stroke-linejoin="round"/><text x="1112.58" y="102.98" fill="#fff" font-size="16" textLength="34.1" lengthAdjust="spacingAndGlyphs">1110</text><path d="M1202.20 88.67999999999998 H1177.02 L1174.82 97.67999999999998 L1177.02 106.67999999999998 H1202.20" fill="none" stroke="#9fdc9f" stroke-width="1.7" stroke-linejoin="round"/><path d="M13.70 114.22 H214.46 L216.66 123.22 L214.46 132.22 H13.70 L11.50 123.22Z" fill="none" stroke="#9fdc9f" stroke-width="1.7" stroke-linejoin="round"/><text x="17.70" y="128.52" fill="#fff" font-size="16" textLength="25.3" lengthAdjust="spacingAndGlyphs">000</text><path d="M218.86 114.22 H351.34 L353.54 123.22 L351.34 132.22 H218.86 L216.66 123.22Z" fill="none" stroke="#9fdc9f" stroke-width="1.7" stroke-linejoin="round"/><text x="222.86" y="128.52" fill="#fff" font-size="16" textLength="25.3" lengthAdjust="spacingAndGlyphs">001</text><path d="M355.74 114.22 H488.22 L490.42 123.22 L488.22 132.22 H355.74 L353.54 123.22Z" fill="none" stroke="#9fdc9f" stroke-width="1.7" stroke-linejoin="round"/><text x="359.74" y="128.52" fill="#fff" font-size="16" textLength="25.3" lengthAdjust="spacingAndGlyphs">000</text><path d="M492.62 114.22 H625.10 L627.30 123.22 L625.10 132.22 H492.62 L490.42 123.22Z" fill="none" stroke="#9fdc9f" stroke-width="1.7" stroke-linejoin="round"/><text x="496.62" y="128.52" fill="#fff" font-size="16" textLength="25.3" lengthAdjust="spacingAndGlyphs">001</text><path d="M629.50 114.22 H761.98 L764.18 123.22 L761.98 132.22 H629.50 L627.30 123.22Z" fill="none" stroke="#9fdc9f" stroke-width="1.7" stroke-linejoin="round"/><text x="633.50" y="128.52" fill="#fff" font-size="16" textLength="25.3" lengthAdjust="spacingAndGlyphs">000</text><path d="M766.38 114.22 H898.86 L901.06 123.22 L898.86 132.22 H766.38 L764.18 123.22Z" fill="none" stroke="#9fdc9f" stroke-width="1.7" stroke-linejoin="round"/><text x="770.38" y="128.52" fill="#fff" font-size="16" textLength="25.3" lengthAdjust="spacingAndGlyphs">001</text><path d="M903.26 114.22 H967.30 L969.50 123.22 L967.30 132.22 H903.26 L901.06 123.22Z" fill="none" stroke="#9fdc9f" stroke-width="1.7" stroke-linejoin="round"/><text x="907.26" y="128.52" fill="#fff" font-size="16" textLength="25.3" lengthAdjust="spacingAndGlyphs">000</text><path d="M971.70 114.22 H1035.74 L1037.94 123.22 L1035.74 132.22 H971.70 L969.50 123.22Z" fill="none" stroke="#9fdc9f" stroke-width="1.7" stroke-linejoin="round"/><text x="975.70" y="128.52" fill="#fff" font-size="16" textLength="25.3" lengthAdjust="spacingAndGlyphs">010</text><path d="M1040.14 114.22 H1172.62 L1174.82 123.22 L1172.62 132.22 H1040.14 L1037.94 123.22Z" fill="none" stroke="#9fdc9f" stroke-width="1.7" stroke-linejoin="round"/><text x="1044.14" y="128.52" fill="#fff" font-size="16" textLength="25.3" lengthAdjust="spacingAndGlyphs">011</text><path d="M1202.20 114.22 H1177.02 L1174.82 123.22 L1177.02 132.22 H1202.20" fill="none" stroke="#9fdc9f" stroke-width="1.7" stroke-linejoin="round"/><path d="M13.70 139.76000000000002 H214.46 L216.66 148.76000000000002 L214.46 157.76000000000002 H13.70 L11.50 148.76000000000002Z" fill="none" stroke="#9fdc9f" stroke-width="1.7" stroke-linejoin="round"/><text x="17.70" y="154.06" fill="#fff" font-size="16" textLength="60.5" lengthAdjust="spacingAndGlyphs">1000000</text><path d="M218.86 139.76000000000002 H282.90 L285.10 148.76000000000002 L282.90 157.76000000000002 H218.86 L216.66 148.76000000000002Z" fill="none" stroke="#9fdc9f" stroke-width="1.7" stroke-linejoin="round"/><text x="222.86" y="154.06" fill="#fff" font-size="16" textLength="41.7" lengthAdjust="spacingAndGlyphs">111...</text><path d="M287.30 139.76000000000002 H351.34 L353.54 148.76000000000002 L351.34 157.76000000000002 H287.30 L285.10 148.76000000000002Z" fill="none" stroke="#9fdc9f" stroke-width="1.7" stroke-linejoin="round"/><text x="291.30" y="154.06" fill="#fff" font-size="16" textLength="50.5" lengthAdjust="spacingAndGlyphs">0100...</text><path d="M355.74 139.76000000000002 H419.78 L421.98 148.76000000000002 L419.78 157.76000000000002 H355.74 L353.54 148.76000000000002Z" fill="none" stroke="#9fdc9f" stroke-width="1.7" stroke-linejoin="round"/><text x="359.74" y="154.06" fill="#fff" font-size="16" textLength="50.5" lengthAdjust="spacingAndGlyphs">0110...</text><path d="M424.18 139.76000000000002 H488.22 L490.42 148.76000000000002 L488.22 157.76000000000002 H424.18 L421.98 148.76000000000002Z" fill="none" stroke="#9fdc9f" stroke-width="1.7" stroke-linejoin="round"/><text x="428.18" y="154.06" fill="#fff" font-size="16" textLength="41.7" lengthAdjust="spacingAndGlyphs">001...</text><path d="M492.62 139.76000000000002 H556.66 L558.86 148.76000000000002 L556.66 157.76000000000002 H492.62 L490.42 148.76000000000002Z" fill="none" stroke="#9fdc9f" stroke-width="1.7" stroke-linejoin="round"/><text x="496.62" y="154.06" fill="#fff" font-size="16" textLength="50.5" lengthAdjust="spacingAndGlyphs">0010...</text><path d="M561.06 139.76000000000002 H625.10 L627.30 148.76000000000002 L625.10 157.76000000000002 H561.06 L558.86 148.76000000000002Z" fill="none" stroke="#9fdc9f" stroke-width="1.7" stroke-linejoin="round"/><text x="565.06" y="154.06" fill="#fff" font-size="16" textLength="41.7" lengthAdjust="spacingAndGlyphs">000...</text><path d="M629.50 139.76000000000002 H693.54 L695.74 148.76000000000002 L693.54 157.76000000000002 H629.50 L627.30 148.76000000000002Z" fill="none" stroke="#9fdc9f" stroke-width="1.7" stroke-linejoin="round"/><text x="633.50" y="154.06" fill="#fff" font-size="16" textLength="50.5" lengthAdjust="spacingAndGlyphs">1111...</text><path d="M697.94 139.76000000000002 H761.98 L764.18 148.76000000000002 L761.98 157.76000000000002 H697.94 L695.74 148.76000000000002Z" fill="none" stroke="#9fdc9f" stroke-width="1.7" stroke-linejoin="round"/><text x="701.94" y="154.06" fill="#fff" font-size="16" textLength="50.5" lengthAdjust="spacingAndGlyphs">0000...</text><path d="M766.38 139.76000000000002 H830.42 L832.62 148.76000000000002 L830.42 157.76000000000002 H766.38 L764.18 148.76000000000002Z" fill="none" stroke="#9fdc9f" stroke-width="1.7" stroke-linejoin="round"/><text x="770.38" y="154.06" fill="#fff" font-size="16" textLength="41.7" lengthAdjust="spacingAndGlyphs">001...</text><path d="M834.82 139.76000000000002 H898.86 L901.06 148.76000000000002 L898.86 157.76000000000002 H834.82 L832.62 148.76000000000002Z" fill="none" stroke="#9fdc9f" stroke-width="1.7" stroke-linejoin="round"/><text x="838.82" y="154.06" fill="#fff" font-size="16" textLength="50.5" lengthAdjust="spacingAndGlyphs">0001...</text><path d="M903.26 139.76000000000002 H967.30 L969.50 148.76000000000002 L967.30 157.76000000000002 H903.26 L901.06 148.76000000000002Z" fill="none" stroke="#9fdc9f" stroke-width="1.7" stroke-linejoin="round"/><text x="907.26" y="154.06" fill="#fff" font-size="16" textLength="41.7" lengthAdjust="spacingAndGlyphs">000...</text><path d="M971.70 139.76000000000002 H1035.74 L1037.94 148.76000000000002 L1035.74 157.76000000000002 H971.70 L969.50 148.76000000000002Z" fill="none" stroke="#9fdc9f" stroke-width="1.7" stroke-linejoin="round"/><text x="975.70" y="154.06" fill="#fff" font-size="16" textLength="50.5" lengthAdjust="spacingAndGlyphs">1000...</text><path d="M1040.14 139.76000000000002 H1104.18 L1106.38 148.76000000000002 L1104.18 157.76000000000002 H1040.14 L1037.94 148.76000000000002Z" fill="none" stroke="#9fdc9f" stroke-width="1.7" stroke-linejoin="round"/><text x="1044.14" y="154.06" fill="#fff" font-size="16" textLength="50.5" lengthAdjust="spacingAndGlyphs">0100...</text><path d="M1108.58 139.76000000000002 H1172.62 L1174.82 148.76000000000002 L1172.62 157.76000000000002 H1108.58 L1106.38 148.76000000000002Z" fill="none" stroke="#9fdc9f" stroke-width="1.7" stroke-linejoin="round"/><text x="1112.58" y="154.06" fill="#fff" font-size="16" textLength="41.7" lengthAdjust="spacingAndGlyphs">000...</text><path d="M1202.20 139.76000000000002 H1177.02 L1174.82 148.76000000000002 L1177.02 157.76000000000002 H1202.20" fill="none" stroke="#9fdc9f" stroke-width="1.7" stroke-linejoin="round"/><path d="M13.70 165.29999999999998 H214.46 L216.66 174.29999999999998 L214.46 183.29999999999998 H13.70 L11.50 174.29999999999998Z" fill="none" stroke="#9fdc9f" stroke-width="1.7" stroke-linejoin="round"/><text x="17.70" y="179.60" fill="#fff" font-size="16" textLength="60.5" lengthAdjust="spacingAndGlyphs">1000000</text><path d="M218.86 165.29999999999998 H282.90 L285.10 174.29999999999998 L282.90 183.29999999999998 H218.86 L216.66 174.29999999999998Z" fill="none" stroke="#9fdc9f" stroke-width="1.7" stroke-linejoin="round"/><text x="222.86" y="179.60" fill="#fff" font-size="16" textLength="41.7" lengthAdjust="spacingAndGlyphs">111...</text><path d="M287.30 165.29999999999998 H351.34 L353.54 174.29999999999998 L351.34 183.29999999999998 H287.30 L285.10 174.29999999999998Z" fill="none" stroke="#9fdc9f" stroke-width="1.7" stroke-linejoin="round"/><text x="291.30" y="179.60" fill="#fff" font-size="16" textLength="50.5" lengthAdjust="spacingAndGlyphs">0100...</text><path d="M355.74 165.29999999999998 H419.78 L421.98 174.29999999999998 L419.78 183.29999999999998 H355.74 L353.54 174.29999999999998Z" fill="none" stroke="#9fdc9f" stroke-width="1.7" stroke-linejoin="round"/><text x="359.74" y="179.60" fill="#fff" font-size="16" textLength="50.5" lengthAdjust="spacingAndGlyphs">0110...</text><path d="M424.18 165.29999999999998 H488.22 L490.42 174.29999999999998 L488.22 183.29999999999998 H424.18 L421.98 174.29999999999998Z" fill="none" stroke="#9fdc9f" stroke-width="1.7" stroke-linejoin="round"/><text x="428.18" y="179.60" fill="#fff" font-size="16" textLength="41.7" lengthAdjust="spacingAndGlyphs">001...</text><path d="M492.62 165.29999999999998 H556.66 L558.86 174.29999999999998 L556.66 183.29999999999998 H492.62 L490.42 174.29999999999998Z" fill="none" stroke="#9fdc9f" stroke-width="1.7" stroke-linejoin="round"/><text x="496.62" y="179.60" fill="#fff" font-size="16" textLength="50.5" lengthAdjust="spacingAndGlyphs">0010...</text><path d="M561.06 165.29999999999998 H625.10 L627.30 174.29999999999998 L625.10 183.29999999999998 H561.06 L558.86 174.29999999999998Z" fill="none" stroke="#9fdc9f" stroke-width="1.7" stroke-linejoin="round"/><text x="565.06" y="179.60" fill="#fff" font-size="16" textLength="41.7" lengthAdjust="spacingAndGlyphs">000...</text><path d="M629.50 165.29999999999998 H693.54 L695.74 174.29999999999998 L693.54 183.29999999999998 H629.50 L627.30 174.29999999999998Z" fill="none" stroke="#9fdc9f" stroke-width="1.7" stroke-linejoin="round"/><text x="633.50" y="179.60" fill="#fff" font-size="16" textLength="50.5" lengthAdjust="spacingAndGlyphs">1111...</text><path d="M697.94 165.29999999999998 H761.98 L764.18 174.29999999999998 L761.98 183.29999999999998 H697.94 L695.74 174.29999999999998Z" fill="none" stroke="#9fdc9f" stroke-width="1.7" stroke-linejoin="round"/><text x="701.94" y="179.60" fill="#fff" font-size="16" textLength="50.5" lengthAdjust="spacingAndGlyphs">0000...</text><path d="M766.38 165.29999999999998 H830.42 L832.62 174.29999999999998 L830.42 183.29999999999998 H766.38 L764.18 174.29999999999998Z" fill="none" stroke="#9fdc9f" stroke-width="1.7" stroke-linejoin="round"/><text x="770.38" y="179.60" fill="#fff" font-size="16" textLength="41.7" lengthAdjust="spacingAndGlyphs">001...</text><path d="M834.82 165.29999999999998 H898.86 L901.06 174.29999999999998 L898.86 183.29999999999998 H834.82 L832.62 174.29999999999998Z" fill="none" stroke="#9fdc9f" stroke-width="1.7" stroke-linejoin="round"/><text x="838.82" y="179.60" fill="#fff" font-size="16" textLength="50.5" lengthAdjust="spacingAndGlyphs">0001...</text><path d="M903.26 165.29999999999998 H967.30 L969.50 174.29999999999998 L967.30 183.29999999999998 H903.26 L901.06 174.29999999999998Z" fill="none" stroke="#9fdc9f" stroke-width="1.7" stroke-linejoin="round"/><text x="907.26" y="179.60" fill="#fff" font-size="16" textLength="41.7" lengthAdjust="spacingAndGlyphs">000...</text><path d="M971.70 165.29999999999998 H1035.74 L1037.94 174.29999999999998 L1035.74 183.29999999999998 H971.70 L969.50 174.29999999999998Z" fill="none" stroke="#9fdc9f" stroke-width="1.7" stroke-linejoin="round"/><text x="975.70" y="179.60" fill="#fff" font-size="16" textLength="50.5" lengthAdjust="spacingAndGlyphs">1000...</text><path d="M1040.14 165.29999999999998 H1104.18 L1106.38 174.29999999999998 L1104.18 183.29999999999998 H1040.14 L1037.94 174.29999999999998Z" fill="none" stroke="#9fdc9f" stroke-width="1.7" stroke-linejoin="round"/><text x="1044.14" y="179.60" fill="#fff" font-size="16" textLength="50.5" lengthAdjust="spacingAndGlyphs">0100...</text><path d="M1108.58 165.29999999999998 H1172.62 L1174.82 174.29999999999998 L1172.62 183.29999999999998 H1108.58 L1106.38 174.29999999999998Z" fill="none" stroke="#9fdc9f" stroke-width="1.7" stroke-linejoin="round"/><text x="1112.58" y="179.60" fill="#fff" font-size="16" textLength="41.7" lengthAdjust="spacingAndGlyphs">000...</text><path d="M1202.20 165.29999999999998 H1177.02 L1174.82 174.29999999999998 L1177.02 183.29999999999998 H1202.20" fill="none" stroke="#9fdc9f" stroke-width="1.7" stroke-linejoin="round"/><path d="M6.70 190.84 H173.40 L175.60 199.84 L173.40 208.84 H6.70 L4.50 199.84Z" fill="none" stroke="#9fdc9f" stroke-width="1.7" stroke-linejoin="round"/><text x="10.70" y="205.14" fill="#fff" font-size="16" textLength="69.2" lengthAdjust="spacingAndGlyphs">00000000</text><path d="M177.80 190.84 H241.84 L244.04 199.84 L241.84 208.84 H177.80 L175.60 199.84Z" fill="none" stroke="#9fdc9f" stroke-width="1.7" stroke-linejoin="round"/><text x="181.80" y="205.14" fill="#fff" font-size="16" textLength="50.5" lengthAdjust="spacingAndGlyphs">0000...</text><path d="M246.24 190.84 H310.28 L312.48 199.84 L310.28 208.84 H246.24 L244.04 199.84Z" fill="none" stroke="#9fdc9f" stroke-width="1.7" stroke-linejoin="round"/><text x="250.24" y="205.14" fill="#fff" font-size="16" textLength="50.5" lengthAdjust="spacingAndGlyphs">0000...</text><path d="M314.68 190.84 H378.72 L380.92 199.84 L378.72 208.84 H314.68 L312.48 199.84Z" fill="none" stroke="#9fdc9f" stroke-width="1.7" stroke-linejoin="round"/><text x="318.68" y="205.14" fill="#fff" font-size="16" textLength="41.7" lengthAdjust="spacingAndGlyphs">000...</text><path d="M383.12 190.84 H447.16 L449.36 199.84 L447.16 208.84 H383.12 L380.92 199.84Z" fill="none" stroke="#9fdc9f" stroke-width="1.7" stroke-linejoin="round"/><text x="387.12" y="205.14" fill="#fff" font-size="16" textLength="50.5" lengthAdjust="spacingAndGlyphs">0000...</text><path d="M451.56 190.84 H515.60 L517.80 199.84 L515.60 208.84 H451.56 L449.36 199.84Z" fill="none" stroke="#9fdc9f" stroke-width="1.7" stroke-linejoin="round"/><text x="455.56" y="205.14" fill="#fff" font-size="16" textLength="41.7" lengthAdjust="spacingAndGlyphs">000...</text><path d="M520.00 190.84 H584.04 L586.24 199.84 L584.04 208.84 H520.00 L517.80 199.84Z" fill="none" stroke="#9fdc9f" stroke-width="1.7" stroke-linejoin="round"/><text x="524.00" y="205.14" fill="#fff" font-size="16" textLength="50.5" lengthAdjust="spacingAndGlyphs">0000...</text><path d="M588.44 190.84 H652.48 L654.68 199.84 L652.48 208.84 H588.44 L586.24 199.84Z" fill="none" stroke="#9fdc9f" stroke-width="1.7" stroke-linejoin="round"/><text x="592.44" y="205.14" fill="#fff" font-size="16" textLength="50.5" lengthAdjust="spacingAndGlyphs">0000...</text><path d="M656.88 190.84 H720.92 L723.12 199.84 L720.92 208.84 H656.88 L654.68 199.84Z" fill="none" stroke="#9fdc9f" stroke-width="1.7" stroke-linejoin="round"/><text x="660.88" y="205.14" fill="#fff" font-size="16" textLength="41.7" lengthAdjust="spacingAndGlyphs">000...</text><path d="M725.32 190.84 H789.36 L791.56 199.84 L789.36 208.84 H725.32 L723.12 199.84Z" fill="none" stroke="#9fdc9f" stroke-width="1.7" stroke-linejoin="round"/><text x="729.32" y="205.14" fill="#fff" font-size="16" textLength="50.5" lengthAdjust="spacingAndGlyphs">0000...</text><path d="M793.76 190.84 H857.80 L860.00 199.84 L857.80 208.84 H793.76 L791.56 199.84Z" fill="none" stroke="#9fdc9f" stroke-width="1.7" stroke-linejoin="round"/><text x="797.76" y="205.14" fill="#fff" font-size="16" textLength="41.7" lengthAdjust="spacingAndGlyphs">000...</text><path d="M862.20 190.84 H926.24 L928.44 199.84 L926.24 208.84 H862.20 L860.00 199.84Z" fill="none" stroke="#9fdc9f" stroke-width="1.7" stroke-linejoin="round"/><text x="866.20" y="205.14" fill="#fff" font-size="16" textLength="50.5" lengthAdjust="spacingAndGlyphs">0000...</text><path d="M930.64 190.84 H994.68 L996.88 199.84 L994.68 208.84 H930.64 L928.44 199.84Z" fill="none" stroke="#9fdc9f" stroke-width="1.7" stroke-linejoin="round"/><text x="934.64" y="205.14" fill="#fff" font-size="16" textLength="50.5" lengthAdjust="spacingAndGlyphs">0000...</text><path d="M999.08 190.84 H1063.12 L1065.32 199.84 L1063.12 208.84 H999.08 L996.88 199.84Z" fill="none" stroke="#9fdc9f" stroke-width="1.7" stroke-linejoin="round"/><text x="1003.08" y="205.14" fill="#fff" font-size="16" textLength="41.7" lengthAdjust="spacingAndGlyphs">000...</text><path d="M1067.52 190.84 H1131.56 L1133.76 199.84 L1131.56 208.84 H1067.52 L1065.32 199.84Z" fill="none" stroke="#9fdc9f" stroke-width="1.7" stroke-linejoin="round"/><text x="1071.52" y="205.14" fill="#fff" font-size="16" textLength="50.5" lengthAdjust="spacingAndGlyphs">0000...</text><path d="M1135.96 190.84 H1200.00 L1202.20 199.84 L1200.00 208.84 H1135.96 L1133.76 199.84Z" fill="none" stroke="#9fdc9f" stroke-width="1.7" stroke-linejoin="round"/><text x="1139.96" y="205.14" fill="#fff" font-size="16" textLength="41.7" lengthAdjust="spacingAndGlyphs">000...</text><path d="M1202.20 216.38000000000002 H6.70 L4.50 225.38000000000002 L6.70 234.38000000000002 H1202.20" fill="none" stroke="#9fdc9f" stroke-width="1.7" stroke-linejoin="round"/><text x="10.70" y="230.68" fill="#fff" font-size="16" textLength="69.2" lengthAdjust="spacingAndGlyphs">00000000</text><path d="M4.50 97.67999999999998 h6" stroke="#f01010" stroke-width="1.8"/><path d="M4.50 174.29999999999998 h6" stroke="#f01010" stroke-width="1.8"/><path d="M6.10 114.22 h3.6 l1.6 3 v12 l-1.6 3 h-3.6 l-1.6 -3 v-12z" fill="none" stroke="#f01010" stroke-width="1.6"/><path d="M6.30 139.76000000000002 h3 l1.6 9 l-1.6 9 h-3 l-1.6 -9z" fill="none" stroke="#9fdc9f" stroke-width="1.5"/><rect x="0" y="524.1" width="1268.3" height="3.4" fill="#fff"/><rect x="10.44" y="532.3" width="1.9" height="6" fill="#38ec08"/><rect x="17.29" y="532.3" width="1.9" height="6" fill="#38ec08"/><rect x="24.13" y="532.3" width="1.9" height="6" fill="#38ec08"/><rect x="30.98" y="532.3" width="1.9" height="6" fill="#38ec08"/><rect x="37.82" y="532.3" width="1.9" height="6" fill="#38ec08"/><rect x="44.66" y="532.3" width="1.9" height="6" fill="#38ec08"/><rect x="51.51" y="532.3" width="1.9" height="6" fill="#38ec08"/><rect x="58.35" y="532.3" width="1.9" height="6" fill="#38ec08"/><rect x="65.20" y="532.3" width="1.9" height="6" fill="#38ec08"/><rect x="72.04" y="528.1" width="1.9" height="10.2" fill="#38ec08"/><rect x="78.88" y="532.3" width="1.9" height="6" fill="#38ec08"/><rect x="85.73" y="532.3" width="1.9" height="6" fill="#38ec08"/><rect x="92.57" y="532.3" width="1.9" height="6" fill="#38ec08"/><rect x="99.42" y="532.3" width="1.9" height="6" fill="#38ec08"/><rect x="106.26" y="532.3" width="1.9" height="6" fill="#38ec08"/><rect x="113.10" y="532.3" width="1.9" height="6" fill="#38ec08"/><rect x="119.95" y="532.3" width="1.9" height="6" fill="#38ec08"/><rect x="126.79" y="532.3" width="1.9" height="6" fill="#38ec08"/><rect x="133.64" y="532.3" width="1.9" height="6" fill="#38ec08"/><rect x="140.48" y="528.1" width="1.9" height="10.2" fill="#38ec08"/><rect x="147.32" y="532.3" width="1.9" height="6" fill="#38ec08"/><rect x="154.17" y="532.3" width="1.9" height="6" fill="#38ec08"/><rect x="161.01" y="532.3" width="1.9" height="6" fill="#38ec08"/><rect x="167.86" y="532.3" width="1.9" height="6" fill="#38ec08"/><rect x="174.70" y="532.3" width="1.9" height="6" fill="#38ec08"/><rect x="181.54" y="532.3" width="1.9" height="6" fill="#38ec08"/><rect x="188.39" y="532.3" width="1.9" height="6" fill="#38ec08"/><rect x="195.23" y="532.3" width="1.9" height="6" fill="#38ec08"/><rect x="202.08" y="532.3" width="1.9" height="6" fill="#38ec08"/><rect x="208.92" y="528.1" width="1.9" height="10.2" fill="#38ec08"/><rect x="215.76" y="532.3" width="1.9" height="6" fill="#38ec08"/><rect x="222.61" y="532.3" width="1.9" height="6" fill="#38ec08"/><rect x="229.45" y="532.3" width="1.9" height="6" fill="#38ec08"/><rect x="236.30" y="532.3" width="1.9" height="6" fill="#38ec08"/><rect x="243.14" y="532.3" width="1.9" height="6" fill="#38ec08"/><rect x="249.98" y="532.3" width="1.9" height="6" fill="#38ec08"/><rect x="256.83" y="532.3" width="1.9" height="6" fill="#38ec08"/><rect x="263.67" y="532.3" width="1.9" height="6" fill="#38ec08"/><rect x="270.52" y="532.3" width="1.9" height="6" fill="#38ec08"/><rect x="277.36" y="528.1" width="1.9" height="10.2" fill="#38ec08"/><rect x="284.20" y="532.3" width="1.9" height="6" fill="#38ec08"/><rect x="291.05" y="532.3" width="1.9" height="6" fill="#38ec08"/><rect x="297.89" y="532.3" width="1.9" height="6" fill="#38ec08"/><rect x="304.74" y="532.3" width="1.9" height="6" fill="#38ec08"/><rect x="311.58" y="532.3" width="1.9" height="6" fill="#38ec08"/><rect x="318.42" y="532.3" width="1.9" height="6" fill="#38ec08"/><rect x="325.27" y="532.3" width="1.9" height="6" fill="#38ec08"/><rect x="332.11" y="532.3" width="1.9" height="6" fill="#38ec08"/><rect x="338.96" y="532.3" width="1.9" height="6" fill="#38ec08"/><rect x="345.80" y="528.1" width="1.9" height="10.2" fill="#38ec08"/><rect x="352.64" y="532.3" width="1.9" height="6" fill="#38ec08"/><rect x="359.49" y="532.3" width="1.9" height="6" fill="#38ec08"/><rect x="366.33" y="532.3" width="1.9" height="6" fill="#38ec08"/><rect x="373.18" y="532.3" width="1.9" height="6" fill="#38ec08"/><rect x="380.02" y="532.3" width="1.9" height="6" fill="#38ec08"/><rect x="386.86" y="532.3" width="1.9" height="6" fill="#38ec08"/><rect x="393.71" y="532.3" width="1.9" height="6" fill="#38ec08"/><rect x="400.55" y="532.3" width="1.9" height="6" fill="#38ec08"/><rect x="407.40" y="532.3" width="1.9" height="6" fill="#38ec08"/><rect x="414.24" y="528.1" width="1.9" height="10.2" fill="#38ec08"/><rect x="421.08" y="532.3" width="1.9" height="6" fill="#38ec08"/><rect x="427.93" y="532.3" width="1.9" height="6" fill="#38ec08"/><rect x="434.77" y="532.3" width="1.9" height="6" fill="#38ec08"/><rect x="441.62" y="532.3" width="1.9" height="6" fill="#38ec08"/><rect x="448.46" y="532.3" width="1.9" height="6" fill="#38ec08"/><rect x="455.30" y="532.3" width="1.9" height="6" fill="#38ec08"/><rect x="462.15" y="532.3" width="1.9" height="6" fill="#38ec08"/><rect x="468.99" y="532.3" width="1.9" height="6" fill="#38ec08"/><rect x="475.84" y="532.3" width="1.9" height="6" fill="#38ec08"/><rect x="482.68" y="528.1" width="1.9" height="10.2" fill="#38ec08"/><rect x="489.52" y="532.3" width="1.9" height="6" fill="#38ec08"/><rect x="496.37" y="532.3" width="1.9" height="6" fill="#38ec08"/><rect x="503.21" y="532.3" width="1.9" height="6" fill="#38ec08"/><rect x="510.06" y="532.3" width="1.9" height="6" fill="#38ec08"/><rect x="516.90" y="532.3" width="1.9" height="6" fill="#38ec08"/><rect x="523.74" y="532.3" width="1.9" height="6" fill="#38ec08"/><rect x="530.59" y="532.3" width="1.9" height="6" fill="#38ec08"/><rect x="537.43" y="532.3" width="1.9" height="6" fill="#38ec08"/><rect x="544.28" y="532.3" width="1.9" height="6" fill="#38ec08"/><rect x="551.12" y="528.1" width="1.9" height="10.2" fill="#38ec08"/><rect x="557.96" y="532.3" width="1.9" height="6" fill="#38ec08"/><rect x="564.81" y="532.3" width="1.9" height="6" fill="#38ec08"/><rect x="571.65" y="532.3" width="1.9" height="6" fill="#38ec08"/><rect x="578.50" y="532.3" width="1.9" height="6" fill="#38ec08"/><rect x="585.34" y="532.3" width="1.9" height="6" fill="#38ec08"/><rect x="592.18" y="532.3" width="1.9" height="6" fill="#38ec08"/><rect x="599.03" y="532.3" width="1.9" height="6" fill="#38ec08"/><rect x="605.87" y="532.3" width="1.9" height="6" fill="#38ec08"/><rect x="612.72" y="532.3" width="1.9" height="6" fill="#38ec08"/><rect x="619.56" y="528.1" width="1.9" height="10.2" fill="#38ec08"/><rect x="626.40" y="532.3" width="1.9" height="6" fill="#38ec08"/><rect x="633.25" y="532.3" width="1.9" height="6" fill="#38ec08"/><rect x="640.09" y="532.3" width="1.9" height="6" fill="#38ec08"/><rect x="646.94" y="532.3" width="1.9" height="6" fill="#38ec08"/><rect x="653.78" y="532.3" width="1.9" height="6" fill="#38ec08"/><rect x="660.62" y="532.3" width="1.9" height="6" fill="#38ec08"/><rect x="667.47" y="532.3" width="1.9" height="6" fill="#38ec08"/><rect x="674.31" y="532.3" width="1.9" height="6" fill="#38ec08"/><rect x="681.16" y="532.3" width="1.9" height="6" fill="#38ec08"/><rect x="688.00" y="528.1" width="1.9" height="10.2" fill="#38ec08"/><rect x="694.84" y="532.3" width="1.9" height="6" fill="#38ec08"/><rect x="701.69" y="532.3" width="1.9" height="6" fill="#38ec08"/><rect x="708.53" y="532.3" width="1.9" height="6" fill="#38ec08"/><rect x="715.38" y="532.3" width="1.9" height="6" fill="#38ec08"/><rect x="722.22" y="532.3" width="1.9" height="6" fill="#38ec08"/><rect x="729.06" y="532.3" width="1.9" height="6" fill="#38ec08"/><rect x="735.91" y="532.3" width="1.9" height="6" fill="#38ec08"/><rect x="742.75" y="532.3" width="1.9" height="6" fill="#38ec08"/><rect x="749.60" y="532.3" width="1.9" height="6" fill="#38ec08"/><rect x="756.44" y="528.1" width="1.9" height="10.2" fill="#38ec08"/><rect x="763.28" y="532.3" width="1.9" height="6" fill="#38ec08"/><rect x="770.13" y="532.3" width="1.9" height="6" fill="#38ec08"/><rect x="776.97" y="532.3" width="1.9" height="6" fill="#38ec08"/><rect x="783.82" y="532.3" width="1.9" height="6" fill="#38ec08"/><rect x="790.66" y="532.3" width="1.9" height="6" fill="#38ec08"/><rect x="797.50" y="532.3" width="1.9" height="6" fill="#38ec08"/><rect x="804.35" y="532.3" width="1.9" height="6" fill="#38ec08"/><rect x="811.19" y="532.3" width="1.9" height="6" fill="#38ec08"/><rect x="818.04" y="532.3" width="1.9" height="6" fill="#38ec08"/><rect x="824.88" y="528.1" width="1.9" height="10.2" fill="#38ec08"/><rect x="831.72" y="532.3" width="1.9" height="6" fill="#38ec08"/><rect x="838.57" y="532.3" width="1.9" height="6" fill="#38ec08"/><rect x="845.41" y="532.3" width="1.9" height="6" fill="#38ec08"/><rect x="852.26" y="532.3" width="1.9" height="6" fill="#38ec08"/><rect x="859.10" y="532.3" width="1.9" height="6" fill="#38ec08"/><rect x="865.94" y="532.3" width="1.9" height="6" fill="#38ec08"/><rect x="872.79" y="532.3" width="1.9" height="6" fill="#38ec08"/><rect x="879.63" y="532.3" width="1.9" height="6" fill="#38ec08"/><rect x="886.48" y="532.3" width="1.9" height="6" fill="#38ec08"/><rect x="893.32" y="528.1" width="1.9" height="10.2" fill="#38ec08"/><rect x="900.16" y="532.3" width="1.9" height="6" fill="#38ec08"/><rect x="907.01" y="532.3" width="1.9" height="6" fill="#38ec08"/><rect x="913.85" y="532.3" width="1.9" height="6" fill="#38ec08"/><rect x="920.70" y="532.3" width="1.9" height="6" fill="#38ec08"/><rect x="927.54" y="532.3" width="1.9" height="6" fill="#38ec08"/><rect x="934.38" y="532.3" width="1.9" height="6" fill="#38ec08"/><rect x="941.23" y="532.3" width="1.9" height="6" fill="#38ec08"/><rect x="948.07" y="532.3" width="1.9" height="6" fill="#38ec08"/><rect x="954.92" y="532.3" width="1.9" height="6" fill="#38ec08"/><rect x="961.76" y="528.1" width="1.9" height="10.2" fill="#38ec08"/><rect x="968.60" y="532.3" width="1.9" height="6" fill="#38ec08"/><rect x="975.45" y="532.3" width="1.9" height="6" fill="#38ec08"/><rect x="982.29" y="532.3" width="1.9" height="6" fill="#38ec08"/><rect x="989.14" y="532.3" width="1.9" height="6" fill="#38ec08"/><rect x="995.98" y="532.3" width="1.9" height="6" fill="#38ec08"/><rect x="1002.82" y="532.3" width="1.9" height="6" fill="#38ec08"/><rect x="1009.67" y="532.3" width="1.9" height="6" fill="#38ec08"/><rect x="1016.51" y="532.3" width="1.9" height="6" fill="#38ec08"/><rect x="1023.36" y="532.3" width="1.9" height="6" fill="#38ec08"/><rect x="1030.20" y="528.1" width="1.9" height="10.2" fill="#38ec08"/><rect x="1037.04" y="532.3" width="1.9" height="6" fill="#38ec08"/><rect x="1043.89" y="532.3" width="1.9" height="6" fill="#38ec08"/><rect x="1050.73" y="532.3" width="1.9" height="6" fill="#38ec08"/><rect x="1057.58" y="532.3" width="1.9" height="6" fill="#38ec08"/><rect x="1064.42" y="532.3" width="1.9" height="6" fill="#38ec08"/><rect x="1071.26" y="532.3" width="1.9" height="6" fill="#38ec08"/><rect x="1078.11" y="532.3" width="1.9" height="6" fill="#38ec08"/><rect x="1084.95" y="532.3" width="1.9" height="6" fill="#38ec08"/><rect x="1091.80" y="532.3" width="1.9" height="6" fill="#38ec08"/><rect x="1098.64" y="528.1" width="1.9" height="10.2" fill="#38ec08"/><rect x="1105.48" y="532.3" width="1.9" height="6" fill="#38ec08"/><rect x="1112.33" y="532.3" width="1.9" height="6" fill="#38ec08"/><rect x="1119.17" y="532.3" width="1.9" height="6" fill="#38ec08"/><rect x="1126.02" y="532.3" width="1.9" height="6" fill="#38ec08"/><rect x="1132.86" y="532.3" width="1.9" height="6" fill="#38ec08"/><rect x="1139.70" y="532.3" width="1.9" height="6" fill="#38ec08"/><rect x="1146.55" y="532.3" width="1.9" height="6" fill="#38ec08"/><rect x="1153.39" y="532.3" width="1.9" height="6" fill="#38ec08"/><rect x="1160.24" y="532.3" width="1.9" height="6" fill="#38ec08"/><rect x="1167.08" y="528.1" width="1.9" height="10.2" fill="#38ec08"/><rect x="1173.92" y="532.3" width="1.9" height="6" fill="#38ec08"/><rect x="1180.77" y="532.3" width="1.9" height="6" fill="#38ec08"/><rect x="1187.61" y="532.3" width="1.9" height="6" fill="#38ec08"/><rect x="1194.46" y="532.3" width="1.9" height="6" fill="#38ec08"/><rect x="1201.30" y="532.3" width="1.9" height="6" fill="#38ec08"/><rect x="1208.14" y="532.3" width="1.9" height="6" fill="#38ec08"/><rect x="1214.99" y="532.3" width="1.9" height="6" fill="#38ec08"/><rect x="1221.83" y="532.3" width="1.9" height="6" fill="#38ec08"/><rect x="1228.68" y="532.3" width="1.9" height="6" fill="#38ec08"/><rect x="1235.52" y="528.1" width="1.9" height="10.2" fill="#38ec08"/><rect x="1242.36" y="532.3" width="1.9" height="6" fill="#38ec08"/><rect x="1249.21" y="532.3" width="1.9" height="6" fill="#38ec08"/><rect x="1256.05" y="532.3" width="1.9" height="6" fill="#38ec08"/><rect x="1262.90" y="532.3" width="1.9" height="6" fill="#38ec08"/><text x="0.90" y="557.9" fill="#30dc10" font-size="16.5" textLength="30.6" lengthAdjust="spacingAndGlyphs">0 ns</text><text x="114.86" y="557.9" fill="#30dc10" font-size="16.5" textLength="53.0" lengthAdjust="spacingAndGlyphs">0.02 ns</text><text x="251.74" y="557.9" fill="#30dc10" font-size="16.5" textLength="53.0" lengthAdjust="spacingAndGlyphs">0.04 ns</text><text x="388.62" y="557.9" fill="#30dc10" font-size="16.5" textLength="53.0" lengthAdjust="spacingAndGlyphs">0.06 ns</text><text x="525.50" y="557.9" fill="#30dc10" font-size="16.5" textLength="53.0" lengthAdjust="spacingAndGlyphs">0.08 ns</text><text x="666.88" y="557.9" fill="#30dc10" font-size="16.5" textLength="44.0" lengthAdjust="spacingAndGlyphs">0.1 ns</text><text x="799.26" y="557.9" fill="#30dc10" font-size="16.5" textLength="53.0" lengthAdjust="spacingAndGlyphs">0.12 ns</text><text x="936.14" y="557.9" fill="#30dc10" font-size="16.5" textLength="53.0" lengthAdjust="spacingAndGlyphs">0.14 ns</text><text x="1073.02" y="557.9" fill="#30dc10" font-size="16.5" textLength="53.0" lengthAdjust="spacingAndGlyphs">0.16 ns</text><text x="1209.96" y="557.9" fill="#30dc10" font-size="16.5" textLength="53.0" lengthAdjust="spacingAndGlyphs">0.18 ns</text><rect x="0" y="539.0" width="4.3" height="22" fill="#000"/><rect x="4" y="561.3" width="1260" height="1.2" fill="#8c8c8c"/><rect x="672.1999999999998" y="0.8" width="4.8" height="561.1" fill="#ffc800"/><rect x="639.9000000000001" y="563.4" width="69.3" height="22.3" fill="#000" stroke="#f0c000" stroke-width="1.4"/><text x="642.3000000000002" y="581.8" fill="#e8b800" font-size="16.5" textLength="62" lengthAdjust="spacingAndGlyphs">0.098 ns</text></svg>
<div style="left:1835.00px;top:803.30px;width:1271.00px;height:3.00px;background:#f0f0f0;"></div>
<div style="left:1835.00px;top:805.00px;width:1268.00px;height:1.20px;background:#a0a0a0;"></div>
<div style="left:1836.00px;top:807.50px;width:1264.00px;height:21.00px;background:#f8f8f8;"></div>
<div style="left:1836px;top:807.5px;width:22.0px;height:21.0px;background:#f0f0f0;border-top:1px solid #fff;border-left:1px solid #fff;border-right:2px solid #909090;border-bottom:2px solid #909090;"></div>
<svg style="left:1836.00px;top:807.50px;" width="22.00" height="21.00" viewBox="0 0 22.0 21.0"><path d="M13.5 5.5 v9.5 l-6 -4.75z" fill="#000"/></svg>
<div style="left:3078.0px;top:807.5px;width:22.0px;height:21.0px;background:#f0f0f0;border-top:1px solid #fff;border-left:1px solid #fff;border-right:2px solid #909090;border-bottom:2px solid #909090;"></div>
<svg style="left:3078.00px;top:807.50px;" width="22.00" height="21.00" viewBox="0 0 22.0 21.0"><path d="M8.0 5.5 v9.5 l6 -4.75z" fill="#000"/></svg>
<div style="left:1858.5px;top:807.5px;width:1218.5px;height:21.0px;background:#f0f0f0;border-top:1px solid #fff;border-left:1px solid #fff;border-right:2px solid #909090;border-bottom:2px solid #909090;"></div>
<div style="left:2509.00px;top:809.00px;width:1.60px;height:18.00px;background:#f0c000;"></div>
<div style="left:1835.00px;top:828.50px;width:1268.00px;height:1.30px;background:#8c8c8c;"></div>
<div style="left:1263.00px;top:831.40px;width:1840.00px;height:1.20px;background:#a8a8a8;"></div>
<div style="left:3103.30px;top:211.50px;width:3.00px;height:622.00px;background:#ffffff;"></div>
<div style="left:3106.30px;top:211.50px;width:28.50px;height:622.00px;background:#f0f0f0;"></div>
<div style="left:3108.00px;top:214.00px;width:24.50px;height:25.00px;background:#808080;border-top:2px solid #666;border-left:2px solid #666;"></div>
<div style="left:3108.00px;top:246.00px;width:24.50px;height:486.00px;background:#f8f8f8;"></div>
<div style="left:3108px;top:246.4px;width:24.5px;height:20.5px;background:#f0f0f0;border-top:1px solid #fff;border-left:1px solid #fff;border-right:2px solid #909090;border-bottom:2px solid #909090;"></div>
<svg style="left:3108.00px;top:246.40px;" width="24.50" height="20.50" viewBox="0 0 24.5 20.5"><path d="M6.5 13 h10 l-5 -6z" fill="#000"/></svg>
<div style="left:3108px;top:267.5px;width:24.5px;height:444.5px;background:#f0f0f0;border-top:1px solid #fff;border-left:1px solid #fff;border-right:2px solid #909090;border-bottom:2px solid #909090;"></div>
<div style="left:3108px;top:712.5px;width:24.5px;height:19.5px;background:#f0f0f0;border-top:1px solid #fff;border-left:1px solid #fff;border-right:2px solid #909090;border-bottom:2px solid #909090;"></div>
<svg style="left:3108.00px;top:712.50px;" width="24.50" height="19.50" viewBox="0 0 24.5 19.5"><path d="M6.5 7 h10 l-5 6z" fill="#000"/></svg>
<div style="left:3108.00px;top:741.50px;width:24.50px;height:59.00px;background:#808080;border-top:2px solid #666;border-left:2px solid #666;"></div>
<div style="left:3108.00px;top:804.00px;width:24.50px;height:27.50px;background:#808080;border-top:2px solid #666;border-left:2px solid #666;"></div>
<div style="left:1259.00px;top:838.80px;width:1880.00px;height:2.30px;background:#2a2a2a;"></div>
<div style="left:1259.00px;top:841.00px;width:1880.00px;height:32.00px;background:#f0f0f0;"></div>
<div style="left:1259.6px;top:839px;width:108.5px;height:32.5px;background:#f0f0f0;border:2px solid #2c2c2c;border-top:none;border-radius:0 0 7px 7px;"></div>
<div style="left:1261.20px;top:838.50px;width:104.00px;height:3.00px;background:#f0f0f0;"></div>
<div style="left:1368.6px;top:841px;width:199.60000000000014px;height:30.5px;background:#c8c8c8;border:2px solid #2c2c2c;border-top:none;border-radius:0 0 7px 7px;"></div>
<svg style="left:1267.70px;top:843.50px;" width="22.00" height="22.00" viewBox="0 0 22.5 22.5"><rect x="0.5" y="0.5" width="21" height="21" fill="#000" stroke="#d8d8d8" stroke-width="1"/><rect x="1" y="1" width="20" height="4.5" fill="#fff"/><rect x="1" y="5.5" width="20" height="1.5" fill="#ccc"/><path d="M21.5 1 V21.5 H1" stroke="#444" stroke-width="1.4" fill="none"/><path d="M2 12 h4 v-3 h4 v6 h4 v-4 h6" fill="none" stroke="#10c030" stroke-width="1.8"/><path d="M2 18.5 h5 v-3 h3" fill="none" stroke="#10c030" stroke-width="1.6"/><path d="M10.5 18 h9" stroke="#3838e8" stroke-width="2"/><path d="M7.8 8 v12" stroke="#20d8e8" stroke-width="1.2"/></svg>
<div class="t" style="left:1295.40px;top:844.72px;font-size:17px;color:#15152a;font-family:'Liberation Sans', sans-serif;letter-spacing:-0.306px;">Wave</div>
<svg style="left:1348.00px;top:848.00px;" width="13.00" height="13.00" viewBox="0 0 13 13"><path d="M1.5 1.5 L11.5 11.5 M11.5 1.5 L1.5 11.5" stroke="#b0b0b0" stroke-width="2.6"/></svg>
<svg style="left:1376.00px;top:842.50px;" width="23.00" height="25.00" viewBox="0 0 23 25"><path d="M2 1 H16 L21 6 V24 H2Z" fill="#fff" stroke="#111" stroke-width="1.2"/><path d="M2.5 1 V24" stroke="#111" stroke-width="3"/><path d="M16 1 V6 H21" fill="none" stroke="#555" stroke-width="1"/></svg>
<div class="t" style="left:1404.40px;top:844.72px;font-size:17px;color:#15152a;font-family:'Liberation Sans', sans-serif;letter-spacing:-0.220px;">lab1_testbench.sv</div>
<svg style="left:1547.50px;top:848.00px;" width="13.00" height="13.00" viewBox="0 0 13 13"><path d="M1.5 1.5 L11.5 11.5 M11.5 1.5 L1.5 11.5" stroke="#9a9a9a" stroke-width="2.6"/></svg>
<div style="left:3107px;top:844px;width:13.6px;height:18.5px;background:#f0f0f0;border-top:1px solid #fff;border-left:1px solid #fff;border-right:2px solid #909090;border-bottom:2px solid #909090;"></div>
<div style="left:3122.5px;top:844px;width:13.6px;height:18.5px;background:#f0f0f0;border-top:1px solid #fff;border-left:1px solid #fff;border-right:2px solid #909090;border-bottom:2px solid #909090;"></div>
<svg style="left:3107.00px;top:845.50px;" width="14.00" height="15.00" viewBox="0 0 14 15"><path d="M8.5 3 L4 7.5 L8.5 12 M10.5 5 L8 7.5 L10.5 10" fill="none" stroke="#777" stroke-width="1.2"/></svg>
<svg style="left:3122.50px;top:845.50px;" width="14.00" height="15.00" viewBox="0 0 14 15"><path d="M4.5 3 L9 7.5 L4.5 12 M2.5 5 L5 7.5 L2.5 10" fill="none" stroke="#777" stroke-width="1.2"/></svg>
<div style="left:1.00px;top:883.00px;width:3137.00px;height:152.00px;background:#f0f0f0;"></div>
<div style="left:2.00px;top:883.00px;width:1.50px;height:150.00px;background:#a0a0a0;"></div>
<svg style="left:6.80px;top:887.00px;" width="20.50" height="21.50" viewBox="0 0 20.5 21.5"><path d="M2 20 V8 Q2 1.5 10 1.5 Q18.5 1.5 18.5 8 V20 L15 18 Q10 16.5 5.5 18Z" fill="#5a5a5a" stroke="#3a3a3a" stroke-width="1.2"/><path d="M5.5 18 V8.5 Q5.5 5 10 5 Q15 5 15 8.5 V18 Q10 16.5 5.5 18Z" fill="#f4f4f4"/><path d="M2 20 L5.5 18 Q10 16.5 15 18 L18.5 20 Q10 17 2 20Z" fill="#8a7a7a"/></svg>
<div class="t" style="left:33.40px;top:889.21px;font-size:17px;color:#15152a;font-family:'Liberation Sans', sans-serif;letter-spacing:-0.294px;">Transcript</div>
<div style="left:115.50px;top:895.00px;width:1460.00px;height:1.30px;background:#8c8c8c;"></div>
<div style="left:115.50px;top:896.30px;width:1460.00px;height:1.20px;background:#fdfdfd;"></div>
<div style="left:1602.00px;top:895.00px;width:1455.00px;height:1.30px;background:#8c8c8c;"></div>
<div style="left:1602.00px;top:896.30px;width:1455.00px;height:1.20px;background:#fdfdfd;"></div>
<div style="left:115.50px;top:902.20px;width:1460.00px;height:1.30px;background:#8c8c8c;"></div>
<div style="left:115.50px;top:903.50px;width:1460.00px;height:1.20px;background:#fdfdfd;"></div>
<div style="left:1602.00px;top:902.20px;width:1455.00px;height:1.30px;background:#8c8c8c;"></div>
<div style="left:1602.00px;top:903.50px;width:1455.00px;height:1.20px;background:#fdfdfd;"></div>
<svg style="left:1579.00px;top:894.60px;" width="21.00" height="10.00" viewBox="0 0 21 10"><rect x="0.0" y="0" width="1.5" height="1.5" fill="#555"/><rect x="0.0" y="3.6" width="1.5" height="1.5" fill="#555"/><rect x="0.0" y="7.2" width="1.5" height="1.5" fill="#555"/><rect x="3.2" y="0" width="1.5" height="1.5" fill="#555"/><rect x="3.2" y="3.6" width="1.5" height="1.5" fill="#555"/><rect x="3.2" y="7.2" width="1.5" height="1.5" fill="#555"/><rect x="6.4" y="0" width="1.5" height="1.5" fill="#555"/><rect x="6.4" y="3.6" width="1.5" height="1.5" fill="#555"/><rect x="6.4" y="7.2" width="1.5" height="1.5" fill="#555"/><rect x="9.6" y="0" width="1.5" height="1.5" fill="#555"/><rect x="9.6" y="3.6" width="1.5" height="1.5" fill="#555"/><rect x="9.6" y="7.2" width="1.5" height="1.5" fill="#555"/><rect x="12.8" y="0" width="1.5" height="1.5" fill="#555"/><rect x="12.8" y="3.6" width="1.5" height="1.5" fill="#555"/><rect x="12.8" y="7.2" width="1.5" height="1.5" fill="#555"/><rect x="16.0" y="0" width="1.5" height="1.5" fill="#555"/><rect x="16.0" y="3.6" width="1.5" height="1.5" fill="#555"/><rect x="16.0" y="7.2" width="1.5" height="1.5" fill="#555"/></svg>
<div style="left:3064px;top:889.5px;width:17px;height:16.5px;background:#f0f0f0;border-top:1px solid #fff;border-left:1px solid #fff;border-right:2px solid #909090;border-bottom:2px solid #909090;"></div>
<div style="left:3088px;top:889.5px;width:18px;height:16.5px;background:#f0f0f0;border-top:1px solid #fff;border-left:1px solid #fff;border-right:2px solid #909090;border-bottom:2px solid #909090;"></div>
<div style="left:3113.5px;top:889.5px;width:19.0px;height:16.5px;background:#f0f0f0;border-top:1px solid #fff;border-left:1px solid #fff;border-right:2px solid #909090;border-bottom:2px solid #909090;"></div>
<svg style="left:3064.00px;top:889.50px;" width="17.00" height="16.50" viewBox="0 0 17 16.5"><path d="M2.5 7.75 h11 M8.0 2.25 v11" stroke="#000" stroke-width="2.4"/></svg>
<svg style="left:3088.00px;top:889.50px;" width="18.00" height="16.50" viewBox="0 0 18 16.5"><rect x="3.5" y="6.75" width="6.5" height="6.5" fill="none" stroke="#000" stroke-width="1.6"/><path d="M6.5 10.25 L13.0 3.75" stroke="#000" stroke-width="2"/><path d="M8.5 2.25 h6 v6z" fill="#000"/></svg>
<svg style="left:3113.50px;top:889.50px;" width="19.00" height="16.50" viewBox="0 0 19.0 16.5"><path d="M4.0 2.75 l10 10 M14.0 2.75 l-10 10" stroke="#000" stroke-width="2"/></svg>
<div style="left:7.60px;top:911.00px;width:3098.00px;height:118.50px;background:#ffffff;border-left:3px solid #3a3a3a;border-top:3px solid #3a3a3a;border-right:1px solid #d8d8d8;border-bottom:1px solid #d8d8d8;"></div>
<div class="t" style="left:13.00px;top:915.04px;font-size:17.49px;color:#2828f0;font-family:'Liberation Mono', monospace;letter-spacing:0.000px;">#    Time: 175 ps  Iteration: 1  Instance: /lab1_testbench</div>
<div class="t" style="left:13.00px;top:937.64px;font-size:17.49px;color:#28a050;font-family:'Liberation Mono', monospace;letter-spacing:0.000px;"># Break in Module lab1_testbench at C:/Users/ccoggshall/Desktop/e155lab1/e155lab1/lab1_cc/source/impl_1/lab1_testbench.sv line 83</div>
<div class="t" style="left:13.00px;top:960.24px;font-size:17.49px;color:#b8901c;font-family:'Liberation Mono', monospace;letter-spacing:0.000px;"># Causality operation skipped due to absence of debug database file</div>
<div class="t" style="left:10.90px;top:1004.41px;font-size:17px;color:#1a1a8a;font-family:'Liberation Sans', sans-serif;letter-spacing:-0.667px;">VSIM 6&gt;</div>
<div style="left:3110.50px;top:912.70px;width:25.00px;height:115.00px;background:#f8f8f8;"></div>
<div style="left:3110.5px;top:912.7px;width:25px;height:21.5px;background:#f0f0f0;border-top:1px solid #fff;border-left:1px solid #fff;border-right:2px solid #909090;border-bottom:2px solid #909090;"></div>
<svg style="left:3110.50px;top:912.70px;" width="25.00" height="21.50" viewBox="0 0 25 21.5"><path d="M7 13.5 h10 l-5 -6z" fill="#000"/></svg>
<div style="left:3110.5px;top:992px;width:25px;height:10.5px;background:#f0f0f0;border-top:1px solid #fff;border-left:1px solid #fff;border-right:2px solid #909090;border-bottom:2px solid #909090;"></div>
<div style="left:3110.5px;top:1006px;width:25px;height:21.5px;background:#f0f0f0;border-top:1px solid #fff;border-left:1px solid #fff;border-right:2px solid #909090;border-bottom:2px solid #909090;"></div>
<svg style="left:3110.50px;top:1006.00px;" width="25.00" height="21.50" viewBox="0 0 25 21.5"><path d="M7 7.5 h10 l-5 6z" fill="#000"/></svg>
<div style="left:1.00px;top:1031.50px;width:3137.00px;height:1.30px;background:#fdfdfd;"></div>
<div style="left:4px;top:1035.5px;width:295.5px;height:28px;background:#f0f0f0;border-top:1px solid #a0a0a0;border-left:1px solid #a0a0a0;border-right:1px solid #fff;border-bottom:1px solid #fff;"></div>
<div style="left:307px;top:1035.5px;width:2540px;height:28px;background:#f0f0f0;border-top:1px solid #a0a0a0;border-left:1px solid #a0a0a0;border-right:1px solid #fff;border-bottom:1px solid #fff;"></div>
<div style="left:2855px;top:1035.5px;width:254.5px;height:28px;background:#f0f0f0;border-top:1px solid #a0a0a0;border-left:1px solid #a0a0a0;border-right:1px solid #fff;border-bottom:1px solid #fff;"></div>
<div class="t" style="left:8.20px;top:1040.81px;font-size:17px;color:#15152a;font-family:'Liberation Sans', sans-serif;letter-spacing:-0.106px;">Now: 175 ps  Delta: 1</div>
<div class="t" style="left:312.50px;top:1040.81px;font-size:17px;color:#15152a;font-family:'Liberation Sans', sans-serif;letter-spacing:0.000px;">1</div>
<div class="t" style="left:2865.40px;top:1040.81px;font-size:17px;color:#15152a;font-family:'Liberation Sans', sans-serif;letter-spacing:-0.343px;">0 ps to 184 ps</div>
<svg style="left:3114.00px;top:1040.00px;" width="22.00" height="22.00" viewBox="0 0 22 22"><path d="M20 2 L2 20 M20 8 L8 20 M20 14 L14 20" stroke="#a0a0a0" stroke-width="1.6"/><path d="M21 3.5 L3.5 21 M21 9.5 L9.5 21 M21 15.5 L15.5 21" stroke="#fff" stroke-width="1.2"/></svg>
<svg style="left:0.00px;top:1055.00px;" width="9.00" height="9.00" viewBox="0 0 9 9"><path d="M0 0 V9 H9 Q0 9 0 0Z" fill="#fbfbfb"/><path d="M0.6 0 Q0.6 8.4 9 8.4" fill="none" stroke="#b4b4b4" stroke-width="1.3"/></svg>
<svg style="left:3130.00px;top:1055.00px;" width="9.00" height="9.00" viewBox="0 0 9 9"><path d="M9 0 V9 H0 Q9 9 9 0Z" fill="#fbfbfb"/><path d="M8.2 0 Q8.2 8.4 0 8.4" fill="none" stroke="#b4b4b4" stroke-width="1.3"/></svg>
<div style="left:0.00px;top:181.00px;width:1.40px;height:875.00px;background:#b8b8b8;"></div>
<div style="left:3137.20px;top:52.00px;width:1.40px;height:1003.00px;background:#b8b8b8;"></div>
</body></html>
